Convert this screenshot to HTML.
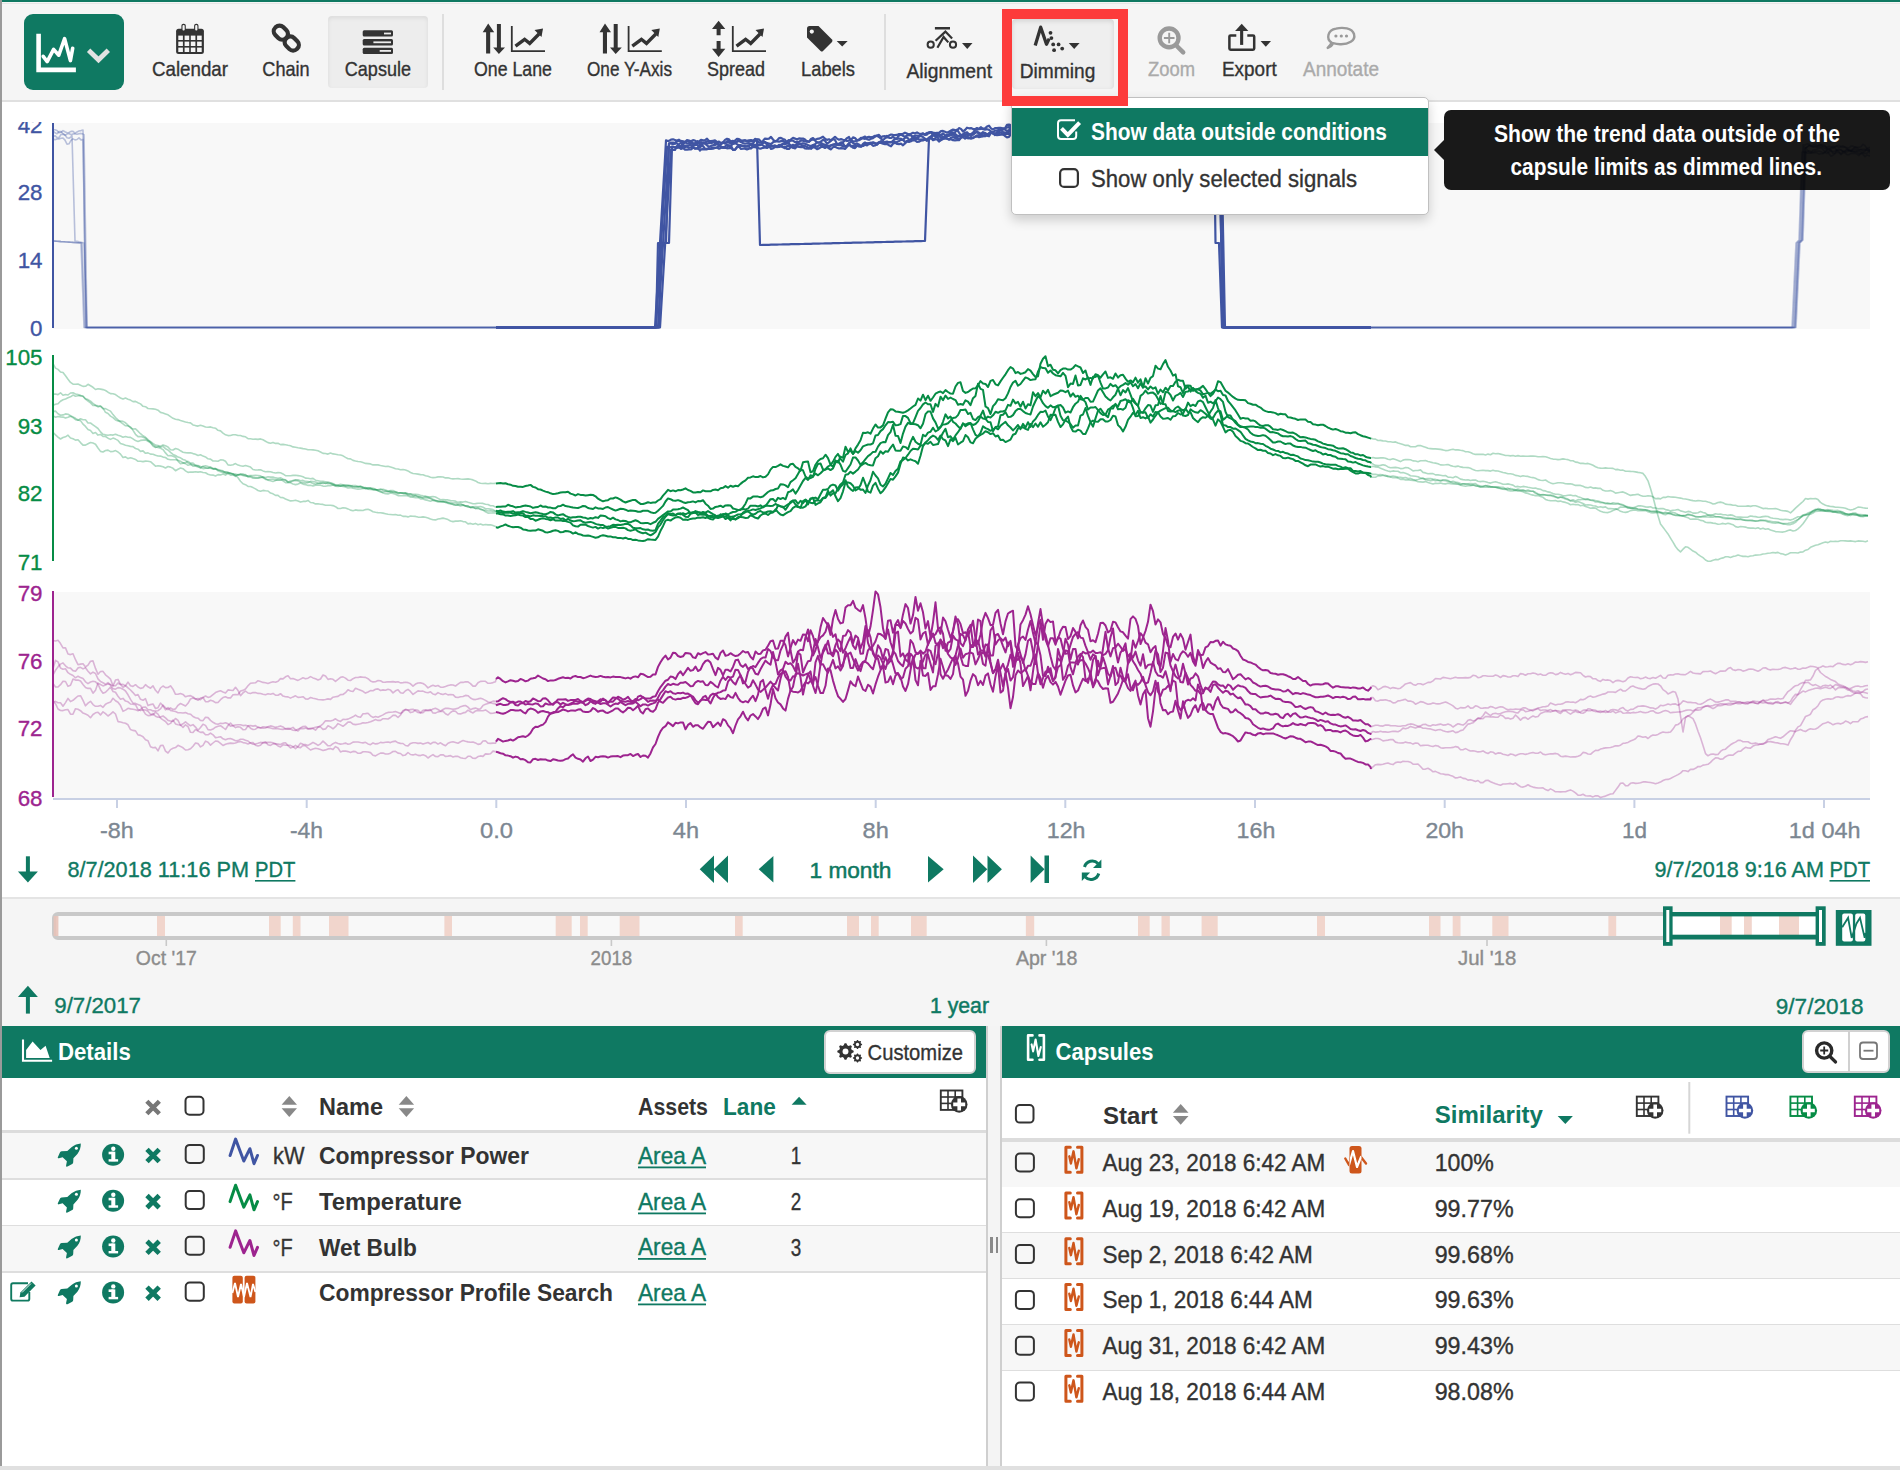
<!DOCTYPE html>
<html><head><meta charset="utf-8"><title>Seeq Trend - Dimming</title>
<style>
html,body{margin:0;padding:0;width:1900px;height:1470px;overflow:hidden;background:#fff}
body{position:relative;font-family:"Liberation Sans",sans-serif}
svg{position:absolute;left:0;top:0;overflow:visible}
svg text{font-family:"Liberation Sans",sans-serif}
</style></head><body>
<div id="bg"><div style="position:absolute;left:0px;top:0px;width:1900px;height:1470px;background:#fff"></div><div style="position:absolute;left:0px;top:0px;width:1900px;height:2px;background:#0f7962"></div><div style="position:absolute;left:0px;top:2px;width:1900px;height:98px;background:#f5f5f5"></div><div style="position:absolute;left:0px;top:3px;width:1900px;height:1px;background:#e6e6e6"></div><div style="position:absolute;left:0px;top:100px;width:1900px;height:2px;background:#e0e0e0"></div><div style="position:absolute;left:24px;top:14px;width:100px;height:76px;background:#0f7962;border-radius:9px"></div><div style="position:absolute;left:328px;top:16px;width:100px;height:72px;background:#ededed;border-radius:4px;box-shadow:inset 0 2px 4px rgba(0,0,0,0.08)"></div><div style="position:absolute;left:1012px;top:19px;width:102px;height:70px;background:#efefef;border-radius:4px;box-shadow:inset 0 2px 5px rgba(0,0,0,0.12)"></div><div style="position:absolute;left:442px;top:14px;width:2px;height:76px;background:#dedede"></div><div style="position:absolute;left:884px;top:14px;width:2px;height:76px;background:#dedede"></div><div style="position:absolute;left:53px;top:123px;width:1817px;height:206px;background:#f8f8f8"></div><div style="position:absolute;left:53px;top:592px;width:1817px;height:206px;background:#f8f8f8"></div><div style="position:absolute;left:0px;top:897px;width:1900px;height:2px;background:#e4e4e4"></div><div style="position:absolute;left:0px;top:899px;width:1900px;height:127px;background:#f5f5f5"></div><div style="position:absolute;left:0px;top:0px;width:2px;height:1466px;background:#9a9a9a"></div><div style="position:absolute;left:2px;top:1026px;width:984px;height:52px;background:#0f7962"></div><div style="position:absolute;left:986px;top:1026px;width:2px;height:440px;background:#cfcfcf"></div><div style="position:absolute;left:988px;top:1026px;width:12px;height:440px;background:#f4f4f4"></div><div style="position:absolute;left:1000px;top:1026px;width:2px;height:440px;background:#cfcfcf"></div><div style="position:absolute;left:990px;top:1237px;width:2.5px;height:16px;background:#8a8a8a"></div><div style="position:absolute;left:995.5px;top:1237px;width:2.5px;height:16px;background:#8a8a8a"></div><div style="position:absolute;left:1002px;top:1026px;width:898px;height:52px;background:#0f7962"></div><div style="position:absolute;left:0px;top:1466px;width:1900px;height:4px;background:#e0e0e0"></div><div style="position:absolute;left:2px;top:1130px;width:984px;height:3px;background:#dcdcdc"></div><div style="position:absolute;left:2px;top:1133px;width:984px;height:45px;background:#f7f7f7"></div><div style="position:absolute;left:2px;top:1178px;width:984px;height:2px;background:#dedede"></div><div style="position:absolute;left:2px;top:1180px;width:984px;height:45px;background:#fff"></div><div style="position:absolute;left:2px;top:1225px;width:984px;height:2px;background:#dedede"></div><div style="position:absolute;left:2px;top:1226px;width:984px;height:45px;background:#f7f7f7"></div><div style="position:absolute;left:2px;top:1271px;width:984px;height:2px;background:#dedede"></div><div style="position:absolute;left:1002px;top:1138px;width:898px;height:4px;background:#dcdcdc"></div><div style="position:absolute;left:1002px;top:1142px;width:898px;height:45px;background:#f7f7f7"></div><div style="position:absolute;left:1002px;top:1187px;width:898px;height:2px;background:#dedede"></div><div style="position:absolute;left:1002px;top:1187px;width:898px;height:45px;background:#fff"></div><div style="position:absolute;left:1002px;top:1232px;width:898px;height:2px;background:#dedede"></div><div style="position:absolute;left:1002px;top:1233px;width:898px;height:45px;background:#f7f7f7"></div><div style="position:absolute;left:1002px;top:1278px;width:898px;height:2px;background:#dedede"></div><div style="position:absolute;left:1002px;top:1279px;width:898px;height:45px;background:#fff"></div><div style="position:absolute;left:1002px;top:1324px;width:898px;height:2px;background:#dedede"></div><div style="position:absolute;left:1002px;top:1325px;width:898px;height:45px;background:#f7f7f7"></div><div style="position:absolute;left:1002px;top:1370px;width:898px;height:2px;background:#dedede"></div><div style="position:absolute;left:1002px;top:1371px;width:898px;height:45px;background:#fff"></div><div style="position:absolute;left:824px;top:1030px;width:152px;height:44px;background:#fff;border:2px solid #d2d2d2;border-radius:6px;box-sizing:border-box"></div><div style="position:absolute;left:1802px;top:1030px;width:88px;height:43px;background:#fff;border:2px solid #d2d2d2;border-radius:6px;box-sizing:border-box"></div><div style="position:absolute;left:1848px;top:1031px;width:2px;height:41px;background:#d0d0d0"></div></div>
<svg width="1900" height="1470" viewBox="0 0 1900 1470"><rect x="52" y="123" width="2" height="205" fill="#4055A3"/><rect x="52" y="355" width="2" height="206" fill="#068C45"/><rect x="52" y="591" width="2" height="206" fill="#9D248F"/><rect x="53" y="798" width="1817" height="2" fill="#c8d0e4"/><rect x="116.0" y="799" width="2" height="9" fill="#c8d0e4"/><rect x="305.7" y="799" width="2" height="9" fill="#c8d0e4"/><rect x="495.3" y="799" width="2" height="9" fill="#c8d0e4"/><rect x="685.0" y="799" width="2" height="9" fill="#c8d0e4"/><rect x="874.7" y="799" width="2" height="9" fill="#c8d0e4"/><rect x="1064.3" y="799" width="2" height="9" fill="#c8d0e4"/><rect x="1254.0" y="799" width="2" height="9" fill="#c8d0e4"/><rect x="1443.7" y="799" width="2" height="9" fill="#c8d0e4"/><rect x="1633.4" y="799" width="2" height="9" fill="#c8d0e4"/><rect x="1823.0" y="799" width="2" height="9" fill="#c8d0e4"/><clipPath id="plot"><rect x="54" y="100" width="1816" height="700"/></clipPath><g clip-path="url(#plot)"><path d="M53.0,129.7 L55.0,129.8 L57.0,130.4 L59.0,132.7 L61.0,132.3 L63.0,130.6 L65.0,131.7 L67.0,132.7 L69.0,132.5 L71.0,131.4 L73.0,131.4 L75.0,133.1 L77.0,132.0 L79.0,131.0 L81.0,130.6 L83.0,130.0 L85.0,262.7 L86.0,327.5 L87.0,327.5 L89.0,327.5 L91.0,327.5 L93.0,327.5 L95.0,327.5 L97.0,327.5 L99.0,327.5 L101.0,327.5 L103.0,327.5 L105.0,327.5 L107.0,327.5 L109.0,327.5 L111.0,327.5 L113.0,327.5 L115.0,327.5 L117.0,327.5 L119.0,327.5 L121.0,327.5 L123.0,327.5 L125.0,327.5 L127.0,327.5 L129.0,327.5 L131.0,327.5 L133.0,327.5 L135.0,327.5 L137.0,327.5 L139.0,327.5 L141.0,327.5 L143.0,327.5 L145.0,327.5 L147.0,327.5 L149.0,327.5 L151.0,327.5 L153.0,327.5 L155.0,327.5 L157.0,327.5 L159.0,327.5 L161.0,327.5 L163.0,327.5 L165.0,327.5 L167.0,327.5 L169.0,327.5 L171.0,327.5 L173.0,327.5 L175.0,327.5 L177.0,327.5 L179.0,327.5 L181.0,327.5 L183.0,327.5 L185.0,327.5 L187.0,327.5 L189.0,327.5 L191.0,327.5 L193.0,327.5 L195.0,327.5 L197.0,327.5 L199.0,327.5 L201.0,327.5 L203.0,327.5 L205.0,327.5 L207.0,327.5 L209.0,327.5 L211.0,327.5 L213.0,327.5 L215.0,327.5 L217.0,327.5 L219.0,327.5 L221.0,327.5 L223.0,327.5 L225.0,327.5 L227.0,327.5 L229.0,327.5 L231.0,327.5 L233.0,327.5 L235.0,327.5 L237.0,327.5 L239.0,327.5 L241.0,327.5 L243.0,327.5 L245.0,327.5 L247.0,327.5 L249.0,327.5 L251.0,327.5 L253.0,327.5 L255.0,327.5 L257.0,327.5 L259.0,327.5 L261.0,327.5 L263.0,327.5 L265.0,327.5 L267.0,327.5 L269.0,327.5 L271.0,327.5 L273.0,327.5 L275.0,327.5 L277.0,327.5 L279.0,327.5 L281.0,327.5 L283.0,327.5 L285.0,327.5 L287.0,327.5 L289.0,327.5 L291.0,327.5 L293.0,327.5 L295.0,327.5 L297.0,327.5 L299.0,327.5 L301.0,327.5 L303.0,327.5 L305.0,327.5 L307.0,327.5 L309.0,327.5 L311.0,327.5 L313.0,327.5 L315.0,327.5 L317.0,327.5 L319.0,327.5 L321.0,327.5 L323.0,327.5 L325.0,327.5 L327.0,327.5 L329.0,327.5 L331.0,327.5 L333.0,327.5 L335.0,327.5 L337.0,327.5 L339.0,327.5 L341.0,327.5 L343.0,327.5 L345.0,327.5 L347.0,327.5 L349.0,327.5 L351.0,327.5 L353.0,327.5 L355.0,327.5 L357.0,327.5 L359.0,327.5 L361.0,327.5 L363.0,327.5 L365.0,327.5 L367.0,327.5 L369.0,327.5 L371.0,327.5 L373.0,327.5 L375.0,327.5 L377.0,327.5 L379.0,327.5 L381.0,327.5 L383.0,327.5 L385.0,327.5 L387.0,327.5 L389.0,327.5 L391.0,327.5 L393.0,327.5 L395.0,327.5 L397.0,327.5 L399.0,327.5 L401.0,327.5 L403.0,327.5 L405.0,327.5 L407.0,327.5 L409.0,327.5 L411.0,327.5 L413.0,327.5 L415.0,327.5 L417.0,327.5 L419.0,327.5 L421.0,327.5 L423.0,327.5 L425.0,327.5 L427.0,327.5 L429.0,327.5 L431.0,327.5 L433.0,327.5 L435.0,327.5 L437.0,327.5 L439.0,327.5 L441.0,327.5 L443.0,327.5 L445.0,327.5 L447.0,327.5 L449.0,327.5 L451.0,327.5 L453.0,327.5 L455.0,327.5 L457.0,327.5 L459.0,327.5 L461.0,327.5 L463.0,327.5 L465.0,327.5 L467.0,327.5 L469.0,327.5 L471.0,327.5 L473.0,327.5 L475.0,327.5 L477.0,327.5 L479.0,327.5 L481.0,327.5 L483.0,327.5 L485.0,327.5 L487.0,327.5 L489.0,327.5 L491.0,327.5 L493.0,327.5 L495.0,327.5 L496.0,327.5" fill="none" stroke="#4055A3" stroke-opacity="0.35" stroke-width="1.6" stroke-linejoin="round"/><path d="M1371.0,327.5 L1373.0,327.5 L1375.0,327.5 L1377.0,327.5 L1379.0,327.5 L1381.0,327.5 L1383.0,327.5 L1385.0,327.5 L1387.0,327.5 L1389.0,327.5 L1391.0,327.5 L1393.0,327.5 L1395.0,327.5 L1397.0,327.5 L1399.0,327.5 L1401.0,327.5 L1403.0,327.5 L1405.0,327.5 L1407.0,327.5 L1409.0,327.5 L1411.0,327.5 L1413.0,327.5 L1415.0,327.5 L1417.0,327.5 L1419.0,327.5 L1421.0,327.5 L1423.0,327.5 L1425.0,327.5 L1427.0,327.5 L1429.0,327.5 L1431.0,327.5 L1433.0,327.5 L1435.0,327.5 L1437.0,327.5 L1439.0,327.5 L1441.0,327.5 L1443.0,327.5 L1445.0,327.5 L1447.0,327.5 L1449.0,327.5 L1451.0,327.5 L1453.0,327.5 L1455.0,327.5 L1457.0,327.5 L1459.0,327.5 L1461.0,327.5 L1463.0,327.5 L1465.0,327.5 L1467.0,327.5 L1469.0,327.5 L1471.0,327.5 L1473.0,327.5 L1475.0,327.5 L1477.0,327.5 L1479.0,327.5 L1481.0,327.5 L1483.0,327.5 L1485.0,327.5 L1487.0,327.5 L1489.0,327.5 L1491.0,327.5 L1493.0,327.5 L1495.0,327.5 L1497.0,327.5 L1499.0,327.5 L1501.0,327.5 L1503.0,327.5 L1505.0,327.5 L1507.0,327.5 L1509.0,327.5 L1511.0,327.5 L1513.0,327.5 L1515.0,327.5 L1517.0,327.5 L1519.0,327.5 L1521.0,327.5 L1523.0,327.5 L1525.0,327.5 L1527.0,327.5 L1529.0,327.5 L1531.0,327.5 L1533.0,327.5 L1535.0,327.5 L1537.0,327.5 L1539.0,327.5 L1541.0,327.5 L1543.0,327.5 L1545.0,327.5 L1547.0,327.5 L1549.0,327.5 L1551.0,327.5 L1553.0,327.5 L1555.0,327.5 L1557.0,327.5 L1559.0,327.5 L1561.0,327.5 L1563.0,327.5 L1565.0,327.5 L1567.0,327.5 L1569.0,327.5 L1571.0,327.5 L1573.0,327.5 L1575.0,327.5 L1577.0,327.5 L1579.0,327.5 L1581.0,327.5 L1583.0,327.5 L1585.0,327.5 L1587.0,327.5 L1589.0,327.5 L1591.0,327.5 L1593.0,327.5 L1595.0,327.5 L1597.0,327.5 L1599.0,327.5 L1601.0,327.5 L1603.0,327.5 L1605.0,327.5 L1607.0,327.5 L1609.0,327.5 L1611.0,327.5 L1613.0,327.5 L1615.0,327.5 L1617.0,327.5 L1619.0,327.5 L1621.0,327.5 L1623.0,327.5 L1625.0,327.5 L1627.0,327.5 L1629.0,327.5 L1631.0,327.5 L1633.0,327.5 L1635.0,327.5 L1637.0,327.5 L1639.0,327.5 L1641.0,327.5 L1643.0,327.5 L1645.0,327.5 L1647.0,327.5 L1649.0,327.5 L1651.0,327.5 L1653.0,327.5 L1655.0,327.5 L1657.0,327.5 L1659.0,327.5 L1661.0,327.5 L1663.0,327.5 L1665.0,327.5 L1667.0,327.5 L1669.0,327.5 L1671.0,327.5 L1673.0,327.5 L1675.0,327.5 L1677.0,327.5 L1679.0,327.5 L1681.0,327.5 L1683.0,327.5 L1685.0,327.5 L1687.0,327.5 L1689.0,327.5 L1691.0,327.5 L1693.0,327.5 L1695.0,327.5 L1697.0,327.5 L1699.0,327.5 L1701.0,327.5 L1703.0,327.5 L1705.0,327.5 L1707.0,327.5 L1709.0,327.5 L1711.0,327.5 L1713.0,327.5 L1715.0,327.5 L1717.0,327.5 L1719.0,327.5 L1721.0,327.5 L1723.0,327.5 L1725.0,327.5 L1727.0,327.5 L1729.0,327.5 L1731.0,327.5 L1733.0,327.5 L1735.0,327.5 L1737.0,327.5 L1739.0,327.5 L1741.0,327.5 L1743.0,327.5 L1745.0,327.5 L1747.0,327.5 L1749.0,327.5 L1751.0,327.5 L1753.0,327.5 L1755.0,327.5 L1757.0,327.5 L1759.0,327.5 L1761.0,327.5 L1763.0,327.5 L1765.0,327.5 L1767.0,327.5 L1769.0,327.5 L1771.0,327.5 L1773.0,327.5 L1775.0,327.5 L1777.0,327.5 L1779.0,327.5 L1781.0,327.5 L1783.0,327.5 L1785.0,327.5 L1787.0,327.5 L1789.0,327.5 L1791.0,327.5 L1793.0,327.5 L1795.0,285.2 L1797.0,243.0 L1799.0,241.0 L1800.0,240.0 L1801.0,208.3 L1803.0,144.9 L1805.0,145.0 L1807.0,143.9 L1809.0,144.1 L1811.0,146.1 L1813.0,145.2 L1815.0,144.2 L1817.0,145.8 L1819.0,145.1 L1821.0,144.7 L1823.0,144.8 L1825.0,145.7 L1827.0,149.0 L1829.0,149.9 L1831.0,147.6 L1833.0,146.4 L1835.0,146.8 L1837.0,146.2 L1839.0,147.6 L1841.0,146.4 L1843.0,145.9 L1845.0,147.2 L1847.0,147.6 L1849.0,147.9 L1851.0,146.0 L1853.0,146.1 L1855.0,147.5 L1857.0,147.3 L1859.0,147.2 L1861.0,146.7 L1863.0,144.3 L1865.0,145.7 L1867.0,148.4 L1869.0,147.8 L1870.0,147.2" fill="none" stroke="#4055A3" stroke-opacity="0.35" stroke-width="1.6" stroke-linejoin="round"/><path d="M496.0,327.5 L497.0,327.5 L499.0,327.5 L501.0,327.5 L503.0,327.5 L505.0,327.5 L507.0,327.5 L509.0,327.5 L511.0,327.5 L513.0,327.5 L515.0,327.5 L517.0,327.5 L519.0,327.5 L521.0,327.5 L523.0,327.5 L525.0,327.5 L527.0,327.5 L529.0,327.5 L531.0,327.5 L533.0,327.5 L535.0,327.5 L537.0,327.5 L539.0,327.5 L541.0,327.5 L543.0,327.5 L545.0,327.5 L547.0,327.5 L549.0,327.5 L551.0,327.5 L553.0,327.5 L555.0,327.5 L557.0,327.5 L559.0,327.5 L561.0,327.5 L563.0,327.5 L565.0,327.5 L567.0,327.5 L569.0,327.5 L571.0,327.5 L573.0,327.5 L575.0,327.5 L577.0,327.5 L579.0,327.5 L581.0,327.5 L583.0,327.5 L585.0,327.5 L587.0,327.5 L589.0,327.5 L591.0,327.5 L593.0,327.5 L595.0,327.5 L597.0,327.5 L599.0,327.5 L601.0,327.5 L603.0,327.5 L605.0,327.5 L607.0,327.5 L609.0,327.5 L611.0,327.5 L613.0,327.5 L615.0,327.5 L617.0,327.5 L619.0,327.5 L621.0,327.5 L623.0,327.5 L625.0,327.5 L627.0,327.5 L629.0,327.5 L631.0,327.5 L633.0,327.5 L635.0,327.5 L637.0,327.5 L639.0,327.5 L641.0,327.5 L643.0,327.5 L645.0,327.5 L647.0,327.5 L649.0,327.5 L651.0,327.5 L653.0,327.5 L655.0,327.5 L657.0,293.6 L659.0,259.7 L661.0,225.8 L663.0,191.9 L665.0,158.4 L666.0,140.4 L667.0,140.6 L669.0,140.9 L671.0,139.6 L673.0,139.3 L675.0,140.0 L677.0,141.0 L679.0,141.1 L681.0,140.8 L683.0,143.0 L685.0,142.2 L687.0,140.1 L689.0,140.6 L691.0,141.2 L693.0,140.1 L695.0,140.5 L697.0,143.4 L699.0,142.7 L700.0,140.6 L701.0,139.8 L703.0,140.3 L705.0,140.1 L707.0,138.7 L709.0,141.0 L711.0,141.2 L713.0,141.0 L715.0,143.3 L717.0,142.5 L719.0,141.5 L721.0,143.1 L723.0,142.4 L725.0,139.9 L727.0,138.8 L729.0,139.4 L731.0,142.0 L733.0,142.9 L735.0,140.5 L737.0,138.8 L739.0,139.2 L741.0,140.3 L743.0,140.5 L745.0,140.4 L747.0,140.9 L749.0,140.3 L751.0,140.0 L753.0,140.5 L755.0,140.4 L757.0,140.6 L759.0,142.5 L761.0,142.5 L763.0,140.8 L765.0,138.6 L767.0,138.9 L769.0,138.6 L771.0,136.9 L773.0,139.5 L775.0,141.5 L777.0,140.5 L779.0,138.2 L781.0,137.9 L783.0,138.9 L785.0,139.8 L787.0,142.6 L789.0,142.2 L791.0,139.3 L793.0,137.9 L795.0,138.6 L797.0,139.5 L799.0,138.4 L801.0,138.7 L803.0,138.6 L805.0,139.6 L807.0,141.6 L809.0,141.6 L811.0,140.1 L813.0,139.5 L815.0,139.8 L817.0,138.9 L819.0,138.7 L821.0,137.8 L823.0,136.7 L825.0,138.7 L827.0,139.9 L829.0,139.3 L831.0,140.4 L833.0,138.5 L835.0,136.8 L837.0,138.6 L839.0,139.7 L841.0,139.1 L843.0,139.7 L845.0,140.2 L847.0,138.1 L849.0,137.0 L850.0,138.9 L851.0,140.1 L853.0,137.4 L855.0,138.1 L857.0,140.3 L859.0,140.2 L861.0,139.1 L863.0,137.4 L865.0,136.5 L867.0,139.1 L869.0,139.8 L871.0,138.8 L873.0,138.2 L875.0,136.7 L877.0,135.5 L879.0,134.9 L881.0,137.2 L883.0,136.3 L885.0,136.2 L887.0,137.6 L889.0,135.4 L891.0,134.5 L893.0,134.9 L895.0,135.1 L897.0,134.9 L899.0,134.0 L901.0,134.1 L903.0,133.8 L905.0,132.7 L907.0,133.5 L909.0,135.4 L911.0,133.8 L913.0,132.8 L915.0,133.5 L917.0,132.4 L919.0,133.7 L921.0,134.0 L923.0,134.5 L925.0,134.1 L927.0,132.9 L929.0,133.2 L931.0,132.0 L933.0,132.6 L935.0,133.0 L937.0,132.9 L939.0,132.9 L941.0,131.1 L943.0,130.9 L945.0,131.8 L947.0,132.7 L949.0,131.6 L951.0,130.5 L953.0,129.6 L955.0,130.1 L957.0,130.6 L959.0,128.1 L961.0,128.9 L963.0,131.5 L965.0,130.0 L967.0,127.7 L969.0,128.3 L971.0,128.1 L973.0,129.1 L975.0,129.2 L977.0,128.0 L979.0,129.2 L981.0,129.0 L983.0,128.7 L985.0,128.4 L987.0,126.6 L989.0,125.7 L991.0,128.4 L993.0,129.7 L995.0,128.1 L997.0,128.2 L999.0,127.9 L1001.0,127.9 L1003.0,129.4 L1005.0,128.2 L1007.0,124.8 L1009.0,124.6 L1010.0,124.8 L1011.0,126.4 L1013.0,128.5 L1015.0,126.8 L1017.0,124.7 L1019.0,125.2 L1021.0,127.9 L1023.0,125.5 L1025.0,124.7 L1027.0,126.3 L1029.0,126.8 L1031.0,126.8 L1033.0,125.5 L1035.0,125.0 L1037.0,124.4 L1039.0,127.1 L1041.0,128.8 L1043.0,127.1 L1045.0,125.4 L1047.0,124.0 L1049.0,124.4 L1051.0,126.2 L1053.0,126.5 L1055.0,126.4 L1057.0,125.4 L1059.0,125.4 L1061.0,126.4 L1063.0,127.7 L1065.0,129.5 L1067.0,128.1 L1069.0,125.6 L1071.0,125.6 L1073.0,125.7 L1075.0,125.1 L1077.0,125.6 L1079.0,125.3 L1081.0,125.9 L1083.0,126.7 L1085.0,126.4 L1087.0,126.3 L1089.0,125.3 L1091.0,124.6 L1093.0,125.0 L1095.0,125.4 L1097.0,125.8 L1099.0,126.3 L1101.0,124.8 L1103.0,124.8 L1105.0,124.8 L1107.0,124.2 L1109.0,125.1 L1111.0,123.7 L1113.0,124.1 L1115.0,126.2 L1117.0,125.9 L1119.0,125.4 L1121.0,125.1 L1123.0,124.6 L1125.0,124.7 L1127.0,125.0 L1129.0,125.4 L1131.0,124.7 L1133.0,124.8 L1135.0,126.1 L1137.0,125.7 L1139.0,125.2 L1141.0,125.8 L1143.0,124.6 L1145.0,124.5 L1147.0,126.3 L1149.0,126.1 L1151.0,126.2 L1153.0,125.3 L1155.0,124.7 L1157.0,125.9 L1159.0,126.5 L1161.0,126.1 L1163.0,124.2 L1165.0,124.5 L1167.0,127.1 L1169.0,127.5 L1171.0,126.6 L1173.0,124.1 L1175.0,124.8 L1177.0,126.1 L1179.0,122.8 L1181.0,123.2 L1183.0,124.2 L1185.0,122.6 L1187.0,123.4 L1189.0,125.8 L1191.0,126.0 L1193.0,125.1 L1195.0,127.1 L1197.0,128.3 L1199.0,126.5 L1201.0,124.8 L1203.0,123.6 L1205.0,123.2 L1207.0,124.8 L1209.0,125.8 L1210.0,125.5 L1211.0,126.1 L1213.0,125.2 L1215.0,124.2 L1217.0,125.6 L1219.0,126.3 L1220.0,126.6 L1221.0,175.6 L1223.0,276.9 L1224.0,327.5 L1225.0,327.5 L1227.0,327.5 L1229.0,327.5 L1231.0,327.5 L1233.0,327.5 L1235.0,327.5 L1237.0,327.5 L1239.0,327.5 L1241.0,327.5 L1243.0,327.5 L1245.0,327.5 L1247.0,327.5 L1249.0,327.5 L1251.0,327.5 L1253.0,327.5 L1255.0,327.5 L1257.0,327.5 L1259.0,327.5 L1261.0,327.5 L1263.0,327.5 L1265.0,327.5 L1267.0,327.5 L1269.0,327.5 L1271.0,327.5 L1273.0,327.5 L1275.0,327.5 L1277.0,327.5 L1279.0,327.5 L1281.0,327.5 L1283.0,327.5 L1285.0,327.5 L1287.0,327.5 L1289.0,327.5 L1291.0,327.5 L1293.0,327.5 L1295.0,327.5 L1297.0,327.5 L1299.0,327.5 L1301.0,327.5 L1303.0,327.5 L1305.0,327.5 L1307.0,327.5 L1309.0,327.5 L1311.0,327.5 L1313.0,327.5 L1315.0,327.5 L1317.0,327.5 L1319.0,327.5 L1321.0,327.5 L1323.0,327.5 L1325.0,327.5 L1327.0,327.5 L1329.0,327.5 L1331.0,327.5 L1333.0,327.5 L1335.0,327.5 L1337.0,327.5 L1339.0,327.5 L1341.0,327.5 L1343.0,327.5 L1345.0,327.5 L1347.0,327.5 L1349.0,327.5 L1351.0,327.5 L1353.0,327.5 L1355.0,327.5 L1357.0,327.5 L1359.0,327.5 L1361.0,327.5 L1363.0,327.5 L1365.0,327.5 L1367.0,327.5 L1369.0,327.5 L1371.0,327.5" fill="none" stroke="#4055A3" stroke-width="2.2" stroke-linejoin="round"/><path d="M53.0,130.9 L55.0,132.8 L57.0,133.8 L59.0,131.6 L61.0,131.5 L63.0,133.7 L65.0,135.2 L67.0,134.1 L69.0,133.5 L71.0,134.7 L73.0,133.9 L75.0,133.7 L77.0,134.3 L79.0,133.7 L81.0,133.4 L83.0,134.1 L84.0,134.6 L85.0,198.8 L87.0,327.5 L89.0,327.5 L91.0,327.5 L93.0,327.5 L95.0,327.5 L97.0,327.5 L99.0,327.5 L101.0,327.5 L103.0,327.5 L105.0,327.5 L107.0,327.5 L109.0,327.5 L111.0,327.5 L113.0,327.5 L115.0,327.5 L117.0,327.5 L119.0,327.5 L121.0,327.5 L123.0,327.5 L125.0,327.5 L127.0,327.5 L129.0,327.5 L131.0,327.5 L133.0,327.5 L135.0,327.5 L137.0,327.5 L139.0,327.5 L141.0,327.5 L143.0,327.5 L145.0,327.5 L147.0,327.5 L149.0,327.5 L151.0,327.5 L153.0,327.5 L155.0,327.5 L157.0,327.5 L159.0,327.5 L161.0,327.5 L163.0,327.5 L165.0,327.5 L167.0,327.5 L169.0,327.5 L171.0,327.5 L173.0,327.5 L175.0,327.5 L177.0,327.5 L179.0,327.5 L181.0,327.5 L183.0,327.5 L185.0,327.5 L187.0,327.5 L189.0,327.5 L191.0,327.5 L193.0,327.5 L195.0,327.5 L197.0,327.5 L199.0,327.5 L201.0,327.5 L203.0,327.5 L205.0,327.5 L207.0,327.5 L209.0,327.5 L211.0,327.5 L213.0,327.5 L215.0,327.5 L217.0,327.5 L219.0,327.5 L221.0,327.5 L223.0,327.5 L225.0,327.5 L227.0,327.5 L229.0,327.5 L231.0,327.5 L233.0,327.5 L235.0,327.5 L237.0,327.5 L239.0,327.5 L241.0,327.5 L243.0,327.5 L245.0,327.5 L247.0,327.5 L249.0,327.5 L251.0,327.5 L253.0,327.5 L255.0,327.5 L257.0,327.5 L259.0,327.5 L261.0,327.5 L263.0,327.5 L265.0,327.5 L267.0,327.5 L269.0,327.5 L271.0,327.5 L273.0,327.5 L275.0,327.5 L277.0,327.5 L279.0,327.5 L281.0,327.5 L283.0,327.5 L285.0,327.5 L287.0,327.5 L289.0,327.5 L291.0,327.5 L293.0,327.5 L295.0,327.5 L297.0,327.5 L299.0,327.5 L301.0,327.5 L303.0,327.5 L305.0,327.5 L307.0,327.5 L309.0,327.5 L311.0,327.5 L313.0,327.5 L315.0,327.5 L317.0,327.5 L319.0,327.5 L321.0,327.5 L323.0,327.5 L325.0,327.5 L327.0,327.5 L329.0,327.5 L331.0,327.5 L333.0,327.5 L335.0,327.5 L337.0,327.5 L339.0,327.5 L341.0,327.5 L343.0,327.5 L345.0,327.5 L347.0,327.5 L349.0,327.5 L351.0,327.5 L353.0,327.5 L355.0,327.5 L357.0,327.5 L359.0,327.5 L361.0,327.5 L363.0,327.5 L365.0,327.5 L367.0,327.5 L369.0,327.5 L371.0,327.5 L373.0,327.5 L375.0,327.5 L377.0,327.5 L379.0,327.5 L381.0,327.5 L383.0,327.5 L385.0,327.5 L387.0,327.5 L389.0,327.5 L391.0,327.5 L393.0,327.5 L395.0,327.5 L397.0,327.5 L399.0,327.5 L401.0,327.5 L403.0,327.5 L405.0,327.5 L407.0,327.5 L409.0,327.5 L411.0,327.5 L413.0,327.5 L415.0,327.5 L417.0,327.5 L419.0,327.5 L421.0,327.5 L423.0,327.5 L425.0,327.5 L427.0,327.5 L429.0,327.5 L431.0,327.5 L433.0,327.5 L435.0,327.5 L437.0,327.5 L439.0,327.5 L441.0,327.5 L443.0,327.5 L445.0,327.5 L447.0,327.5 L449.0,327.5 L451.0,327.5 L453.0,327.5 L455.0,327.5 L457.0,327.5 L459.0,327.5 L461.0,327.5 L463.0,327.5 L465.0,327.5 L467.0,327.5 L469.0,327.5 L471.0,327.5 L473.0,327.5 L475.0,327.5 L477.0,327.5 L479.0,327.5 L481.0,327.5 L483.0,327.5 L485.0,327.5 L487.0,327.5 L489.0,327.5 L491.0,327.5 L493.0,327.5 L495.0,327.5 L496.0,327.5" fill="none" stroke="#4055A3" stroke-opacity="0.35" stroke-width="1.6" stroke-linejoin="round"/><path d="M1371.0,327.5 L1373.0,327.5 L1375.0,327.5 L1377.0,327.5 L1379.0,327.5 L1381.0,327.5 L1383.0,327.5 L1385.0,327.5 L1387.0,327.5 L1389.0,327.5 L1391.0,327.5 L1393.0,327.5 L1395.0,327.5 L1397.0,327.5 L1399.0,327.5 L1401.0,327.5 L1403.0,327.5 L1405.0,327.5 L1407.0,327.5 L1409.0,327.5 L1411.0,327.5 L1413.0,327.5 L1415.0,327.5 L1417.0,327.5 L1419.0,327.5 L1421.0,327.5 L1423.0,327.5 L1425.0,327.5 L1427.0,327.5 L1429.0,327.5 L1431.0,327.5 L1433.0,327.5 L1435.0,327.5 L1437.0,327.5 L1439.0,327.5 L1441.0,327.5 L1443.0,327.5 L1445.0,327.5 L1447.0,327.5 L1449.0,327.5 L1451.0,327.5 L1453.0,327.5 L1455.0,327.5 L1457.0,327.5 L1459.0,327.5 L1461.0,327.5 L1463.0,327.5 L1465.0,327.5 L1467.0,327.5 L1469.0,327.5 L1471.0,327.5 L1473.0,327.5 L1475.0,327.5 L1477.0,327.5 L1479.0,327.5 L1481.0,327.5 L1483.0,327.5 L1485.0,327.5 L1487.0,327.5 L1489.0,327.5 L1491.0,327.5 L1493.0,327.5 L1495.0,327.5 L1497.0,327.5 L1499.0,327.5 L1501.0,327.5 L1503.0,327.5 L1505.0,327.5 L1507.0,327.5 L1509.0,327.5 L1511.0,327.5 L1513.0,327.5 L1515.0,327.5 L1517.0,327.5 L1519.0,327.5 L1521.0,327.5 L1523.0,327.5 L1525.0,327.5 L1527.0,327.5 L1529.0,327.5 L1531.0,327.5 L1533.0,327.5 L1535.0,327.5 L1537.0,327.5 L1539.0,327.5 L1541.0,327.5 L1543.0,327.5 L1545.0,327.5 L1547.0,327.5 L1549.0,327.5 L1551.0,327.5 L1553.0,327.5 L1555.0,327.5 L1557.0,327.5 L1559.0,327.5 L1561.0,327.5 L1563.0,327.5 L1565.0,327.5 L1567.0,327.5 L1569.0,327.5 L1571.0,327.5 L1573.0,327.5 L1575.0,327.5 L1577.0,327.5 L1579.0,327.5 L1581.0,327.5 L1583.0,327.5 L1585.0,327.5 L1587.0,327.5 L1589.0,327.5 L1591.0,327.5 L1593.0,327.5 L1595.0,327.5 L1597.0,327.5 L1599.0,327.5 L1601.0,327.5 L1603.0,327.5 L1605.0,327.5 L1607.0,327.5 L1609.0,327.5 L1611.0,327.5 L1613.0,327.5 L1615.0,327.5 L1617.0,327.5 L1619.0,327.5 L1621.0,327.5 L1623.0,327.5 L1625.0,327.5 L1627.0,327.5 L1629.0,327.5 L1631.0,327.5 L1633.0,327.5 L1635.0,327.5 L1637.0,327.5 L1639.0,327.5 L1641.0,327.5 L1643.0,327.5 L1645.0,327.5 L1647.0,327.5 L1649.0,327.5 L1651.0,327.5 L1653.0,327.5 L1655.0,327.5 L1657.0,327.5 L1659.0,327.5 L1661.0,327.5 L1663.0,327.5 L1665.0,327.5 L1667.0,327.5 L1669.0,327.5 L1671.0,327.5 L1673.0,327.5 L1675.0,327.5 L1677.0,327.5 L1679.0,327.5 L1681.0,327.5 L1683.0,327.5 L1685.0,327.5 L1687.0,327.5 L1689.0,327.5 L1691.0,327.5 L1693.0,327.5 L1695.0,327.5 L1697.0,327.5 L1699.0,327.5 L1701.0,327.5 L1703.0,327.5 L1705.0,327.5 L1707.0,327.5 L1709.0,327.5 L1711.0,327.5 L1713.0,327.5 L1715.0,327.5 L1717.0,327.5 L1719.0,327.5 L1721.0,327.5 L1723.0,327.5 L1725.0,327.5 L1727.0,327.5 L1729.0,327.5 L1731.0,327.5 L1733.0,327.5 L1735.0,327.5 L1737.0,327.5 L1739.0,327.5 L1741.0,327.5 L1743.0,327.5 L1745.0,327.5 L1747.0,327.5 L1749.0,327.5 L1751.0,327.5 L1753.0,327.5 L1755.0,327.5 L1757.0,327.5 L1759.0,327.5 L1761.0,327.5 L1763.0,327.5 L1765.0,327.5 L1767.0,327.5 L1769.0,327.5 L1771.0,327.5 L1773.0,327.5 L1775.0,327.5 L1777.0,327.5 L1779.0,327.5 L1781.0,327.5 L1783.0,327.5 L1785.0,327.5 L1787.0,327.5 L1789.0,327.5 L1791.0,327.5 L1793.0,327.5 L1794.0,327.5 L1795.0,306.4 L1797.0,264.1 L1798.0,243.0 L1799.0,242.0 L1801.0,240.0 L1803.0,177.7 L1804.0,146.5 L1805.0,148.6 L1807.0,147.2 L1809.0,145.6 L1811.0,146.3 L1813.0,146.9 L1815.0,146.0 L1817.0,146.5 L1819.0,145.6 L1821.0,144.8 L1823.0,146.3 L1825.0,146.5 L1827.0,147.2 L1829.0,146.4 L1831.0,146.7 L1833.0,147.7 L1835.0,146.7 L1837.0,145.7 L1839.0,145.3 L1841.0,146.9 L1843.0,147.1 L1845.0,146.9 L1847.0,148.8 L1849.0,149.7 L1851.0,150.2 L1853.0,149.1 L1855.0,146.8 L1857.0,148.0 L1859.0,149.4 L1861.0,149.5 L1863.0,149.3 L1865.0,149.4 L1867.0,150.2 L1869.0,149.9 L1870.0,149.6" fill="none" stroke="#4055A3" stroke-opacity="0.35" stroke-width="1.6" stroke-linejoin="round"/><path d="M496.0,327.5 L497.0,327.5 L499.0,327.5 L501.0,327.5 L503.0,327.5 L505.0,327.5 L507.0,327.5 L509.0,327.5 L511.0,327.5 L513.0,327.5 L515.0,327.5 L517.0,327.5 L519.0,327.5 L521.0,327.5 L523.0,327.5 L525.0,327.5 L527.0,327.5 L529.0,327.5 L531.0,327.5 L533.0,327.5 L535.0,327.5 L537.0,327.5 L539.0,327.5 L541.0,327.5 L543.0,327.5 L545.0,327.5 L547.0,327.5 L549.0,327.5 L551.0,327.5 L553.0,327.5 L555.0,327.5 L557.0,327.5 L559.0,327.5 L561.0,327.5 L563.0,327.5 L565.0,327.5 L567.0,327.5 L569.0,327.5 L571.0,327.5 L573.0,327.5 L575.0,327.5 L577.0,327.5 L579.0,327.5 L581.0,327.5 L583.0,327.5 L585.0,327.5 L587.0,327.5 L589.0,327.5 L591.0,327.5 L593.0,327.5 L595.0,327.5 L597.0,327.5 L599.0,327.5 L601.0,327.5 L603.0,327.5 L605.0,327.5 L607.0,327.5 L609.0,327.5 L611.0,327.5 L613.0,327.5 L615.0,327.5 L617.0,327.5 L619.0,327.5 L621.0,327.5 L623.0,327.5 L625.0,327.5 L627.0,327.5 L629.0,327.5 L631.0,327.5 L633.0,327.5 L635.0,327.5 L637.0,327.5 L639.0,327.5 L641.0,327.5 L643.0,327.5 L645.0,327.5 L647.0,327.5 L649.0,327.5 L651.0,327.5 L653.0,327.5 L655.0,327.5 L656.0,327.5 L657.0,285.2 L658.0,243.0 L659.0,243.0 L661.0,243.0 L663.0,243.0 L665.0,243.0 L666.0,243.0 L667.0,209.5 L669.0,143.3 L671.0,143.5 L673.0,144.3 L675.0,143.8 L677.0,140.6 L679.0,139.7 L681.0,141.5 L683.0,141.2 L685.0,141.8 L687.0,143.7 L689.0,143.1 L691.0,141.1 L693.0,143.3 L695.0,143.9 L697.0,141.0 L699.0,141.6 L700.0,143.1 L701.0,142.2 L703.0,142.5 L705.0,142.7 L707.0,141.2 L709.0,141.7 L711.0,143.2 L713.0,142.4 L715.0,142.0 L717.0,142.5 L719.0,144.7 L721.0,144.1 L723.0,142.8 L725.0,143.4 L727.0,142.0 L729.0,142.6 L731.0,143.5 L733.0,144.0 L735.0,143.5 L737.0,141.8 L739.0,141.0 L741.0,141.9 L743.0,142.9 L745.0,143.7 L747.0,143.5 L749.0,143.2 L751.0,144.1 L753.0,143.3 L755.0,140.6 L757.0,139.4 L759.0,139.4 L761.0,141.8 L763.0,142.3 L765.0,142.0 L767.0,143.2 L769.0,143.6 L771.0,144.0 L773.0,142.3 L775.0,141.2 L777.0,141.4 L779.0,141.7 L781.0,141.1 L783.0,140.9 L785.0,142.8 L787.0,141.3 L789.0,140.0 L791.0,140.7 L793.0,140.6 L795.0,142.1 L797.0,141.9 L799.0,141.8 L801.0,140.4 L803.0,140.7 L805.0,141.5 L807.0,141.1 L809.0,141.8 L811.0,138.9 L813.0,138.0 L815.0,140.5 L817.0,142.5 L819.0,142.6 L821.0,141.4 L823.0,139.8 L825.0,140.8 L827.0,143.7 L829.0,142.4 L831.0,140.6 L833.0,139.1 L835.0,140.0 L837.0,143.9 L839.0,143.7 L841.0,142.4 L843.0,142.2 L845.0,140.2 L847.0,140.9 L849.0,140.6 L850.0,139.2 L851.0,140.5 L853.0,141.3 L855.0,141.3 L857.0,140.7 L859.0,139.5 L861.0,137.8 L863.0,138.4 L865.0,138.8 L867.0,137.4 L869.0,136.8 L871.0,137.4 L873.0,136.7 L875.0,135.8 L877.0,135.8 L879.0,137.0 L881.0,138.7 L883.0,140.2 L885.0,138.3 L887.0,135.8 L889.0,137.8 L891.0,138.0 L893.0,136.8 L895.0,138.4 L897.0,138.2 L899.0,135.5 L901.0,134.5 L903.0,135.7 L905.0,136.9 L907.0,135.3 L909.0,134.0 L911.0,135.5 L913.0,136.8 L915.0,135.6 L917.0,135.5 L919.0,136.4 L921.0,134.1 L923.0,133.2 L925.0,135.0 L927.0,134.6 L929.0,132.2 L931.0,132.3 L933.0,134.7 L935.0,136.2 L937.0,133.4 L939.0,134.2 L941.0,135.0 L943.0,133.4 L945.0,135.3 L947.0,135.2 L949.0,134.1 L951.0,132.0 L953.0,132.3 L955.0,132.5 L957.0,129.6 L959.0,132.6 L961.0,135.3 L963.0,134.3 L965.0,132.7 L967.0,132.2 L969.0,134.3 L971.0,134.2 L973.0,132.6 L975.0,130.0 L977.0,129.7 L979.0,128.7 L981.0,127.2 L983.0,129.1 L985.0,129.6 L987.0,129.2 L989.0,129.8 L991.0,131.5 L993.0,132.7 L995.0,130.7 L997.0,130.5 L999.0,129.7 L1001.0,128.2 L1003.0,129.5 L1005.0,128.6 L1007.0,127.4 L1009.0,127.1 L1010.0,127.4 L1011.0,130.0 L1013.0,129.3 L1015.0,128.0 L1017.0,127.8 L1019.0,126.6 L1021.0,126.3 L1023.0,128.6 L1025.0,131.8 L1027.0,130.9 L1029.0,128.1 L1031.0,128.3 L1033.0,128.6 L1035.0,128.7 L1037.0,129.2 L1039.0,128.7 L1041.0,129.0 L1043.0,128.2 L1045.0,127.3 L1047.0,126.2 L1049.0,126.2 L1051.0,126.4 L1053.0,126.7 L1055.0,127.1 L1057.0,127.3 L1059.0,128.5 L1061.0,127.1 L1063.0,126.0 L1065.0,126.4 L1067.0,127.8 L1069.0,130.1 L1071.0,130.2 L1073.0,128.3 L1075.0,128.8 L1077.0,127.8 L1079.0,127.8 L1081.0,128.5 L1083.0,124.7 L1085.0,127.6 L1087.0,131.5 L1089.0,128.2 L1091.0,126.9 L1093.0,127.6 L1095.0,127.5 L1097.0,126.4 L1099.0,125.7 L1101.0,127.4 L1103.0,128.2 L1105.0,128.8 L1107.0,128.7 L1109.0,129.7 L1111.0,128.9 L1113.0,127.1 L1115.0,126.0 L1117.0,124.6 L1119.0,127.5 L1121.0,127.7 L1123.0,127.0 L1125.0,127.8 L1127.0,126.3 L1129.0,126.1 L1131.0,126.5 L1133.0,126.4 L1135.0,127.5 L1137.0,128.5 L1139.0,127.3 L1141.0,125.9 L1143.0,126.6 L1145.0,127.3 L1147.0,128.0 L1149.0,130.4 L1151.0,130.2 L1153.0,127.8 L1155.0,126.9 L1157.0,126.1 L1159.0,125.4 L1161.0,125.3 L1163.0,125.7 L1165.0,126.2 L1167.0,127.2 L1169.0,127.2 L1171.0,126.4 L1173.0,125.6 L1175.0,127.2 L1177.0,128.7 L1179.0,128.9 L1181.0,129.1 L1183.0,128.8 L1185.0,127.9 L1187.0,127.1 L1189.0,129.8 L1191.0,128.0 L1193.0,126.6 L1195.0,129.2 L1197.0,128.5 L1199.0,127.7 L1201.0,128.4 L1203.0,127.1 L1205.0,126.3 L1207.0,126.1 L1209.0,125.1 L1210.0,125.3 L1211.0,125.8 L1213.0,126.5 L1214.0,127.0 L1215.0,204.2 L1215.5,243.0 L1217.0,243.0 L1219.0,243.0 L1221.0,299.3 L1222.0,327.5 L1223.0,327.5 L1225.0,327.5 L1227.0,327.5 L1229.0,327.5 L1231.0,327.5 L1233.0,327.5 L1235.0,327.5 L1237.0,327.5 L1239.0,327.5 L1241.0,327.5 L1243.0,327.5 L1245.0,327.5 L1247.0,327.5 L1249.0,327.5 L1251.0,327.5 L1253.0,327.5 L1255.0,327.5 L1257.0,327.5 L1259.0,327.5 L1261.0,327.5 L1263.0,327.5 L1265.0,327.5 L1267.0,327.5 L1269.0,327.5 L1271.0,327.5 L1273.0,327.5 L1275.0,327.5 L1277.0,327.5 L1279.0,327.5 L1281.0,327.5 L1283.0,327.5 L1285.0,327.5 L1287.0,327.5 L1289.0,327.5 L1291.0,327.5 L1293.0,327.5 L1295.0,327.5 L1297.0,327.5 L1299.0,327.5 L1301.0,327.5 L1303.0,327.5 L1305.0,327.5 L1307.0,327.5 L1309.0,327.5 L1311.0,327.5 L1313.0,327.5 L1315.0,327.5 L1317.0,327.5 L1319.0,327.5 L1321.0,327.5 L1323.0,327.5 L1325.0,327.5 L1327.0,327.5 L1329.0,327.5 L1331.0,327.5 L1333.0,327.5 L1335.0,327.5 L1337.0,327.5 L1339.0,327.5 L1341.0,327.5 L1343.0,327.5 L1345.0,327.5 L1347.0,327.5 L1349.0,327.5 L1351.0,327.5 L1353.0,327.5 L1355.0,327.5 L1357.0,327.5 L1359.0,327.5 L1361.0,327.5 L1363.0,327.5 L1365.0,327.5 L1367.0,327.5 L1369.0,327.5 L1371.0,327.5" fill="none" stroke="#4055A3" stroke-width="2.2" stroke-linejoin="round"/><path d="M53.0,136.8 L55.0,135.7 L57.0,137.6 L59.0,137.6 L61.0,134.5 L63.0,134.2 L65.0,135.1 L67.0,137.7 L69.0,138.2 L71.0,137.0 L72.0,135.9 L73.0,171.0 L75.0,241.0 L77.0,241.4 L79.0,241.9 L81.0,242.3 L83.0,242.8 L84.0,243.0 L85.0,271.2 L87.0,327.5 L89.0,327.5 L91.0,327.5 L93.0,327.5 L95.0,327.5 L97.0,327.5 L99.0,327.5 L101.0,327.5 L103.0,327.5 L105.0,327.5 L107.0,327.5 L109.0,327.5 L111.0,327.5 L113.0,327.5 L115.0,327.5 L117.0,327.5 L119.0,327.5 L121.0,327.5 L123.0,327.5 L125.0,327.5 L127.0,327.5 L129.0,327.5 L131.0,327.5 L133.0,327.5 L135.0,327.5 L137.0,327.5 L139.0,327.5 L141.0,327.5 L143.0,327.5 L145.0,327.5 L147.0,327.5 L149.0,327.5 L151.0,327.5 L153.0,327.5 L155.0,327.5 L157.0,327.5 L159.0,327.5 L161.0,327.5 L163.0,327.5 L165.0,327.5 L167.0,327.5 L169.0,327.5 L171.0,327.5 L173.0,327.5 L175.0,327.5 L177.0,327.5 L179.0,327.5 L181.0,327.5 L183.0,327.5 L185.0,327.5 L187.0,327.5 L189.0,327.5 L191.0,327.5 L193.0,327.5 L195.0,327.5 L197.0,327.5 L199.0,327.5 L201.0,327.5 L203.0,327.5 L205.0,327.5 L207.0,327.5 L209.0,327.5 L211.0,327.5 L213.0,327.5 L215.0,327.5 L217.0,327.5 L219.0,327.5 L221.0,327.5 L223.0,327.5 L225.0,327.5 L227.0,327.5 L229.0,327.5 L231.0,327.5 L233.0,327.5 L235.0,327.5 L237.0,327.5 L239.0,327.5 L241.0,327.5 L243.0,327.5 L245.0,327.5 L247.0,327.5 L249.0,327.5 L251.0,327.5 L253.0,327.5 L255.0,327.5 L257.0,327.5 L259.0,327.5 L261.0,327.5 L263.0,327.5 L265.0,327.5 L267.0,327.5 L269.0,327.5 L271.0,327.5 L273.0,327.5 L275.0,327.5 L277.0,327.5 L279.0,327.5 L281.0,327.5 L283.0,327.5 L285.0,327.5 L287.0,327.5 L289.0,327.5 L291.0,327.5 L293.0,327.5 L295.0,327.5 L297.0,327.5 L299.0,327.5 L301.0,327.5 L303.0,327.5 L305.0,327.5 L307.0,327.5 L309.0,327.5 L311.0,327.5 L313.0,327.5 L315.0,327.5 L317.0,327.5 L319.0,327.5 L321.0,327.5 L323.0,327.5 L325.0,327.5 L327.0,327.5 L329.0,327.5 L331.0,327.5 L333.0,327.5 L335.0,327.5 L337.0,327.5 L339.0,327.5 L341.0,327.5 L343.0,327.5 L345.0,327.5 L347.0,327.5 L349.0,327.5 L351.0,327.5 L353.0,327.5 L355.0,327.5 L357.0,327.5 L359.0,327.5 L361.0,327.5 L363.0,327.5 L365.0,327.5 L367.0,327.5 L369.0,327.5 L371.0,327.5 L373.0,327.5 L375.0,327.5 L377.0,327.5 L379.0,327.5 L381.0,327.5 L383.0,327.5 L385.0,327.5 L387.0,327.5 L389.0,327.5 L391.0,327.5 L393.0,327.5 L395.0,327.5 L397.0,327.5 L399.0,327.5 L401.0,327.5 L403.0,327.5 L405.0,327.5 L407.0,327.5 L409.0,327.5 L411.0,327.5 L413.0,327.5 L415.0,327.5 L417.0,327.5 L419.0,327.5 L421.0,327.5 L423.0,327.5 L425.0,327.5 L427.0,327.5 L429.0,327.5 L431.0,327.5 L433.0,327.5 L435.0,327.5 L437.0,327.5 L439.0,327.5 L441.0,327.5 L443.0,327.5 L445.0,327.5 L447.0,327.5 L449.0,327.5 L451.0,327.5 L453.0,327.5 L455.0,327.5 L457.0,327.5 L459.0,327.5 L461.0,327.5 L463.0,327.5 L465.0,327.5 L467.0,327.5 L469.0,327.5 L471.0,327.5 L473.0,327.5 L475.0,327.5 L477.0,327.5 L479.0,327.5 L481.0,327.5 L483.0,327.5 L485.0,327.5 L487.0,327.5 L489.0,327.5 L491.0,327.5 L493.0,327.5 L495.0,327.5 L496.0,327.5" fill="none" stroke="#4055A3" stroke-opacity="0.35" stroke-width="1.6" stroke-linejoin="round"/><path d="M1371.0,327.5 L1373.0,327.5 L1375.0,327.5 L1377.0,327.5 L1379.0,327.5 L1381.0,327.5 L1383.0,327.5 L1385.0,327.5 L1387.0,327.5 L1389.0,327.5 L1391.0,327.5 L1393.0,327.5 L1395.0,327.5 L1397.0,327.5 L1399.0,327.5 L1401.0,327.5 L1403.0,327.5 L1405.0,327.5 L1407.0,327.5 L1409.0,327.5 L1411.0,327.5 L1413.0,327.5 L1415.0,327.5 L1417.0,327.5 L1419.0,327.5 L1421.0,327.5 L1423.0,327.5 L1425.0,327.5 L1427.0,327.5 L1429.0,327.5 L1431.0,327.5 L1433.0,327.5 L1435.0,327.5 L1437.0,327.5 L1439.0,327.5 L1441.0,327.5 L1443.0,327.5 L1445.0,327.5 L1447.0,327.5 L1449.0,327.5 L1451.0,327.5 L1453.0,327.5 L1455.0,327.5 L1457.0,327.5 L1459.0,327.5 L1461.0,327.5 L1463.0,327.5 L1465.0,327.5 L1467.0,327.5 L1469.0,327.5 L1471.0,327.5 L1473.0,327.5 L1475.0,327.5 L1477.0,327.5 L1479.0,327.5 L1481.0,327.5 L1483.0,327.5 L1485.0,327.5 L1487.0,327.5 L1489.0,327.5 L1491.0,327.5 L1493.0,327.5 L1495.0,327.5 L1497.0,327.5 L1499.0,327.5 L1501.0,327.5 L1503.0,327.5 L1505.0,327.5 L1507.0,327.5 L1509.0,327.5 L1511.0,327.5 L1513.0,327.5 L1515.0,327.5 L1517.0,327.5 L1519.0,327.5 L1521.0,327.5 L1523.0,327.5 L1525.0,327.5 L1527.0,327.5 L1529.0,327.5 L1531.0,327.5 L1533.0,327.5 L1535.0,327.5 L1537.0,327.5 L1539.0,327.5 L1541.0,327.5 L1543.0,327.5 L1545.0,327.5 L1547.0,327.5 L1549.0,327.5 L1551.0,327.5 L1553.0,327.5 L1555.0,327.5 L1557.0,327.5 L1559.0,327.5 L1561.0,327.5 L1563.0,327.5 L1565.0,327.5 L1567.0,327.5 L1569.0,327.5 L1571.0,327.5 L1573.0,327.5 L1575.0,327.5 L1577.0,327.5 L1579.0,327.5 L1581.0,327.5 L1583.0,327.5 L1585.0,327.5 L1587.0,327.5 L1589.0,327.5 L1591.0,327.5 L1593.0,327.5 L1595.0,327.5 L1597.0,327.5 L1599.0,327.5 L1601.0,327.5 L1603.0,327.5 L1605.0,327.5 L1607.0,327.5 L1609.0,327.5 L1611.0,327.5 L1613.0,327.5 L1615.0,327.5 L1617.0,327.5 L1619.0,327.5 L1621.0,327.5 L1623.0,327.5 L1625.0,327.5 L1627.0,327.5 L1629.0,327.5 L1631.0,327.5 L1633.0,327.5 L1635.0,327.5 L1637.0,327.5 L1639.0,327.5 L1641.0,327.5 L1643.0,327.5 L1645.0,327.5 L1647.0,327.5 L1649.0,327.5 L1651.0,327.5 L1653.0,327.5 L1655.0,327.5 L1657.0,327.5 L1659.0,327.5 L1661.0,327.5 L1663.0,327.5 L1665.0,327.5 L1667.0,327.5 L1669.0,327.5 L1671.0,327.5 L1673.0,327.5 L1675.0,327.5 L1677.0,327.5 L1679.0,327.5 L1681.0,327.5 L1683.0,327.5 L1685.0,327.5 L1687.0,327.5 L1689.0,327.5 L1691.0,327.5 L1693.0,327.5 L1695.0,327.5 L1697.0,327.5 L1699.0,327.5 L1701.0,327.5 L1703.0,327.5 L1705.0,327.5 L1707.0,327.5 L1709.0,327.5 L1711.0,327.5 L1713.0,327.5 L1715.0,327.5 L1717.0,327.5 L1719.0,327.5 L1721.0,327.5 L1723.0,327.5 L1725.0,327.5 L1727.0,327.5 L1729.0,327.5 L1731.0,327.5 L1733.0,327.5 L1735.0,327.5 L1737.0,327.5 L1739.0,327.5 L1741.0,327.5 L1743.0,327.5 L1745.0,327.5 L1747.0,327.5 L1749.0,327.5 L1751.0,327.5 L1753.0,327.5 L1755.0,327.5 L1757.0,327.5 L1759.0,327.5 L1761.0,327.5 L1763.0,327.5 L1765.0,327.5 L1767.0,327.5 L1769.0,327.5 L1771.0,327.5 L1773.0,327.5 L1775.0,327.5 L1777.0,327.5 L1779.0,327.5 L1781.0,327.5 L1783.0,327.5 L1785.0,327.5 L1787.0,327.5 L1789.0,327.5 L1791.0,327.5 L1793.0,327.5 L1795.0,327.5 L1797.0,285.2 L1799.0,243.0 L1801.0,241.0 L1802.0,240.0 L1803.0,209.3 L1805.0,148.4 L1807.0,147.3 L1809.0,145.2 L1811.0,145.7 L1813.0,146.9 L1815.0,146.8 L1817.0,147.5 L1819.0,147.0 L1821.0,146.3 L1823.0,147.4 L1825.0,148.6 L1827.0,148.2 L1829.0,148.6 L1831.0,149.1 L1833.0,147.7 L1835.0,148.0 L1837.0,150.8 L1839.0,150.2 L1841.0,149.6 L1843.0,151.5 L1845.0,151.9 L1847.0,149.9 L1849.0,150.4 L1851.0,151.4 L1853.0,149.4 L1855.0,149.1 L1857.0,149.9 L1859.0,150.3 L1861.0,149.6 L1863.0,150.8 L1865.0,150.4 L1867.0,148.3 L1869.0,149.7 L1870.0,151.4" fill="none" stroke="#4055A3" stroke-opacity="0.35" stroke-width="1.6" stroke-linejoin="round"/><path d="M496.0,327.5 L497.0,327.5 L499.0,327.5 L501.0,327.5 L503.0,327.5 L505.0,327.5 L507.0,327.5 L509.0,327.5 L511.0,327.5 L513.0,327.5 L515.0,327.5 L517.0,327.5 L519.0,327.5 L521.0,327.5 L523.0,327.5 L525.0,327.5 L527.0,327.5 L529.0,327.5 L531.0,327.5 L533.0,327.5 L535.0,327.5 L537.0,327.5 L539.0,327.5 L541.0,327.5 L543.0,327.5 L545.0,327.5 L547.0,327.5 L549.0,327.5 L551.0,327.5 L553.0,327.5 L555.0,327.5 L557.0,327.5 L559.0,327.5 L561.0,327.5 L563.0,327.5 L565.0,327.5 L567.0,327.5 L569.0,327.5 L571.0,327.5 L573.0,327.5 L575.0,327.5 L577.0,327.5 L579.0,327.5 L581.0,327.5 L583.0,327.5 L585.0,327.5 L587.0,327.5 L589.0,327.5 L591.0,327.5 L593.0,327.5 L595.0,327.5 L597.0,327.5 L599.0,327.5 L601.0,327.5 L603.0,327.5 L605.0,327.5 L607.0,327.5 L609.0,327.5 L611.0,327.5 L613.0,327.5 L615.0,327.5 L617.0,327.5 L619.0,327.5 L621.0,327.5 L623.0,327.5 L625.0,327.5 L627.0,327.5 L629.0,327.5 L631.0,327.5 L633.0,327.5 L635.0,327.5 L637.0,327.5 L639.0,327.5 L641.0,327.5 L643.0,327.5 L645.0,327.5 L647.0,327.5 L649.0,327.5 L651.0,327.5 L653.0,327.5 L655.0,327.5 L657.0,327.5 L658.0,327.5 L659.0,310.8 L661.0,277.5 L663.0,244.1 L665.0,210.7 L667.0,177.4 L669.0,143.8 L671.0,142.5 L673.0,142.5 L675.0,142.9 L677.0,143.3 L679.0,145.9 L681.0,146.3 L683.0,144.3 L685.0,142.2 L687.0,141.2 L689.0,141.2 L691.0,143.1 L693.0,144.0 L695.0,143.4 L697.0,143.5 L699.0,143.5 L700.0,145.4 L701.0,144.6 L703.0,142.8 L705.0,142.6 L707.0,143.6 L709.0,143.2 L711.0,141.2 L713.0,140.8 L715.0,140.4 L717.0,141.9 L719.0,145.5 L721.0,144.0 L723.0,142.3 L725.0,143.3 L727.0,141.3 L729.0,140.7 L731.0,141.4 L733.0,140.8 L735.0,142.7 L737.0,141.4 L739.0,139.9 L741.0,141.8 L743.0,140.8 L745.0,140.4 L747.0,141.6 L749.0,141.5 L751.0,140.9 L753.0,141.3 L755.0,138.9 L757.0,139.5 L759.0,210.0 L760.0,245.0 L761.0,245.0 L763.0,244.9 L765.0,244.9 L767.0,244.8 L769.0,244.8 L771.0,244.7 L773.0,244.7 L775.0,244.6 L777.0,244.6 L779.0,244.5 L781.0,244.5 L783.0,244.4 L785.0,244.4 L787.0,244.3 L789.0,244.3 L791.0,244.2 L793.0,244.2 L795.0,244.2 L797.0,244.1 L799.0,244.1 L801.0,244.0 L803.0,244.0 L805.0,243.9 L807.0,243.9 L809.0,243.8 L811.0,243.8 L813.0,243.7 L815.0,243.7 L817.0,243.6 L819.0,243.6 L821.0,243.5 L823.0,243.5 L825.0,243.4 L827.0,243.4 L829.0,243.3 L831.0,243.3 L833.0,243.2 L835.0,243.2 L837.0,243.1 L839.0,243.1 L841.0,243.0 L843.0,243.0 L845.0,242.9 L847.0,242.9 L849.0,242.8 L851.0,242.8 L853.0,242.7 L855.0,242.7 L857.0,242.6 L859.0,242.6 L861.0,242.6 L863.0,242.5 L865.0,242.5 L867.0,242.4 L869.0,242.4 L871.0,242.3 L873.0,242.3 L875.0,242.2 L877.0,242.2 L879.0,242.1 L881.0,242.1 L883.0,242.0 L885.0,242.0 L887.0,241.9 L889.0,241.9 L891.0,241.8 L893.0,241.8 L895.0,241.7 L897.0,241.7 L899.0,241.6 L901.0,241.6 L903.0,241.5 L905.0,241.5 L907.0,241.4 L909.0,241.4 L911.0,241.3 L913.0,241.3 L915.0,241.2 L917.0,241.2 L919.0,241.1 L921.0,241.1 L923.0,241.0 L925.0,241.0 L927.0,189.5 L929.0,138.2 L931.0,137.3 L933.0,133.7 L935.0,134.1 L937.0,135.6 L939.0,135.5 L941.0,138.1 L943.0,137.9 L945.0,136.3 L947.0,135.7 L949.0,135.7 L951.0,135.2 L953.0,134.6 L955.0,134.0 L957.0,135.5 L959.0,136.1 L961.0,135.7 L963.0,135.3 L965.0,134.3 L967.0,134.2 L969.0,134.3 L971.0,135.0 L973.0,134.6 L975.0,133.1 L977.0,131.9 L979.0,133.9 L981.0,134.1 L983.0,132.1 L985.0,133.5 L987.0,134.6 L989.0,133.6 L991.0,132.0 L993.0,133.5 L995.0,134.0 L997.0,132.1 L999.0,131.4 L1001.0,129.4 L1003.0,128.2 L1005.0,129.6 L1007.0,131.0 L1009.0,130.2 L1010.0,128.7 L1011.0,127.6 L1013.0,128.3 L1015.0,128.3 L1017.0,129.4 L1019.0,131.8 L1021.0,133.5 L1023.0,133.3 L1025.0,130.1 L1027.0,128.5 L1029.0,125.8 L1031.0,126.1 L1033.0,129.1 L1035.0,130.5 L1037.0,131.2 L1039.0,130.8 L1041.0,130.4 L1043.0,130.5 L1045.0,131.6 L1047.0,130.0 L1049.0,128.2 L1051.0,127.9 L1053.0,129.8 L1055.0,132.2 L1057.0,131.4 L1059.0,129.1 L1061.0,128.5 L1063.0,129.4 L1065.0,129.3 L1067.0,129.3 L1069.0,129.7 L1071.0,129.5 L1073.0,129.8 L1075.0,130.4 L1077.0,129.3 L1079.0,128.9 L1081.0,128.8 L1083.0,129.6 L1085.0,129.7 L1087.0,129.3 L1089.0,129.1 L1091.0,127.5 L1093.0,128.6 L1095.0,129.0 L1097.0,128.8 L1099.0,130.1 L1101.0,128.0 L1103.0,126.7 L1105.0,127.7 L1107.0,127.8 L1109.0,127.2 L1111.0,128.6 L1113.0,129.4 L1115.0,129.1 L1117.0,128.9 L1119.0,128.8 L1121.0,128.5 L1123.0,128.2 L1125.0,129.4 L1127.0,129.4 L1129.0,128.4 L1131.0,127.4 L1133.0,127.9 L1135.0,129.2 L1137.0,128.8 L1139.0,127.8 L1141.0,128.5 L1143.0,131.4 L1145.0,130.7 L1147.0,128.7 L1149.0,129.3 L1151.0,126.6 L1153.0,126.3 L1155.0,128.0 L1157.0,129.2 L1159.0,129.5 L1161.0,127.5 L1163.0,127.6 L1165.0,128.4 L1167.0,128.1 L1169.0,127.8 L1171.0,127.1 L1173.0,126.9 L1175.0,128.9 L1177.0,130.9 L1179.0,130.8 L1181.0,129.2 L1183.0,129.6 L1185.0,130.3 L1187.0,130.7 L1189.0,130.7 L1191.0,129.1 L1193.0,128.3 L1195.0,128.6 L1197.0,128.6 L1199.0,128.6 L1201.0,127.6 L1203.0,125.4 L1205.0,125.5 L1207.0,125.6 L1209.0,126.2 L1210.0,128.1 L1211.0,126.5 L1213.0,127.1 L1215.0,129.4 L1217.0,128.9 L1219.0,129.6 L1220.0,131.2 L1221.0,177.9 L1223.0,277.6 L1224.0,327.5 L1225.0,327.5 L1227.0,327.5 L1229.0,327.5 L1231.0,327.5 L1233.0,327.5 L1235.0,327.5 L1237.0,327.5 L1239.0,327.5 L1241.0,327.5 L1243.0,327.5 L1245.0,327.5 L1247.0,327.5 L1249.0,327.5 L1251.0,327.5 L1253.0,327.5 L1255.0,327.5 L1257.0,327.5 L1259.0,327.5 L1261.0,327.5 L1263.0,327.5 L1265.0,327.5 L1267.0,327.5 L1269.0,327.5 L1271.0,327.5 L1273.0,327.5 L1275.0,327.5 L1277.0,327.5 L1279.0,327.5 L1281.0,327.5 L1283.0,327.5 L1285.0,327.5 L1287.0,327.5 L1289.0,327.5 L1291.0,327.5 L1293.0,327.5 L1295.0,327.5 L1297.0,327.5 L1299.0,327.5 L1301.0,327.5 L1303.0,327.5 L1305.0,327.5 L1307.0,327.5 L1309.0,327.5 L1311.0,327.5 L1313.0,327.5 L1315.0,327.5 L1317.0,327.5 L1319.0,327.5 L1321.0,327.5 L1323.0,327.5 L1325.0,327.5 L1327.0,327.5 L1329.0,327.5 L1331.0,327.5 L1333.0,327.5 L1335.0,327.5 L1337.0,327.5 L1339.0,327.5 L1341.0,327.5 L1343.0,327.5 L1345.0,327.5 L1347.0,327.5 L1349.0,327.5 L1351.0,327.5 L1353.0,327.5 L1355.0,327.5 L1357.0,327.5 L1359.0,327.5 L1361.0,327.5 L1363.0,327.5 L1365.0,327.5 L1367.0,327.5 L1369.0,327.5 L1371.0,327.5" fill="none" stroke="#4055A3" stroke-width="2.2" stroke-linejoin="round"/><path d="M53.0,241.0 L55.0,241.1 L57.0,241.3 L59.0,241.4 L61.0,241.6 L63.0,241.7 L65.0,241.9 L67.0,242.0 L69.0,242.1 L71.0,242.3 L73.0,242.4 L75.0,242.6 L77.0,242.7 L79.0,242.9 L81.0,243.0 L83.0,299.3 L84.0,327.5 L85.0,327.5 L87.0,327.5 L89.0,327.5 L91.0,327.5 L93.0,327.5 L95.0,327.5 L97.0,327.5 L99.0,327.5 L101.0,327.5 L103.0,327.5 L105.0,327.5 L107.0,327.5 L109.0,327.5 L111.0,327.5 L113.0,327.5 L115.0,327.5 L117.0,327.5 L119.0,327.5 L121.0,327.5 L123.0,327.5 L125.0,327.5 L127.0,327.5 L129.0,327.5 L131.0,327.5 L133.0,327.5 L135.0,327.5 L137.0,327.5 L139.0,327.5 L141.0,327.5 L143.0,327.5 L145.0,327.5 L147.0,327.5 L149.0,327.5 L151.0,327.5 L153.0,327.5 L155.0,327.5 L157.0,327.5 L159.0,327.5 L161.0,327.5 L163.0,327.5 L165.0,327.5 L167.0,327.5 L169.0,327.5 L171.0,327.5 L173.0,327.5 L175.0,327.5 L177.0,327.5 L179.0,327.5 L181.0,327.5 L183.0,327.5 L185.0,327.5 L187.0,327.5 L189.0,327.5 L191.0,327.5 L193.0,327.5 L195.0,327.5 L197.0,327.5 L199.0,327.5 L201.0,327.5 L203.0,327.5 L205.0,327.5 L207.0,327.5 L209.0,327.5 L211.0,327.5 L213.0,327.5 L215.0,327.5 L217.0,327.5 L219.0,327.5 L221.0,327.5 L223.0,327.5 L225.0,327.5 L227.0,327.5 L229.0,327.5 L231.0,327.5 L233.0,327.5 L235.0,327.5 L237.0,327.5 L239.0,327.5 L241.0,327.5 L243.0,327.5 L245.0,327.5 L247.0,327.5 L249.0,327.5 L251.0,327.5 L253.0,327.5 L255.0,327.5 L257.0,327.5 L259.0,327.5 L261.0,327.5 L263.0,327.5 L265.0,327.5 L267.0,327.5 L269.0,327.5 L271.0,327.5 L273.0,327.5 L275.0,327.5 L277.0,327.5 L279.0,327.5 L281.0,327.5 L283.0,327.5 L285.0,327.5 L287.0,327.5 L289.0,327.5 L291.0,327.5 L293.0,327.5 L295.0,327.5 L297.0,327.5 L299.0,327.5 L301.0,327.5 L303.0,327.5 L305.0,327.5 L307.0,327.5 L309.0,327.5 L311.0,327.5 L313.0,327.5 L315.0,327.5 L317.0,327.5 L319.0,327.5 L321.0,327.5 L323.0,327.5 L325.0,327.5 L327.0,327.5 L329.0,327.5 L331.0,327.5 L333.0,327.5 L335.0,327.5 L337.0,327.5 L339.0,327.5 L341.0,327.5 L343.0,327.5 L345.0,327.5 L347.0,327.5 L349.0,327.5 L351.0,327.5 L353.0,327.5 L355.0,327.5 L357.0,327.5 L359.0,327.5 L361.0,327.5 L363.0,327.5 L365.0,327.5 L367.0,327.5 L369.0,327.5 L371.0,327.5 L373.0,327.5 L375.0,327.5 L377.0,327.5 L379.0,327.5 L381.0,327.5 L383.0,327.5 L385.0,327.5 L387.0,327.5 L389.0,327.5 L391.0,327.5 L393.0,327.5 L395.0,327.5 L397.0,327.5 L399.0,327.5 L401.0,327.5 L403.0,327.5 L405.0,327.5 L407.0,327.5 L409.0,327.5 L411.0,327.5 L413.0,327.5 L415.0,327.5 L417.0,327.5 L419.0,327.5 L421.0,327.5 L423.0,327.5 L425.0,327.5 L427.0,327.5 L429.0,327.5 L431.0,327.5 L433.0,327.5 L435.0,327.5 L437.0,327.5 L439.0,327.5 L441.0,327.5 L443.0,327.5 L445.0,327.5 L447.0,327.5 L449.0,327.5 L451.0,327.5 L453.0,327.5 L455.0,327.5 L457.0,327.5 L459.0,327.5 L461.0,327.5 L463.0,327.5 L465.0,327.5 L467.0,327.5 L469.0,327.5 L471.0,327.5 L473.0,327.5 L475.0,327.5 L477.0,327.5 L479.0,327.5 L481.0,327.5 L483.0,327.5 L485.0,327.5 L487.0,327.5 L489.0,327.5 L491.0,327.5 L493.0,327.5 L495.0,327.5 L496.0,327.5" fill="none" stroke="#4055A3" stroke-opacity="0.35" stroke-width="1.6" stroke-linejoin="round"/><path d="M1371.0,327.5 L1373.0,327.5 L1375.0,327.5 L1377.0,327.5 L1379.0,327.5 L1381.0,327.5 L1383.0,327.5 L1385.0,327.5 L1387.0,327.5 L1389.0,327.5 L1391.0,327.5 L1393.0,327.5 L1395.0,327.5 L1397.0,327.5 L1399.0,327.5 L1401.0,327.5 L1403.0,327.5 L1405.0,327.5 L1407.0,327.5 L1409.0,327.5 L1411.0,327.5 L1413.0,327.5 L1415.0,327.5 L1417.0,327.5 L1419.0,327.5 L1421.0,327.5 L1423.0,327.5 L1425.0,327.5 L1427.0,327.5 L1429.0,327.5 L1431.0,327.5 L1433.0,327.5 L1435.0,327.5 L1437.0,327.5 L1439.0,327.5 L1441.0,327.5 L1443.0,327.5 L1445.0,327.5 L1447.0,327.5 L1449.0,327.5 L1451.0,327.5 L1453.0,327.5 L1455.0,327.5 L1457.0,327.5 L1459.0,327.5 L1461.0,327.5 L1463.0,327.5 L1465.0,327.5 L1467.0,327.5 L1469.0,327.5 L1471.0,327.5 L1473.0,327.5 L1475.0,327.5 L1477.0,327.5 L1479.0,327.5 L1481.0,327.5 L1483.0,327.5 L1485.0,327.5 L1487.0,327.5 L1489.0,327.5 L1491.0,327.5 L1493.0,327.5 L1495.0,327.5 L1497.0,327.5 L1499.0,327.5 L1501.0,327.5 L1503.0,327.5 L1505.0,327.5 L1507.0,327.5 L1509.0,327.5 L1511.0,327.5 L1513.0,327.5 L1515.0,327.5 L1517.0,327.5 L1519.0,327.5 L1521.0,327.5 L1523.0,327.5 L1525.0,327.5 L1527.0,327.5 L1529.0,327.5 L1531.0,327.5 L1533.0,327.5 L1535.0,327.5 L1537.0,327.5 L1539.0,327.5 L1541.0,327.5 L1543.0,327.5 L1545.0,327.5 L1547.0,327.5 L1549.0,327.5 L1551.0,327.5 L1553.0,327.5 L1555.0,327.5 L1557.0,327.5 L1559.0,327.5 L1561.0,327.5 L1563.0,327.5 L1565.0,327.5 L1567.0,327.5 L1569.0,327.5 L1571.0,327.5 L1573.0,327.5 L1575.0,327.5 L1577.0,327.5 L1579.0,327.5 L1581.0,327.5 L1583.0,327.5 L1585.0,327.5 L1587.0,327.5 L1589.0,327.5 L1591.0,327.5 L1593.0,327.5 L1595.0,327.5 L1597.0,327.5 L1599.0,327.5 L1601.0,327.5 L1603.0,327.5 L1605.0,327.5 L1607.0,327.5 L1609.0,327.5 L1611.0,327.5 L1613.0,327.5 L1615.0,327.5 L1617.0,327.5 L1619.0,327.5 L1621.0,327.5 L1623.0,327.5 L1625.0,327.5 L1627.0,327.5 L1629.0,327.5 L1631.0,327.5 L1633.0,327.5 L1635.0,327.5 L1637.0,327.5 L1639.0,327.5 L1641.0,327.5 L1643.0,327.5 L1645.0,327.5 L1647.0,327.5 L1649.0,327.5 L1651.0,327.5 L1653.0,327.5 L1655.0,327.5 L1657.0,327.5 L1659.0,327.5 L1661.0,327.5 L1663.0,327.5 L1665.0,327.5 L1667.0,327.5 L1669.0,327.5 L1671.0,327.5 L1673.0,327.5 L1675.0,327.5 L1677.0,327.5 L1679.0,327.5 L1681.0,327.5 L1683.0,327.5 L1685.0,327.5 L1687.0,327.5 L1689.0,327.5 L1691.0,327.5 L1693.0,327.5 L1695.0,327.5 L1697.0,327.5 L1699.0,327.5 L1701.0,327.5 L1703.0,327.5 L1705.0,327.5 L1707.0,327.5 L1709.0,327.5 L1711.0,327.5 L1713.0,327.5 L1715.0,327.5 L1717.0,327.5 L1719.0,327.5 L1721.0,327.5 L1723.0,327.5 L1725.0,327.5 L1727.0,327.5 L1729.0,327.5 L1731.0,327.5 L1733.0,327.5 L1735.0,327.5 L1737.0,327.5 L1739.0,327.5 L1741.0,327.5 L1743.0,327.5 L1745.0,327.5 L1747.0,327.5 L1749.0,327.5 L1751.0,327.5 L1753.0,327.5 L1755.0,327.5 L1757.0,327.5 L1759.0,327.5 L1761.0,327.5 L1763.0,327.5 L1765.0,327.5 L1767.0,327.5 L1769.0,327.5 L1771.0,327.5 L1773.0,327.5 L1775.0,327.5 L1777.0,327.5 L1779.0,327.5 L1781.0,327.5 L1783.0,327.5 L1785.0,327.5 L1787.0,327.5 L1789.0,327.5 L1791.0,327.5 L1793.0,327.5 L1795.0,327.5 L1796.0,327.5 L1797.0,306.4 L1799.0,264.1 L1800.0,243.0 L1801.0,242.0 L1803.0,240.0 L1805.0,179.7 L1806.0,147.3 L1807.0,149.7 L1809.0,152.0 L1811.0,152.8 L1813.0,150.0 L1815.0,149.9 L1817.0,149.2 L1819.0,148.2 L1821.0,147.7 L1823.0,149.6 L1825.0,152.0 L1827.0,149.6 L1829.0,149.1 L1831.0,151.1 L1833.0,151.7 L1835.0,151.2 L1837.0,150.0 L1839.0,149.1 L1841.0,150.1 L1843.0,151.6 L1845.0,150.8 L1847.0,149.0 L1849.0,150.9 L1851.0,151.1 L1853.0,151.1 L1855.0,152.3 L1857.0,152.1 L1859.0,153.6 L1861.0,153.5 L1863.0,152.7 L1865.0,151.2 L1867.0,149.9 L1869.0,151.4 L1870.0,153.5" fill="none" stroke="#4055A3" stroke-opacity="0.35" stroke-width="1.6" stroke-linejoin="round"/><path d="M496.0,327.5 L497.0,327.5 L499.0,327.5 L501.0,327.5 L503.0,327.5 L505.0,327.5 L507.0,327.5 L509.0,327.5 L511.0,327.5 L513.0,327.5 L515.0,327.5 L517.0,327.5 L519.0,327.5 L521.0,327.5 L523.0,327.5 L525.0,327.5 L527.0,327.5 L529.0,327.5 L531.0,327.5 L533.0,327.5 L535.0,327.5 L537.0,327.5 L539.0,327.5 L541.0,327.5 L543.0,327.5 L545.0,327.5 L547.0,327.5 L549.0,327.5 L551.0,327.5 L553.0,327.5 L555.0,327.5 L557.0,327.5 L559.0,327.5 L561.0,327.5 L563.0,327.5 L565.0,327.5 L567.0,327.5 L569.0,327.5 L571.0,327.5 L573.0,327.5 L575.0,327.5 L577.0,327.5 L579.0,327.5 L581.0,327.5 L583.0,327.5 L585.0,327.5 L587.0,327.5 L589.0,327.5 L591.0,327.5 L593.0,327.5 L595.0,327.5 L597.0,327.5 L599.0,327.5 L601.0,327.5 L603.0,327.5 L605.0,327.5 L607.0,327.5 L609.0,327.5 L611.0,327.5 L613.0,327.5 L615.0,327.5 L617.0,327.5 L619.0,327.5 L621.0,327.5 L623.0,327.5 L625.0,327.5 L627.0,327.5 L629.0,327.5 L631.0,327.5 L633.0,327.5 L635.0,327.5 L637.0,327.5 L639.0,327.5 L641.0,327.5 L643.0,327.5 L645.0,327.5 L647.0,327.5 L649.0,327.5 L651.0,327.5 L653.0,327.5 L655.0,327.5 L657.0,327.5 L659.0,327.5 L661.0,243.0 L663.0,243.0 L665.0,243.0 L667.0,243.0 L669.0,243.0 L671.0,178.0 L672.0,146.7 L673.0,147.0 L675.0,147.5 L677.0,146.5 L679.0,144.2 L681.0,142.9 L683.0,145.5 L685.0,147.4 L687.0,146.3 L689.0,145.2 L691.0,145.1 L693.0,145.6 L695.0,145.2 L697.0,144.5 L699.0,146.9 L700.0,147.7 L701.0,145.1 L703.0,143.7 L705.0,143.5 L707.0,145.4 L709.0,146.8 L711.0,145.9 L713.0,145.2 L715.0,145.1 L717.0,144.0 L719.0,145.4 L721.0,146.8 L723.0,147.9 L725.0,146.8 L727.0,144.3 L729.0,145.8 L731.0,145.7 L733.0,143.5 L735.0,142.8 L737.0,144.2 L739.0,145.4 L741.0,145.2 L743.0,145.8 L745.0,146.8 L747.0,146.1 L749.0,145.2 L751.0,144.6 L753.0,145.1 L755.0,146.1 L757.0,145.7 L759.0,145.2 L761.0,144.8 L763.0,143.0 L765.0,142.4 L767.0,144.4 L769.0,145.7 L771.0,146.5 L773.0,146.1 L775.0,145.4 L777.0,146.5 L779.0,146.6 L781.0,144.8 L783.0,143.7 L785.0,144.3 L787.0,143.5 L789.0,143.8 L791.0,145.7 L793.0,144.8 L795.0,145.6 L797.0,145.8 L799.0,143.7 L801.0,143.7 L803.0,143.2 L805.0,143.8 L807.0,144.5 L809.0,145.6 L811.0,146.1 L813.0,145.1 L815.0,144.3 L817.0,142.4 L819.0,142.5 L821.0,143.0 L823.0,144.0 L825.0,144.7 L827.0,145.3 L829.0,146.0 L831.0,145.2 L833.0,144.7 L835.0,144.1 L837.0,144.5 L839.0,145.1 L841.0,143.8 L843.0,143.4 L845.0,146.5 L847.0,145.9 L849.0,143.2 L850.0,142.6 L851.0,141.4 L853.0,143.0 L855.0,144.3 L857.0,143.3 L859.0,144.8 L861.0,146.7 L863.0,144.0 L865.0,142.5 L867.0,143.8 L869.0,143.0 L871.0,142.7 L873.0,142.2 L875.0,143.1 L877.0,143.5 L879.0,142.2 L881.0,142.7 L883.0,143.0 L885.0,142.1 L887.0,141.5 L889.0,142.5 L891.0,142.5 L893.0,140.7 L895.0,139.2 L897.0,138.9 L899.0,138.5 L901.0,138.8 L903.0,139.9 L905.0,137.7 L907.0,137.3 L909.0,139.7 L911.0,139.7 L913.0,138.0 L915.0,138.9 L917.0,139.0 L919.0,136.5 L921.0,136.0 L923.0,137.0 L925.0,138.8 L927.0,139.7 L929.0,138.9 L931.0,136.5 L933.0,135.5 L935.0,135.7 L937.0,136.0 L939.0,135.0 L941.0,135.1 L943.0,137.2 L945.0,136.8 L947.0,136.5 L949.0,135.6 L951.0,133.7 L953.0,133.8 L955.0,136.1 L957.0,137.5 L959.0,135.9 L961.0,135.9 L963.0,135.8 L965.0,136.0 L967.0,136.6 L969.0,134.6 L971.0,134.7 L973.0,134.3 L975.0,132.5 L977.0,131.7 L979.0,132.7 L981.0,133.9 L983.0,133.4 L985.0,132.9 L987.0,134.2 L989.0,134.0 L991.0,131.9 L993.0,133.3 L995.0,135.1 L997.0,134.1 L999.0,131.0 L1001.0,130.0 L1003.0,132.0 L1005.0,132.5 L1007.0,133.2 L1009.0,131.7 L1010.0,130.9 L1011.0,131.5 L1013.0,132.1 L1015.0,132.6 L1017.0,132.3 L1019.0,131.8 L1021.0,129.5 L1023.0,129.0 L1025.0,129.7 L1027.0,129.8 L1029.0,131.5 L1031.0,133.7 L1033.0,132.8 L1035.0,130.5 L1037.0,130.2 L1039.0,130.5 L1041.0,131.9 L1043.0,132.8 L1045.0,131.9 L1047.0,131.2 L1049.0,128.9 L1051.0,128.5 L1053.0,129.3 L1055.0,130.4 L1057.0,131.5 L1059.0,130.4 L1061.0,129.9 L1063.0,132.1 L1065.0,131.5 L1067.0,129.2 L1069.0,129.8 L1071.0,130.0 L1073.0,129.8 L1075.0,130.9 L1077.0,132.9 L1079.0,130.8 L1081.0,129.1 L1083.0,130.8 L1085.0,130.7 L1087.0,130.5 L1089.0,130.2 L1091.0,131.3 L1093.0,131.2 L1095.0,130.1 L1097.0,130.5 L1099.0,130.7 L1101.0,130.5 L1103.0,131.3 L1105.0,131.5 L1107.0,130.7 L1109.0,130.6 L1111.0,129.5 L1113.0,128.8 L1115.0,128.7 L1117.0,129.6 L1119.0,129.9 L1121.0,128.7 L1123.0,129.6 L1125.0,131.1 L1127.0,129.2 L1129.0,130.2 L1131.0,131.9 L1133.0,130.2 L1135.0,131.1 L1137.0,131.3 L1139.0,129.7 L1141.0,131.7 L1143.0,131.2 L1145.0,129.1 L1147.0,130.8 L1149.0,129.9 L1151.0,129.0 L1153.0,130.3 L1155.0,132.7 L1157.0,131.4 L1159.0,129.1 L1161.0,130.6 L1163.0,130.7 L1165.0,128.9 L1167.0,129.2 L1169.0,130.4 L1171.0,130.4 L1173.0,131.3 L1175.0,131.9 L1177.0,131.2 L1179.0,130.5 L1181.0,129.1 L1183.0,128.6 L1185.0,129.8 L1187.0,129.6 L1189.0,129.4 L1191.0,129.0 L1193.0,130.3 L1195.0,133.1 L1197.0,131.3 L1199.0,129.6 L1201.0,129.7 L1203.0,130.5 L1205.0,131.1 L1207.0,130.0 L1209.0,129.4 L1210.0,129.4 L1211.0,128.7 L1213.0,129.2 L1215.0,129.5 L1217.0,129.3 L1219.0,130.1 L1221.0,228.5 L1223.0,327.5 L1225.0,327.5 L1227.0,327.5 L1229.0,327.5 L1231.0,327.5 L1233.0,327.5 L1235.0,327.5 L1237.0,327.5 L1239.0,327.5 L1241.0,327.5 L1243.0,327.5 L1245.0,327.5 L1247.0,327.5 L1249.0,327.5 L1251.0,327.5 L1253.0,327.5 L1255.0,327.5 L1257.0,327.5 L1259.0,327.5 L1261.0,327.5 L1263.0,327.5 L1265.0,327.5 L1267.0,327.5 L1269.0,327.5 L1271.0,327.5 L1273.0,327.5 L1275.0,327.5 L1277.0,327.5 L1279.0,327.5 L1281.0,327.5 L1283.0,327.5 L1285.0,327.5 L1287.0,327.5 L1289.0,327.5 L1291.0,327.5 L1293.0,327.5 L1295.0,327.5 L1297.0,327.5 L1299.0,327.5 L1301.0,327.5 L1303.0,327.5 L1305.0,327.5 L1307.0,327.5 L1309.0,327.5 L1311.0,327.5 L1313.0,327.5 L1315.0,327.5 L1317.0,327.5 L1319.0,327.5 L1321.0,327.5 L1323.0,327.5 L1325.0,327.5 L1327.0,327.5 L1329.0,327.5 L1331.0,327.5 L1333.0,327.5 L1335.0,327.5 L1337.0,327.5 L1339.0,327.5 L1341.0,327.5 L1343.0,327.5 L1345.0,327.5 L1347.0,327.5 L1349.0,327.5 L1351.0,327.5 L1353.0,327.5 L1355.0,327.5 L1357.0,327.5 L1359.0,327.5 L1361.0,327.5 L1363.0,327.5 L1365.0,327.5 L1367.0,327.5 L1369.0,327.5 L1371.0,327.5" fill="none" stroke="#4055A3" stroke-width="2.2" stroke-linejoin="round"/><path d="M53.0,241.0 L55.0,241.1 L57.0,241.3 L59.0,241.4 L61.0,241.6 L63.0,241.7 L65.0,241.8 L67.0,242.0 L69.0,242.1 L71.0,242.2 L73.0,242.4 L75.0,242.5 L77.0,242.7 L79.0,242.8 L81.0,242.9 L82.0,243.0 L83.0,271.2 L85.0,327.5 L87.0,327.5 L89.0,327.5 L91.0,327.5 L93.0,327.5 L95.0,327.5 L97.0,327.5 L99.0,327.5 L101.0,327.5 L103.0,327.5 L105.0,327.5 L107.0,327.5 L109.0,327.5 L111.0,327.5 L113.0,327.5 L115.0,327.5 L117.0,327.5 L119.0,327.5 L121.0,327.5 L123.0,327.5 L125.0,327.5 L127.0,327.5 L129.0,327.5 L131.0,327.5 L133.0,327.5 L135.0,327.5 L137.0,327.5 L139.0,327.5 L141.0,327.5 L143.0,327.5 L145.0,327.5 L147.0,327.5 L149.0,327.5 L151.0,327.5 L153.0,327.5 L155.0,327.5 L157.0,327.5 L159.0,327.5 L161.0,327.5 L163.0,327.5 L165.0,327.5 L167.0,327.5 L169.0,327.5 L171.0,327.5 L173.0,327.5 L175.0,327.5 L177.0,327.5 L179.0,327.5 L181.0,327.5 L183.0,327.5 L185.0,327.5 L187.0,327.5 L189.0,327.5 L191.0,327.5 L193.0,327.5 L195.0,327.5 L197.0,327.5 L199.0,327.5 L201.0,327.5 L203.0,327.5 L205.0,327.5 L207.0,327.5 L209.0,327.5 L211.0,327.5 L213.0,327.5 L215.0,327.5 L217.0,327.5 L219.0,327.5 L221.0,327.5 L223.0,327.5 L225.0,327.5 L227.0,327.5 L229.0,327.5 L231.0,327.5 L233.0,327.5 L235.0,327.5 L237.0,327.5 L239.0,327.5 L241.0,327.5 L243.0,327.5 L245.0,327.5 L247.0,327.5 L249.0,327.5 L251.0,327.5 L253.0,327.5 L255.0,327.5 L257.0,327.5 L259.0,327.5 L261.0,327.5 L263.0,327.5 L265.0,327.5 L267.0,327.5 L269.0,327.5 L271.0,327.5 L273.0,327.5 L275.0,327.5 L277.0,327.5 L279.0,327.5 L281.0,327.5 L283.0,327.5 L285.0,327.5 L287.0,327.5 L289.0,327.5 L291.0,327.5 L293.0,327.5 L295.0,327.5 L297.0,327.5 L299.0,327.5 L301.0,327.5 L303.0,327.5 L305.0,327.5 L307.0,327.5 L309.0,327.5 L311.0,327.5 L313.0,327.5 L315.0,327.5 L317.0,327.5 L319.0,327.5 L321.0,327.5 L323.0,327.5 L325.0,327.5 L327.0,327.5 L329.0,327.5 L331.0,327.5 L333.0,327.5 L335.0,327.5 L337.0,327.5 L339.0,327.5 L341.0,327.5 L343.0,327.5 L345.0,327.5 L347.0,327.5 L349.0,327.5 L351.0,327.5 L353.0,327.5 L355.0,327.5 L357.0,327.5 L359.0,327.5 L361.0,327.5 L363.0,327.5 L365.0,327.5 L367.0,327.5 L369.0,327.5 L371.0,327.5 L373.0,327.5 L375.0,327.5 L377.0,327.5 L379.0,327.5 L381.0,327.5 L383.0,327.5 L385.0,327.5 L387.0,327.5 L389.0,327.5 L391.0,327.5 L393.0,327.5 L395.0,327.5 L397.0,327.5 L399.0,327.5 L401.0,327.5 L403.0,327.5 L405.0,327.5 L407.0,327.5 L409.0,327.5 L411.0,327.5 L413.0,327.5 L415.0,327.5 L417.0,327.5 L419.0,327.5 L421.0,327.5 L423.0,327.5 L425.0,327.5 L427.0,327.5 L429.0,327.5 L431.0,327.5 L433.0,327.5 L435.0,327.5 L437.0,327.5 L439.0,327.5 L441.0,327.5 L443.0,327.5 L445.0,327.5 L447.0,327.5 L449.0,327.5 L451.0,327.5 L453.0,327.5 L455.0,327.5 L457.0,327.5 L459.0,327.5 L461.0,327.5 L463.0,327.5 L465.0,327.5 L467.0,327.5 L469.0,327.5 L471.0,327.5 L473.0,327.5 L475.0,327.5 L477.0,327.5 L479.0,327.5 L481.0,327.5 L483.0,327.5 L485.0,327.5 L487.0,327.5 L489.0,327.5 L491.0,327.5 L493.0,327.5 L495.0,327.5 L496.0,327.5" fill="none" stroke="#4055A3" stroke-opacity="0.35" stroke-width="1.6" stroke-linejoin="round"/><path d="M1371.0,327.5 L1373.0,327.5 L1375.0,327.5 L1377.0,327.5 L1379.0,327.5 L1381.0,327.5 L1383.0,327.5 L1385.0,327.5 L1387.0,327.5 L1389.0,327.5 L1391.0,327.5 L1393.0,327.5 L1395.0,327.5 L1397.0,327.5 L1399.0,327.5 L1401.0,327.5 L1403.0,327.5 L1405.0,327.5 L1407.0,327.5 L1409.0,327.5 L1411.0,327.5 L1413.0,327.5 L1415.0,327.5 L1417.0,327.5 L1419.0,327.5 L1421.0,327.5 L1423.0,327.5 L1425.0,327.5 L1427.0,327.5 L1429.0,327.5 L1431.0,327.5 L1433.0,327.5 L1435.0,327.5 L1437.0,327.5 L1439.0,327.5 L1441.0,327.5 L1443.0,327.5 L1445.0,327.5 L1447.0,327.5 L1449.0,327.5 L1451.0,327.5 L1453.0,327.5 L1455.0,327.5 L1457.0,327.5 L1459.0,327.5 L1461.0,327.5 L1463.0,327.5 L1465.0,327.5 L1467.0,327.5 L1469.0,327.5 L1471.0,327.5 L1473.0,327.5 L1475.0,327.5 L1477.0,327.5 L1479.0,327.5 L1481.0,327.5 L1483.0,327.5 L1485.0,327.5 L1487.0,327.5 L1489.0,327.5 L1491.0,327.5 L1493.0,327.5 L1495.0,327.5 L1497.0,327.5 L1499.0,327.5 L1501.0,327.5 L1503.0,327.5 L1505.0,327.5 L1507.0,327.5 L1509.0,327.5 L1511.0,327.5 L1513.0,327.5 L1515.0,327.5 L1517.0,327.5 L1519.0,327.5 L1521.0,327.5 L1523.0,327.5 L1525.0,327.5 L1527.0,327.5 L1529.0,327.5 L1531.0,327.5 L1533.0,327.5 L1535.0,327.5 L1537.0,327.5 L1539.0,327.5 L1541.0,327.5 L1543.0,327.5 L1545.0,327.5 L1547.0,327.5 L1549.0,327.5 L1551.0,327.5 L1553.0,327.5 L1555.0,327.5 L1557.0,327.5 L1559.0,327.5 L1561.0,327.5 L1563.0,327.5 L1565.0,327.5 L1567.0,327.5 L1569.0,327.5 L1571.0,327.5 L1573.0,327.5 L1575.0,327.5 L1577.0,327.5 L1579.0,327.5 L1581.0,327.5 L1583.0,327.5 L1585.0,327.5 L1587.0,327.5 L1589.0,327.5 L1591.0,327.5 L1593.0,327.5 L1595.0,327.5 L1597.0,327.5 L1599.0,327.5 L1601.0,327.5 L1603.0,327.5 L1605.0,327.5 L1607.0,327.5 L1609.0,327.5 L1611.0,327.5 L1613.0,327.5 L1615.0,327.5 L1617.0,327.5 L1619.0,327.5 L1621.0,327.5 L1623.0,327.5 L1625.0,327.5 L1627.0,327.5 L1629.0,327.5 L1631.0,327.5 L1633.0,327.5 L1635.0,327.5 L1637.0,327.5 L1639.0,327.5 L1641.0,327.5 L1643.0,327.5 L1645.0,327.5 L1647.0,327.5 L1649.0,327.5 L1651.0,327.5 L1653.0,327.5 L1655.0,327.5 L1657.0,327.5 L1659.0,327.5 L1661.0,327.5 L1663.0,327.5 L1665.0,327.5 L1667.0,327.5 L1669.0,327.5 L1671.0,327.5 L1673.0,327.5 L1675.0,327.5 L1677.0,327.5 L1679.0,327.5 L1681.0,327.5 L1683.0,327.5 L1685.0,327.5 L1687.0,327.5 L1689.0,327.5 L1691.0,327.5 L1693.0,327.5 L1695.0,327.5 L1697.0,327.5 L1699.0,327.5 L1701.0,327.5 L1703.0,327.5 L1705.0,327.5 L1707.0,327.5 L1709.0,327.5 L1711.0,327.5 L1713.0,327.5 L1715.0,327.5 L1717.0,327.5 L1719.0,327.5 L1721.0,327.5 L1723.0,327.5 L1725.0,327.5 L1727.0,327.5 L1729.0,327.5 L1731.0,327.5 L1733.0,327.5 L1735.0,327.5 L1737.0,327.5 L1739.0,327.5 L1741.0,327.5 L1743.0,327.5 L1745.0,327.5 L1747.0,327.5 L1749.0,327.5 L1751.0,327.5 L1753.0,327.5 L1755.0,327.5 L1757.0,327.5 L1759.0,327.5 L1761.0,327.5 L1763.0,327.5 L1765.0,327.5 L1767.0,327.5 L1769.0,327.5 L1771.0,327.5 L1773.0,327.5 L1775.0,327.5 L1777.0,327.5 L1779.0,327.5 L1781.0,327.5 L1783.0,327.5 L1785.0,327.5 L1787.0,327.5 L1789.0,327.5 L1791.0,327.5 L1792.0,327.5 L1793.0,306.4 L1795.0,264.1 L1796.0,243.0 L1797.0,242.0 L1799.0,240.0 L1801.0,180.7 L1802.0,152.4 L1803.0,151.8 L1805.0,152.6 L1807.0,152.0 L1809.0,150.8 L1811.0,151.7 L1813.0,152.3 L1815.0,151.5 L1817.0,151.2 L1819.0,151.0 L1821.0,151.7 L1823.0,153.0 L1825.0,152.5 L1827.0,153.4 L1829.0,152.0 L1831.0,150.1 L1833.0,153.2 L1835.0,153.1 L1837.0,150.1 L1839.0,151.8 L1841.0,153.9 L1843.0,151.5 L1845.0,151.8 L1847.0,152.0 L1849.0,150.1 L1851.0,151.0 L1853.0,151.8 L1855.0,151.0 L1857.0,151.2 L1859.0,151.3 L1861.0,151.8 L1863.0,152.7 L1865.0,153.4 L1867.0,153.1 L1869.0,151.2 L1870.0,150.5" fill="none" stroke="#4055A3" stroke-opacity="0.35" stroke-width="1.6" stroke-linejoin="round"/><path d="M496.0,327.5 L497.0,327.5 L499.0,327.5 L501.0,327.5 L503.0,327.5 L505.0,327.5 L507.0,327.5 L509.0,327.5 L511.0,327.5 L513.0,327.5 L515.0,327.5 L517.0,327.5 L519.0,327.5 L521.0,327.5 L523.0,327.5 L525.0,327.5 L527.0,327.5 L529.0,327.5 L531.0,327.5 L533.0,327.5 L535.0,327.5 L537.0,327.5 L539.0,327.5 L541.0,327.5 L543.0,327.5 L545.0,327.5 L547.0,327.5 L549.0,327.5 L551.0,327.5 L553.0,327.5 L555.0,327.5 L557.0,327.5 L559.0,327.5 L561.0,327.5 L563.0,327.5 L565.0,327.5 L567.0,327.5 L569.0,327.5 L571.0,327.5 L573.0,327.5 L575.0,327.5 L577.0,327.5 L579.0,327.5 L581.0,327.5 L583.0,327.5 L585.0,327.5 L587.0,327.5 L589.0,327.5 L591.0,327.5 L593.0,327.5 L595.0,327.5 L597.0,327.5 L599.0,327.5 L601.0,327.5 L603.0,327.5 L605.0,327.5 L607.0,327.5 L609.0,327.5 L611.0,327.5 L613.0,327.5 L615.0,327.5 L617.0,327.5 L619.0,327.5 L621.0,327.5 L623.0,327.5 L625.0,327.5 L627.0,327.5 L629.0,327.5 L631.0,327.5 L633.0,327.5 L635.0,327.5 L637.0,327.5 L639.0,327.5 L641.0,327.5 L643.0,327.5 L645.0,327.5 L647.0,327.5 L649.0,327.5 L651.0,327.5 L653.0,327.5 L655.0,327.5 L656.0,327.5 L657.0,311.1 L659.0,278.3 L661.0,245.5 L663.0,212.6 L665.0,179.8 L667.0,146.8 L669.0,147.5 L671.0,147.2 L673.0,146.9 L675.0,147.4 L677.0,147.8 L679.0,147.5 L681.0,147.6 L683.0,146.8 L685.0,145.5 L687.0,146.5 L689.0,147.8 L691.0,147.2 L693.0,146.4 L695.0,148.7 L697.0,148.4 L699.0,146.1 L700.0,147.0 L701.0,146.2 L703.0,146.0 L705.0,148.7 L707.0,149.4 L709.0,148.3 L711.0,148.0 L713.0,147.5 L715.0,147.8 L717.0,147.5 L719.0,146.2 L721.0,146.4 L723.0,147.6 L725.0,147.8 L727.0,147.6 L729.0,145.4 L731.0,145.8 L733.0,149.8 L735.0,149.9 L737.0,147.4 L739.0,145.4 L741.0,145.9 L743.0,145.8 L745.0,146.2 L747.0,146.6 L749.0,146.7 L751.0,148.5 L753.0,145.7 L755.0,144.7 L757.0,145.9 L759.0,144.3 L761.0,144.3 L763.0,145.4 L765.0,146.9 L767.0,145.7 L769.0,145.6 L771.0,148.9 L773.0,148.4 L775.0,147.1 L777.0,146.5 L779.0,144.9 L781.0,145.3 L783.0,146.7 L785.0,146.9 L787.0,148.9 L789.0,148.9 L791.0,146.8 L793.0,147.6 L795.0,145.9 L797.0,143.4 L799.0,144.3 L801.0,144.7 L803.0,145.7 L805.0,145.9 L807.0,146.9 L809.0,148.6 L811.0,147.6 L813.0,145.8 L815.0,145.7 L817.0,146.8 L819.0,145.2 L821.0,144.7 L823.0,146.3 L825.0,146.2 L827.0,147.0 L829.0,147.8 L831.0,145.6 L833.0,144.6 L835.0,144.5 L837.0,144.9 L839.0,144.9 L841.0,145.2 L843.0,146.3 L845.0,146.3 L847.0,145.8 L849.0,143.5 L850.0,145.3 L851.0,146.4 L853.0,145.9 L855.0,146.3 L857.0,145.5 L859.0,146.6 L861.0,146.2 L863.0,145.6 L865.0,143.8 L867.0,143.2 L869.0,144.2 L871.0,143.1 L873.0,143.2 L875.0,143.5 L877.0,144.8 L879.0,142.6 L881.0,141.0 L883.0,141.9 L885.0,142.8 L887.0,142.9 L889.0,142.1 L891.0,142.0 L893.0,142.0 L895.0,143.2 L897.0,142.0 L899.0,141.0 L901.0,139.9 L903.0,140.0 L905.0,141.9 L907.0,141.0 L909.0,141.1 L911.0,139.5 L913.0,136.7 L915.0,137.1 L917.0,138.2 L919.0,139.4 L921.0,139.6 L923.0,139.4 L925.0,140.0 L927.0,139.5 L929.0,137.5 L931.0,136.6 L933.0,139.6 L935.0,138.4 L937.0,136.1 L939.0,139.5 L941.0,140.0 L943.0,137.7 L945.0,137.1 L947.0,138.5 L949.0,139.5 L951.0,137.7 L953.0,137.1 L955.0,138.1 L957.0,138.2 L959.0,139.1 L961.0,137.6 L963.0,134.9 L965.0,135.4 L967.0,138.2 L969.0,138.3 L971.0,136.8 L973.0,138.2 L975.0,136.9 L977.0,135.3 L979.0,135.6 L981.0,134.7 L983.0,135.2 L985.0,136.4 L987.0,135.3 L989.0,133.2 L991.0,132.5 L993.0,133.3 L995.0,134.2 L997.0,133.9 L999.0,133.2 L1001.0,132.4 L1003.0,134.2 L1005.0,134.2 L1007.0,133.6 L1009.0,134.1 L1010.0,133.2 L1011.0,131.2 L1013.0,132.4 L1015.0,134.0 L1017.0,134.0 L1019.0,132.0 L1021.0,129.5 L1023.0,129.4 L1025.0,130.1 L1027.0,133.0 L1029.0,134.3 L1031.0,133.3 L1033.0,132.9 L1035.0,133.6 L1037.0,133.2 L1039.0,132.8 L1041.0,133.2 L1043.0,130.8 L1045.0,130.3 L1047.0,133.5 L1049.0,133.5 L1051.0,132.1 L1053.0,131.9 L1055.0,131.5 L1057.0,133.1 L1059.0,133.3 L1061.0,131.3 L1063.0,128.7 L1065.0,129.1 L1067.0,130.1 L1069.0,128.9 L1071.0,131.4 L1073.0,133.8 L1075.0,131.2 L1077.0,131.3 L1079.0,133.5 L1081.0,132.0 L1083.0,132.2 L1085.0,131.4 L1087.0,129.6 L1089.0,129.8 L1091.0,129.8 L1093.0,132.0 L1095.0,131.7 L1097.0,129.8 L1099.0,130.2 L1101.0,131.4 L1103.0,131.9 L1105.0,132.5 L1107.0,132.2 L1109.0,130.2 L1111.0,130.3 L1113.0,131.5 L1115.0,131.1 L1117.0,131.3 L1119.0,133.8 L1121.0,133.0 L1123.0,131.4 L1125.0,133.1 L1127.0,132.5 L1129.0,130.4 L1131.0,130.0 L1133.0,131.1 L1135.0,132.6 L1137.0,132.0 L1139.0,131.6 L1141.0,132.9 L1143.0,133.6 L1145.0,131.1 L1147.0,130.3 L1149.0,131.7 L1151.0,132.3 L1153.0,132.0 L1155.0,130.7 L1157.0,130.5 L1159.0,129.4 L1161.0,129.8 L1163.0,130.8 L1165.0,131.3 L1167.0,130.9 L1169.0,130.0 L1171.0,130.0 L1173.0,129.4 L1175.0,131.0 L1177.0,131.5 L1179.0,131.2 L1181.0,130.6 L1183.0,130.3 L1185.0,129.7 L1187.0,129.2 L1189.0,130.2 L1191.0,131.2 L1193.0,131.8 L1195.0,131.1 L1197.0,131.7 L1199.0,132.0 L1201.0,131.7 L1203.0,132.2 L1205.0,131.6 L1207.0,130.6 L1209.0,131.0 L1210.0,130.8 L1211.0,130.9 L1213.0,132.3 L1215.0,132.7 L1217.0,131.4 L1219.0,129.4 L1221.0,129.7 L1223.0,229.2 L1225.0,327.5 L1227.0,327.5 L1229.0,327.5 L1231.0,327.5 L1233.0,327.5 L1235.0,327.5 L1237.0,327.5 L1239.0,327.5 L1241.0,327.5 L1243.0,327.5 L1245.0,327.5 L1247.0,327.5 L1249.0,327.5 L1251.0,327.5 L1253.0,327.5 L1255.0,327.5 L1257.0,327.5 L1259.0,327.5 L1261.0,327.5 L1263.0,327.5 L1265.0,327.5 L1267.0,327.5 L1269.0,327.5 L1271.0,327.5 L1273.0,327.5 L1275.0,327.5 L1277.0,327.5 L1279.0,327.5 L1281.0,327.5 L1283.0,327.5 L1285.0,327.5 L1287.0,327.5 L1289.0,327.5 L1291.0,327.5 L1293.0,327.5 L1295.0,327.5 L1297.0,327.5 L1299.0,327.5 L1301.0,327.5 L1303.0,327.5 L1305.0,327.5 L1307.0,327.5 L1309.0,327.5 L1311.0,327.5 L1313.0,327.5 L1315.0,327.5 L1317.0,327.5 L1319.0,327.5 L1321.0,327.5 L1323.0,327.5 L1325.0,327.5 L1327.0,327.5 L1329.0,327.5 L1331.0,327.5 L1333.0,327.5 L1335.0,327.5 L1337.0,327.5 L1339.0,327.5 L1341.0,327.5 L1343.0,327.5 L1345.0,327.5 L1347.0,327.5 L1349.0,327.5 L1351.0,327.5 L1353.0,327.5 L1355.0,327.5 L1357.0,327.5 L1359.0,327.5 L1361.0,327.5 L1363.0,327.5 L1365.0,327.5 L1367.0,327.5 L1369.0,327.5 L1371.0,327.5" fill="none" stroke="#4055A3" stroke-width="2.2" stroke-linejoin="round"/><path d="M53.0,138.8 L55.0,139.8 L57.0,139.0 L59.0,138.9 L61.0,138.3 L63.0,138.0 L65.0,140.1 L67.0,144.1 L69.0,143.8 L71.0,140.3 L73.0,138.9 L75.0,139.9 L77.0,139.5 L79.0,137.9 L81.0,139.9 L83.0,139.6 L85.0,265.2 L86.0,327.5 L87.0,327.5 L89.0,327.5 L91.0,327.5 L93.0,327.5 L95.0,327.5 L97.0,327.5 L99.0,327.5 L101.0,327.5 L103.0,327.5 L105.0,327.5 L107.0,327.5 L109.0,327.5 L111.0,327.5 L113.0,327.5 L115.0,327.5 L117.0,327.5 L119.0,327.5 L121.0,327.5 L123.0,327.5 L125.0,327.5 L127.0,327.5 L129.0,327.5 L131.0,327.5 L133.0,327.5 L135.0,327.5 L137.0,327.5 L139.0,327.5 L141.0,327.5 L143.0,327.5 L145.0,327.5 L147.0,327.5 L149.0,327.5 L151.0,327.5 L153.0,327.5 L155.0,327.5 L157.0,327.5 L159.0,327.5 L161.0,327.5 L163.0,327.5 L165.0,327.5 L167.0,327.5 L169.0,327.5 L171.0,327.5 L173.0,327.5 L175.0,327.5 L177.0,327.5 L179.0,327.5 L181.0,327.5 L183.0,327.5 L185.0,327.5 L187.0,327.5 L189.0,327.5 L191.0,327.5 L193.0,327.5 L195.0,327.5 L197.0,327.5 L199.0,327.5 L201.0,327.5 L203.0,327.5 L205.0,327.5 L207.0,327.5 L209.0,327.5 L211.0,327.5 L213.0,327.5 L215.0,327.5 L217.0,327.5 L219.0,327.5 L221.0,327.5 L223.0,327.5 L225.0,327.5 L227.0,327.5 L229.0,327.5 L231.0,327.5 L233.0,327.5 L235.0,327.5 L237.0,327.5 L239.0,327.5 L241.0,327.5 L243.0,327.5 L245.0,327.5 L247.0,327.5 L249.0,327.5 L251.0,327.5 L253.0,327.5 L255.0,327.5 L257.0,327.5 L259.0,327.5 L261.0,327.5 L263.0,327.5 L265.0,327.5 L267.0,327.5 L269.0,327.5 L271.0,327.5 L273.0,327.5 L275.0,327.5 L277.0,327.5 L279.0,327.5 L281.0,327.5 L283.0,327.5 L285.0,327.5 L287.0,327.5 L289.0,327.5 L291.0,327.5 L293.0,327.5 L295.0,327.5 L297.0,327.5 L299.0,327.5 L301.0,327.5 L303.0,327.5 L305.0,327.5 L307.0,327.5 L309.0,327.5 L311.0,327.5 L313.0,327.5 L315.0,327.5 L317.0,327.5 L319.0,327.5 L321.0,327.5 L323.0,327.5 L325.0,327.5 L327.0,327.5 L329.0,327.5 L331.0,327.5 L333.0,327.5 L335.0,327.5 L337.0,327.5 L339.0,327.5 L341.0,327.5 L343.0,327.5 L345.0,327.5 L347.0,327.5 L349.0,327.5 L351.0,327.5 L353.0,327.5 L355.0,327.5 L357.0,327.5 L359.0,327.5 L361.0,327.5 L363.0,327.5 L365.0,327.5 L367.0,327.5 L369.0,327.5 L371.0,327.5 L373.0,327.5 L375.0,327.5 L377.0,327.5 L379.0,327.5 L381.0,327.5 L383.0,327.5 L385.0,327.5 L387.0,327.5 L389.0,327.5 L391.0,327.5 L393.0,327.5 L395.0,327.5 L397.0,327.5 L399.0,327.5 L401.0,327.5 L403.0,327.5 L405.0,327.5 L407.0,327.5 L409.0,327.5 L411.0,327.5 L413.0,327.5 L415.0,327.5 L417.0,327.5 L419.0,327.5 L421.0,327.5 L423.0,327.5 L425.0,327.5 L427.0,327.5 L429.0,327.5 L431.0,327.5 L433.0,327.5 L435.0,327.5 L437.0,327.5 L439.0,327.5 L441.0,327.5 L443.0,327.5 L445.0,327.5 L447.0,327.5 L449.0,327.5 L451.0,327.5 L453.0,327.5 L455.0,327.5 L457.0,327.5 L459.0,327.5 L461.0,327.5 L463.0,327.5 L465.0,327.5 L467.0,327.5 L469.0,327.5 L471.0,327.5 L473.0,327.5 L475.0,327.5 L477.0,327.5 L479.0,327.5 L481.0,327.5 L483.0,327.5 L485.0,327.5 L487.0,327.5 L489.0,327.5 L491.0,327.5 L493.0,327.5 L495.0,327.5 L496.0,327.5" fill="none" stroke="#4055A3" stroke-opacity="0.35" stroke-width="1.6" stroke-linejoin="round"/><path d="M1371.0,327.5 L1373.0,327.5 L1375.0,327.5 L1377.0,327.5 L1379.0,327.5 L1381.0,327.5 L1383.0,327.5 L1385.0,327.5 L1387.0,327.5 L1389.0,327.5 L1391.0,327.5 L1393.0,327.5 L1395.0,327.5 L1397.0,327.5 L1399.0,327.5 L1401.0,327.5 L1403.0,327.5 L1405.0,327.5 L1407.0,327.5 L1409.0,327.5 L1411.0,327.5 L1413.0,327.5 L1415.0,327.5 L1417.0,327.5 L1419.0,327.5 L1421.0,327.5 L1423.0,327.5 L1425.0,327.5 L1427.0,327.5 L1429.0,327.5 L1431.0,327.5 L1433.0,327.5 L1435.0,327.5 L1437.0,327.5 L1439.0,327.5 L1441.0,327.5 L1443.0,327.5 L1445.0,327.5 L1447.0,327.5 L1449.0,327.5 L1451.0,327.5 L1453.0,327.5 L1455.0,327.5 L1457.0,327.5 L1459.0,327.5 L1461.0,327.5 L1463.0,327.5 L1465.0,327.5 L1467.0,327.5 L1469.0,327.5 L1471.0,327.5 L1473.0,327.5 L1475.0,327.5 L1477.0,327.5 L1479.0,327.5 L1481.0,327.5 L1483.0,327.5 L1485.0,327.5 L1487.0,327.5 L1489.0,327.5 L1491.0,327.5 L1493.0,327.5 L1495.0,327.5 L1497.0,327.5 L1499.0,327.5 L1501.0,327.5 L1503.0,327.5 L1505.0,327.5 L1507.0,327.5 L1509.0,327.5 L1511.0,327.5 L1513.0,327.5 L1515.0,327.5 L1517.0,327.5 L1519.0,327.5 L1521.0,327.5 L1523.0,327.5 L1525.0,327.5 L1527.0,327.5 L1529.0,327.5 L1531.0,327.5 L1533.0,327.5 L1535.0,327.5 L1537.0,327.5 L1539.0,327.5 L1541.0,327.5 L1543.0,327.5 L1545.0,327.5 L1547.0,327.5 L1549.0,327.5 L1551.0,327.5 L1553.0,327.5 L1555.0,327.5 L1557.0,327.5 L1559.0,327.5 L1561.0,327.5 L1563.0,327.5 L1565.0,327.5 L1567.0,327.5 L1569.0,327.5 L1571.0,327.5 L1573.0,327.5 L1575.0,327.5 L1577.0,327.5 L1579.0,327.5 L1581.0,327.5 L1583.0,327.5 L1585.0,327.5 L1587.0,327.5 L1589.0,327.5 L1591.0,327.5 L1593.0,327.5 L1595.0,327.5 L1597.0,327.5 L1599.0,327.5 L1601.0,327.5 L1603.0,327.5 L1605.0,327.5 L1607.0,327.5 L1609.0,327.5 L1611.0,327.5 L1613.0,327.5 L1615.0,327.5 L1617.0,327.5 L1619.0,327.5 L1621.0,327.5 L1623.0,327.5 L1625.0,327.5 L1627.0,327.5 L1629.0,327.5 L1631.0,327.5 L1633.0,327.5 L1635.0,327.5 L1637.0,327.5 L1639.0,327.5 L1641.0,327.5 L1643.0,327.5 L1645.0,327.5 L1647.0,327.5 L1649.0,327.5 L1651.0,327.5 L1653.0,327.5 L1655.0,327.5 L1657.0,327.5 L1659.0,327.5 L1661.0,327.5 L1663.0,327.5 L1665.0,327.5 L1667.0,327.5 L1669.0,327.5 L1671.0,327.5 L1673.0,327.5 L1675.0,327.5 L1677.0,327.5 L1679.0,327.5 L1681.0,327.5 L1683.0,327.5 L1685.0,327.5 L1687.0,327.5 L1689.0,327.5 L1691.0,327.5 L1693.0,327.5 L1695.0,327.5 L1697.0,327.5 L1699.0,327.5 L1701.0,327.5 L1703.0,327.5 L1705.0,327.5 L1707.0,327.5 L1709.0,327.5 L1711.0,327.5 L1713.0,327.5 L1715.0,327.5 L1717.0,327.5 L1719.0,327.5 L1721.0,327.5 L1723.0,327.5 L1725.0,327.5 L1727.0,327.5 L1729.0,327.5 L1731.0,327.5 L1733.0,327.5 L1735.0,327.5 L1737.0,327.5 L1739.0,327.5 L1741.0,327.5 L1743.0,327.5 L1745.0,327.5 L1747.0,327.5 L1749.0,327.5 L1751.0,327.5 L1753.0,327.5 L1755.0,327.5 L1757.0,327.5 L1759.0,327.5 L1761.0,327.5 L1763.0,327.5 L1765.0,327.5 L1767.0,327.5 L1769.0,327.5 L1771.0,327.5 L1773.0,327.5 L1775.0,327.5 L1777.0,327.5 L1779.0,327.5 L1781.0,327.5 L1783.0,327.5 L1785.0,327.5 L1787.0,327.5 L1789.0,327.5 L1791.0,327.5 L1793.0,327.5 L1795.0,327.5 L1797.0,285.2 L1799.0,243.0 L1801.0,241.0 L1802.0,240.0 L1803.0,210.8 L1805.0,151.7 L1807.0,153.3 L1809.0,153.3 L1811.0,153.1 L1813.0,153.0 L1815.0,152.6 L1817.0,152.8 L1819.0,154.1 L1821.0,153.7 L1823.0,153.7 L1825.0,152.2 L1827.0,150.9 L1829.0,153.8 L1831.0,156.2 L1833.0,155.2 L1835.0,153.6 L1837.0,152.2 L1839.0,152.7 L1841.0,154.6 L1843.0,153.0 L1845.0,152.9 L1847.0,154.7 L1849.0,154.7 L1851.0,153.3 L1853.0,153.4 L1855.0,153.2 L1857.0,154.1 L1859.0,155.6 L1861.0,153.3 L1863.0,154.4 L1865.0,156.6 L1867.0,154.9 L1869.0,155.9 L1870.0,155.6" fill="none" stroke="#4055A3" stroke-opacity="0.35" stroke-width="1.6" stroke-linejoin="round"/><path d="M496.0,327.5 L497.0,327.5 L499.0,327.5 L501.0,327.5 L503.0,327.5 L505.0,327.5 L507.0,327.5 L509.0,327.5 L511.0,327.5 L513.0,327.5 L515.0,327.5 L517.0,327.5 L519.0,327.5 L521.0,327.5 L523.0,327.5 L525.0,327.5 L527.0,327.5 L529.0,327.5 L531.0,327.5 L533.0,327.5 L535.0,327.5 L537.0,327.5 L539.0,327.5 L541.0,327.5 L543.0,327.5 L545.0,327.5 L547.0,327.5 L549.0,327.5 L551.0,327.5 L553.0,327.5 L555.0,327.5 L557.0,327.5 L559.0,327.5 L561.0,327.5 L563.0,327.5 L565.0,327.5 L567.0,327.5 L569.0,327.5 L571.0,327.5 L573.0,327.5 L575.0,327.5 L577.0,327.5 L579.0,327.5 L581.0,327.5 L583.0,327.5 L585.0,327.5 L587.0,327.5 L589.0,327.5 L591.0,327.5 L593.0,327.5 L595.0,327.5 L597.0,327.5 L599.0,327.5 L601.0,327.5 L603.0,327.5 L605.0,327.5 L607.0,327.5 L609.0,327.5 L611.0,327.5 L613.0,327.5 L615.0,327.5 L617.0,327.5 L619.0,327.5 L621.0,327.5 L623.0,327.5 L625.0,327.5 L627.0,327.5 L629.0,327.5 L631.0,327.5 L633.0,327.5 L635.0,327.5 L637.0,327.5 L639.0,327.5 L641.0,327.5 L643.0,327.5 L645.0,327.5 L647.0,327.5 L649.0,327.5 L651.0,327.5 L653.0,327.5 L655.0,327.5 L657.0,327.5 L659.0,327.5 L660.0,327.5 L661.0,311.2 L663.0,278.7 L665.0,246.1 L667.0,213.6 L669.0,181.0 L671.0,149.6 L673.0,150.0 L675.0,149.9 L677.0,146.2 L679.0,147.1 L681.0,148.9 L683.0,148.0 L685.0,149.7 L687.0,149.7 L689.0,149.3 L691.0,149.5 L693.0,147.8 L695.0,148.3 L697.0,148.4 L699.0,149.1 L700.0,150.5 L701.0,149.4 L703.0,149.1 L705.0,149.5 L707.0,148.7 L709.0,148.9 L711.0,149.0 L713.0,148.7 L715.0,148.0 L717.0,147.5 L719.0,148.7 L721.0,147.9 L723.0,147.1 L725.0,147.3 L727.0,148.3 L729.0,148.1 L731.0,147.8 L733.0,149.8 L735.0,149.7 L737.0,146.9 L739.0,146.6 L741.0,149.0 L743.0,148.6 L745.0,148.7 L747.0,149.4 L749.0,148.8 L751.0,148.0 L753.0,147.1 L755.0,147.1 L757.0,147.6 L759.0,148.3 L761.0,148.6 L763.0,147.8 L765.0,147.4 L767.0,148.0 L769.0,146.5 L771.0,145.4 L773.0,146.1 L775.0,146.6 L777.0,147.1 L779.0,147.0 L781.0,146.4 L783.0,147.2 L785.0,148.3 L787.0,146.1 L789.0,145.9 L791.0,146.3 L793.0,147.8 L795.0,148.4 L797.0,146.5 L799.0,146.9 L801.0,147.1 L803.0,146.9 L805.0,148.5 L807.0,148.7 L809.0,148.0 L811.0,148.8 L813.0,147.2 L815.0,147.6 L817.0,149.1 L819.0,148.4 L821.0,147.0 L823.0,146.8 L825.0,148.0 L827.0,146.7 L829.0,148.4 L831.0,149.4 L833.0,147.1 L835.0,146.7 L837.0,147.7 L839.0,148.5 L841.0,148.2 L843.0,148.3 L845.0,149.0 L847.0,146.8 L849.0,145.0 L850.0,145.2 L851.0,145.7 L853.0,147.7 L855.0,148.1 L857.0,145.7 L859.0,144.6 L861.0,146.4 L863.0,146.0 L865.0,144.8 L867.0,145.4 L869.0,143.7 L871.0,144.0 L873.0,145.8 L875.0,145.5 L877.0,144.1 L879.0,142.8 L881.0,143.0 L883.0,143.7 L885.0,144.2 L887.0,143.9 L889.0,145.3 L891.0,146.3 L893.0,143.8 L895.0,141.9 L897.0,144.0 L899.0,144.1 L901.0,143.7 L903.0,145.3 L905.0,143.4 L907.0,141.5 L909.0,141.9 L911.0,141.3 L913.0,140.1 L915.0,140.4 L917.0,141.9 L919.0,141.7 L921.0,140.6 L923.0,140.5 L925.0,139.3 L927.0,140.9 L929.0,139.8 L931.0,137.7 L933.0,140.2 L935.0,139.4 L937.0,139.3 L939.0,141.5 L941.0,140.1 L943.0,139.0 L945.0,138.6 L947.0,138.7 L949.0,139.6 L951.0,139.2 L953.0,140.2 L955.0,140.3 L957.0,140.2 L959.0,140.2 L961.0,137.7 L963.0,137.2 L965.0,138.6 L967.0,136.9 L969.0,137.5 L971.0,138.7 L973.0,137.7 L975.0,136.7 L977.0,136.3 L979.0,137.2 L981.0,136.7 L983.0,136.3 L985.0,134.6 L987.0,135.6 L989.0,136.3 L991.0,133.0 L993.0,133.0 L995.0,134.0 L997.0,135.2 L999.0,135.0 L1001.0,134.6 L1003.0,134.4 L1005.0,136.0 L1007.0,137.3 L1009.0,136.9 L1010.0,135.4 L1011.0,134.2 L1013.0,134.2 L1015.0,134.1 L1017.0,135.6 L1019.0,133.6 L1021.0,131.9 L1023.0,132.3 L1025.0,132.0 L1027.0,132.3 L1029.0,132.8 L1031.0,132.1 L1033.0,133.1 L1035.0,134.9 L1037.0,133.6 L1039.0,132.5 L1041.0,133.7 L1043.0,134.0 L1045.0,133.3 L1047.0,134.3 L1049.0,135.6 L1051.0,135.5 L1053.0,134.5 L1055.0,135.7 L1057.0,137.4 L1059.0,135.2 L1061.0,133.5 L1063.0,135.0 L1065.0,134.3 L1067.0,133.6 L1069.0,134.3 L1071.0,133.3 L1073.0,133.0 L1075.0,132.2 L1077.0,131.9 L1079.0,131.5 L1081.0,134.1 L1083.0,137.2 L1085.0,136.2 L1087.0,135.1 L1089.0,134.9 L1091.0,135.8 L1093.0,135.8 L1095.0,135.4 L1097.0,133.6 L1099.0,133.2 L1101.0,133.5 L1103.0,132.0 L1105.0,131.5 L1107.0,132.9 L1109.0,134.9 L1111.0,133.2 L1113.0,133.8 L1115.0,136.4 L1117.0,134.4 L1119.0,132.7 L1121.0,132.9 L1123.0,134.2 L1125.0,133.9 L1127.0,132.0 L1129.0,132.6 L1131.0,131.7 L1133.0,131.5 L1135.0,134.4 L1137.0,134.6 L1139.0,134.2 L1141.0,134.3 L1143.0,134.3 L1145.0,133.9 L1147.0,132.5 L1149.0,132.2 L1151.0,132.8 L1153.0,134.1 L1155.0,135.7 L1157.0,134.9 L1159.0,132.7 L1161.0,131.6 L1163.0,132.1 L1165.0,134.0 L1167.0,134.5 L1169.0,133.2 L1171.0,132.1 L1173.0,133.0 L1175.0,133.9 L1177.0,133.0 L1179.0,132.9 L1181.0,134.4 L1183.0,134.2 L1185.0,134.1 L1187.0,135.4 L1189.0,133.9 L1191.0,133.5 L1193.0,133.4 L1195.0,131.8 L1197.0,131.6 L1199.0,131.5 L1201.0,132.2 L1203.0,133.0 L1205.0,133.1 L1207.0,133.8 L1209.0,130.4 L1210.0,130.0 L1211.0,131.2 L1213.0,131.0 L1215.0,131.9 L1217.0,131.8 L1219.0,133.8 L1221.0,230.0 L1223.0,327.5 L1225.0,327.5 L1227.0,327.5 L1229.0,327.5 L1231.0,327.5 L1233.0,327.5 L1235.0,327.5 L1237.0,327.5 L1239.0,327.5 L1241.0,327.5 L1243.0,327.5 L1245.0,327.5 L1247.0,327.5 L1249.0,327.5 L1251.0,327.5 L1253.0,327.5 L1255.0,327.5 L1257.0,327.5 L1259.0,327.5 L1261.0,327.5 L1263.0,327.5 L1265.0,327.5 L1267.0,327.5 L1269.0,327.5 L1271.0,327.5 L1273.0,327.5 L1275.0,327.5 L1277.0,327.5 L1279.0,327.5 L1281.0,327.5 L1283.0,327.5 L1285.0,327.5 L1287.0,327.5 L1289.0,327.5 L1291.0,327.5 L1293.0,327.5 L1295.0,327.5 L1297.0,327.5 L1299.0,327.5 L1301.0,327.5 L1303.0,327.5 L1305.0,327.5 L1307.0,327.5 L1309.0,327.5 L1311.0,327.5 L1313.0,327.5 L1315.0,327.5 L1317.0,327.5 L1319.0,327.5 L1321.0,327.5 L1323.0,327.5 L1325.0,327.5 L1327.0,327.5 L1329.0,327.5 L1331.0,327.5 L1333.0,327.5 L1335.0,327.5 L1337.0,327.5 L1339.0,327.5 L1341.0,327.5 L1343.0,327.5 L1345.0,327.5 L1347.0,327.5 L1349.0,327.5 L1351.0,327.5 L1353.0,327.5 L1355.0,327.5 L1357.0,327.5 L1359.0,327.5 L1361.0,327.5 L1363.0,327.5 L1365.0,327.5 L1367.0,327.5 L1369.0,327.5 L1371.0,327.5" fill="none" stroke="#4055A3" stroke-width="2.2" stroke-linejoin="round"/><path d="M53.0,363.7 L55.5,368.1 L58.0,369.4 L60.5,372.0 L63.0,372.5 L65.5,375.8 L68.0,379.3 L70.5,382.4 L73.0,384.2 L75.5,384.3 L78.0,384.0 L80.5,385.2 L83.0,386.4 L85.5,386.3 L88.0,384.3 L90.5,385.8 L93.0,387.3 L95.5,389.5 L98.0,388.8 L100.5,389.1 L103.0,389.6 L105.5,390.5 L108.0,392.2 L110.5,393.6 L113.0,393.7 L115.5,394.6 L118.0,396.4 L120.5,398.0 L123.0,399.1 L125.5,398.1 L128.0,399.2 L130.5,400.1 L133.0,401.6 L135.5,401.4 L138.0,402.7 L140.5,403.9 L143.0,406.3 L145.5,406.7 L148.0,408.5 L150.5,408.8 L153.0,408.9 L155.5,409.3 L158.0,410.2 L160.5,412.4 L163.0,413.0 L165.5,413.9 L168.0,414.8 L170.5,416.7 L173.0,418.3 L175.5,419.2 L178.0,419.6 L180.5,420.5 L183.0,421.2 L185.5,422.0 L188.0,422.5 L190.5,422.9 L193.0,424.9 L195.5,425.6 L198.0,426.1 L200.5,425.2 L203.0,426.0 L205.5,427.0 L208.0,427.3 L210.5,426.9 L213.0,427.7 L215.5,428.2 L218.0,430.3 L220.5,430.9 L223.0,433.2 L225.5,434.8 L228.0,435.6 L230.5,435.5 L233.0,434.7 L235.5,434.7 L238.0,435.5 L240.5,435.5 L243.0,436.4 L245.5,436.8 L248.0,438.6 L250.5,438.8 L253.0,439.3 L255.5,439.1 L258.0,439.4 L260.5,438.9 L263.0,439.8 L265.5,441.2 L268.0,442.6 L270.5,443.2 L273.0,442.4 L275.5,443.4 L278.0,443.3 L280.5,444.6 L283.0,444.4 L285.5,444.7 L288.0,445.3 L290.5,445.8 L293.0,446.9 L295.5,447.2 L298.0,447.8 L300.5,448.1 L303.0,448.6 L305.5,449.0 L308.0,449.8 L310.5,449.8 L313.0,449.9 L315.5,450.2 L318.0,450.8 L320.5,452.0 L323.0,453.4 L325.5,453.5 L328.0,454.1 L330.5,453.1 L333.0,453.9 L335.5,454.2 L338.0,454.8 L340.5,455.0 L343.0,455.8 L345.5,457.4 L348.0,458.8 L350.5,458.9 L353.0,460.4 L355.5,461.0 L358.0,461.5 L360.5,461.8 L363.0,462.6 L365.5,463.4 L368.0,463.6 L370.5,463.9 L373.0,464.9 L375.5,464.9 L378.0,464.9 L380.5,465.5 L383.0,466.0 L385.5,466.5 L388.0,466.2 L390.5,467.0 L393.0,467.8 L395.5,468.7 L398.0,469.0 L400.5,469.8 L403.0,469.5 L405.5,470.0 L408.0,470.9 L410.5,472.5 L413.0,473.5 L415.5,473.7 L418.0,474.1 L420.5,474.6 L423.0,474.8 L425.5,475.8 L428.0,476.3 L430.5,477.2 L433.0,477.6 L435.5,477.5 L438.0,476.9 L440.5,476.9 L443.0,477.0 L445.5,477.9 L448.0,477.7 L450.5,478.5 L453.0,478.9 L455.5,478.8 L458.0,478.6 L460.5,479.0 L463.0,479.3 L465.5,479.1 L468.0,478.9 L470.5,479.3 L473.0,479.9 L475.5,480.9 L478.0,482.5 L480.5,483.2 L483.0,483.5 L485.5,483.4 L488.0,483.8 L490.5,483.4 L493.0,483.5 L495.5,483.3 L496.0,483.4" fill="none" stroke="#068C45" stroke-opacity="0.32" stroke-width="1.6" stroke-linejoin="round"/><path d="M1371.0,438.1 L1373.0,439.0 L1375.5,439.1 L1378.0,440.5 L1380.5,440.4 L1383.0,440.9 L1385.5,441.0 L1388.0,441.8 L1390.5,441.8 L1393.0,442.2 L1395.5,441.9 L1398.0,443.0 L1400.5,443.7 L1403.0,444.5 L1405.5,445.4 L1408.0,445.2 L1410.5,446.7 L1413.0,446.8 L1415.5,446.7 L1418.0,445.6 L1420.5,445.6 L1423.0,446.4 L1425.5,447.2 L1428.0,448.3 L1430.5,448.6 L1433.0,448.9 L1435.5,448.9 L1438.0,449.1 L1440.5,449.4 L1443.0,449.9 L1445.5,450.6 L1448.0,450.5 L1450.5,449.7 L1453.0,449.2 L1455.5,449.9 L1458.0,449.9 L1460.5,450.3 L1463.0,450.6 L1465.5,451.8 L1468.0,451.8 L1470.5,452.6 L1473.0,453.7 L1475.5,454.4 L1478.0,454.3 L1480.5,454.4 L1483.0,454.2 L1485.5,454.9 L1488.0,454.1 L1490.5,454.7 L1493.0,453.2 L1495.5,453.8 L1498.0,453.5 L1500.5,454.1 L1503.0,454.7 L1505.5,455.5 L1508.0,455.5 L1510.5,455.9 L1513.0,455.5 L1515.5,456.2 L1518.0,455.6 L1520.5,456.2 L1523.0,456.0 L1525.5,456.3 L1528.0,456.3 L1530.5,456.1 L1533.0,456.0 L1535.5,456.3 L1538.0,456.8 L1540.5,456.7 L1543.0,456.6 L1545.5,456.7 L1548.0,457.6 L1550.5,458.4 L1553.0,459.1 L1555.5,459.3 L1558.0,459.6 L1560.5,459.4 L1563.0,458.9 L1565.5,459.3 L1568.0,459.6 L1570.5,460.8 L1573.0,460.7 L1575.5,462.1 L1578.0,462.4 L1580.5,463.4 L1583.0,463.4 L1585.5,463.8 L1588.0,463.4 L1590.5,464.2 L1593.0,465.3 L1595.5,466.7 L1598.0,467.7 L1600.5,468.1 L1603.0,468.3 L1605.5,467.9 L1608.0,468.2 L1610.5,468.3 L1613.0,468.4 L1615.5,469.6 L1618.0,469.4 L1620.5,470.3 L1623.0,470.1 L1625.5,471.3 L1628.0,471.2 L1630.5,471.4 L1633.0,471.5 L1635.5,471.9 L1638.0,472.4 L1640.5,472.8 L1643.0,473.4 L1645.5,476.6 L1648.0,480.8 L1650.5,488.5 L1653.0,497.0 L1655.5,506.7 L1658.0,515.7 L1660.5,524.1 L1663.0,527.2 L1665.5,530.6 L1668.0,533.9 L1670.5,538.1 L1673.0,542.2 L1675.5,546.5 L1678.0,549.7 L1680.5,551.9 L1683.0,549.2 L1685.5,546.8 L1688.0,547.3 L1690.5,549.2 L1693.0,551.1 L1695.5,552.2 L1698.0,554.3 L1700.5,556.1 L1703.0,557.7 L1705.5,560.0 L1708.0,561.2 L1710.5,561.3 L1713.0,560.2 L1715.5,559.4 L1718.0,559.8 L1720.5,558.5 L1723.0,557.9 L1725.5,556.8 L1728.0,556.7 L1730.5,557.4 L1733.0,556.4 L1735.5,556.0 L1738.0,555.1 L1740.5,555.8 L1743.0,556.4 L1745.5,556.3 L1748.0,556.8 L1750.5,556.0 L1753.0,555.8 L1755.5,555.1 L1758.0,555.0 L1760.5,554.7 L1763.0,554.0 L1765.5,553.7 L1768.0,553.2 L1770.5,553.0 L1773.0,552.5 L1775.5,552.9 L1778.0,552.4 L1780.5,553.6 L1783.0,554.0 L1785.5,554.9 L1788.0,553.9 L1790.5,552.8 L1793.0,552.7 L1795.5,552.7 L1798.0,553.0 L1800.5,552.1 L1803.0,551.9 L1805.5,550.2 L1808.0,549.5 L1810.5,547.3 L1813.0,546.3 L1815.5,545.3 L1818.0,544.8 L1820.5,543.7 L1823.0,542.8 L1825.5,542.0 L1828.0,542.6 L1830.5,541.3 L1833.0,541.5 L1835.5,541.2 L1838.0,541.5 L1840.5,540.7 L1843.0,540.8 L1845.5,540.9 L1848.0,541.1 L1850.5,540.9 L1853.0,541.2 L1855.5,541.6 L1858.0,540.9 L1860.5,541.1 L1863.0,541.3 L1865.5,541.7 L1868.0,540.7" fill="none" stroke="#068C45" stroke-opacity="0.32" stroke-width="1.6" stroke-linejoin="round"/><path d="M496.0,483.4 L498.0,483.2 L500.5,483.1 L503.0,483.4 L505.5,483.3 L508.0,484.2 L510.5,484.7 L513.0,485.8 L515.5,486.0 L518.0,486.8 L520.5,486.8 L523.0,486.9 L525.5,486.0 L528.0,485.5 L530.5,484.9 L533.0,486.9 L535.5,487.5 L538.0,489.2 L540.5,489.5 L543.0,490.6 L545.5,491.6 L548.0,492.2 L550.5,493.3 L553.0,494.1 L555.5,493.8 L558.0,493.2 L560.5,492.5 L563.0,492.3 L565.5,492.3 L568.0,491.7 L570.5,493.6 L573.0,494.4 L575.5,495.5 L578.0,494.1 L580.5,494.9 L583.0,495.1 L585.5,495.6 L588.0,495.2 L590.5,494.8 L593.0,495.0 L595.5,496.3 L598.0,498.7 L600.5,500.1 L603.0,501.3 L605.5,500.6 L608.0,500.2 L610.5,498.5 L613.0,498.5 L615.5,497.4 L618.0,498.3 L620.5,499.6 L623.0,501.4 L625.5,502.5 L628.0,501.5 L630.5,500.7 L633.0,499.9 L635.5,500.1 L638.0,502.1 L640.5,503.9 L643.0,504.0 L645.5,503.3 L648.0,502.3 L650.5,502.9 L653.0,502.6 L655.5,502.6 L658.0,500.5 L660.5,499.1 L663.0,495.7 L665.5,492.9 L668.0,489.8 L670.5,491.2 L673.0,490.4 L675.5,491.3 L678.0,490.1 L680.5,490.3 L683.0,489.5 L685.5,488.3 L688.0,490.0 L690.5,490.9 L693.0,492.4 L695.5,492.6 L698.0,492.1 L700.5,492.3 L703.0,490.4 L705.5,491.3 L708.0,491.2 L710.5,491.3 L713.0,489.9 L715.5,489.5 L718.0,490.2 L720.5,488.3 L723.0,487.8 L725.5,486.1 L728.0,487.7 L730.5,485.7 L733.0,486.7 L735.5,485.8 L738.0,486.3 L740.5,483.9 L743.0,481.9 L745.5,480.4 L748.0,477.8 L750.5,477.4 L753.0,476.3 L755.5,477.1 L758.0,477.0 L760.5,476.0 L763.0,477.4 L765.5,476.8 L768.0,474.4 L770.5,469.6 L773.0,466.9 L775.5,467.1 L778.0,465.9 L780.5,464.3 L783.0,465.9 L785.5,466.5 L788.0,467.4 L790.5,464.2 L793.0,463.8 L795.5,466.9 L798.0,468.3 L800.5,470.9 L803.0,462.2 L805.5,461.8 L808.0,461.6 L810.5,472.2 L813.0,471.2 L815.5,464.7 L818.0,461.1 L820.5,459.0 L823.0,458.3 L825.5,454.7 L828.0,458.1 L830.5,464.7 L833.0,466.8 L835.5,460.4 L838.0,462.5 L840.5,456.6 L843.0,457.8 L845.5,446.7 L848.0,451.8 L850.5,450.6 L853.0,454.0 L855.5,448.4 L858.0,444.6 L860.5,440.3 L863.0,432.7 L865.5,433.0 L868.0,432.3 L870.5,433.7 L873.0,428.6 L875.5,424.5 L878.0,427.6 L880.5,427.4 L883.0,425.4 L885.5,418.7 L888.0,412.3 L890.5,409.3 L893.0,409.5 L895.5,411.4 L898.0,411.8 L900.5,412.2 L903.0,412.7 L905.5,411.9 L908.0,410.4 L910.5,408.5 L913.0,406.5 L915.5,404.8 L918.0,398.5 L920.5,400.6 L923.0,394.7 L925.5,400.2 L928.0,395.7 L930.5,400.8 L933.0,397.5 L935.5,393.7 L938.0,392.3 L940.5,391.5 L943.0,393.1 L945.5,390.1 L948.0,392.0 L950.5,393.6 L953.0,393.7 L955.5,386.5 L958.0,382.9 L960.5,382.3 L963.0,391.0 L965.5,392.9 L968.0,392.0 L970.5,390.1 L973.0,388.5 L975.5,388.3 L978.0,385.2 L980.5,381.1 L983.0,383.5 L985.5,383.9 L988.0,387.0 L990.5,380.9 L993.0,380.0 L995.5,384.3 L998.0,385.4 L1000.5,381.4 L1003.0,377.8 L1005.5,374.3 L1008.0,370.2 L1010.5,367.0 L1013.0,368.6 L1015.5,373.1 L1018.0,372.0 L1020.5,373.9 L1023.0,373.2 L1025.5,372.2 L1028.0,369.1 L1030.5,370.6 L1033.0,374.1 L1035.5,377.0 L1038.0,376.3 L1040.5,363.8 L1043.0,358.8 L1045.5,356.2 L1048.0,366.2 L1050.5,364.7 L1053.0,369.8 L1055.5,370.3 L1058.0,373.4 L1060.5,370.1 L1063.0,368.6 L1065.5,368.4 L1068.0,369.6 L1070.5,369.6 L1073.0,368.0 L1075.5,365.1 L1078.0,366.3 L1080.5,367.5 L1083.0,373.0 L1085.5,370.5 L1088.0,378.7 L1090.5,377.9 L1093.0,378.6 L1095.5,374.3 L1098.0,375.3 L1100.5,377.7 L1103.0,374.3 L1105.5,371.5 L1108.0,377.9 L1110.5,377.3 L1113.0,378.8 L1115.5,373.5 L1118.0,377.6 L1120.5,375.3 L1123.0,374.8 L1125.5,378.6 L1128.0,381.8 L1130.5,380.4 L1133.0,382.4 L1135.5,377.6 L1138.0,382.7 L1140.5,379.4 L1143.0,386.8 L1145.5,386.5 L1148.0,389.4 L1150.5,386.5 L1153.0,388.7 L1155.5,387.3 L1158.0,393.8 L1160.5,389.6 L1163.0,392.2 L1165.5,387.8 L1168.0,390.5 L1170.5,385.9 L1173.0,386.1 L1175.5,381.7 L1178.0,379.8 L1180.5,380.7 L1183.0,380.8 L1185.5,388.8 L1188.0,386.3 L1190.5,391.6 L1193.0,388.1 L1195.5,390.2 L1198.0,389.0 L1200.5,387.9 L1203.0,385.9 L1205.5,389.1 L1208.0,392.7 L1210.5,396.1 L1213.0,393.7 L1215.5,389.4 L1218.0,381.2 L1220.5,382.1 L1223.0,386.5 L1225.5,390.7 L1228.0,392.6 L1230.5,394.8 L1233.0,396.9 L1235.5,398.6 L1238.0,399.8 L1240.5,400.1 L1243.0,399.9 L1245.5,400.3 L1248.0,403.1 L1250.5,403.8 L1253.0,404.8 L1255.5,404.7 L1258.0,406.3 L1260.5,407.6 L1263.0,409.8 L1265.5,411.1 L1268.0,411.9 L1270.5,412.1 L1273.0,412.4 L1275.5,413.1 L1278.0,414.7 L1280.5,413.8 L1283.0,414.3 L1285.5,414.3 L1288.0,417.3 L1290.5,417.5 L1293.0,418.3 L1295.5,418.8 L1298.0,420.0 L1300.5,419.4 L1303.0,419.4 L1305.5,419.6 L1308.0,421.7 L1310.5,422.0 L1313.0,424.3 L1315.5,424.6 L1318.0,425.3 L1320.5,424.7 L1323.0,424.7 L1325.5,426.0 L1328.0,427.6 L1330.5,428.7 L1333.0,429.6 L1335.5,429.0 L1338.0,429.9 L1340.5,431.2 L1343.0,431.6 L1345.5,432.7 L1348.0,432.8 L1350.5,433.2 L1353.0,432.5 L1355.5,432.2 L1358.0,434.1 L1360.5,435.2 L1363.0,436.2 L1365.5,436.8 L1368.0,437.6 L1370.5,438.4 L1371.0,438.1" fill="none" stroke="#068C45" stroke-width="2.0" stroke-linejoin="round"/><path d="M53.0,415.8 L55.5,417.2 L58.0,416.5 L60.5,416.9 L63.0,417.1 L65.5,418.1 L68.0,417.3 L70.5,416.2 L73.0,417.6 L75.5,419.7 L78.0,420.2 L80.5,418.8 L83.0,419.7 L85.5,419.8 L88.0,423.0 L90.5,423.0 L93.0,424.8 L95.5,426.6 L98.0,428.5 L100.5,431.9 L103.0,434.3 L105.5,434.9 L108.0,435.2 L110.5,434.8 L113.0,435.1 L115.5,434.2 L118.0,435.3 L120.5,436.0 L123.0,437.3 L125.5,436.5 L128.0,437.3 L130.5,437.4 L133.0,438.9 L135.5,440.6 L138.0,441.4 L140.5,440.4 L143.0,440.1 L145.5,439.9 L148.0,441.2 L150.5,442.7 L153.0,446.1 L155.5,447.5 L158.0,446.5 L160.5,446.1 L163.0,444.9 L165.5,445.8 L168.0,447.0 L170.5,449.8 L173.0,450.0 L175.5,448.5 L178.0,449.2 L180.5,450.8 L183.0,452.2 L185.5,452.6 L188.0,452.9 L190.5,452.7 L193.0,453.6 L195.5,454.2 L198.0,455.5 L200.5,454.8 L203.0,456.1 L205.5,456.9 L208.0,458.8 L210.5,459.1 L213.0,461.0 L215.5,461.0 L218.0,461.3 L220.5,459.9 L223.0,460.0 L225.5,461.3 L228.0,464.9 L230.5,465.3 L233.0,464.7 L235.5,463.6 L238.0,465.1 L240.5,465.8 L243.0,466.2 L245.5,465.5 L248.0,466.2 L250.5,467.1 L253.0,469.5 L255.5,470.0 L258.0,469.9 L260.5,469.7 L263.0,470.9 L265.5,471.8 L268.0,471.6 L270.5,471.7 L273.0,472.5 L275.5,473.0 L278.0,472.6 L280.5,472.8 L283.0,473.9 L285.5,475.6 L288.0,475.8 L290.5,475.7 L293.0,475.4 L295.5,475.3 L298.0,475.6 L300.5,476.0 L303.0,476.7 L305.5,478.1 L308.0,478.2 L310.5,478.8 L313.0,478.4 L315.5,480.2 L318.0,480.7 L320.5,481.3 L323.0,481.4 L325.5,481.7 L328.0,482.1 L330.5,482.8 L333.0,483.6 L335.5,485.1 L338.0,485.3 L340.5,485.8 L343.0,485.4 L345.5,484.7 L348.0,485.1 L350.5,485.5 L353.0,486.8 L355.5,486.9 L358.0,486.9 L360.5,486.4 L363.0,487.1 L365.5,488.5 L368.0,489.2 L370.5,489.4 L373.0,489.8 L375.5,489.9 L378.0,489.8 L380.5,488.9 L383.0,490.2 L385.5,490.9 L388.0,491.6 L390.5,490.5 L393.0,490.6 L395.5,491.7 L398.0,492.7 L400.5,492.9 L403.0,493.1 L405.5,492.9 L408.0,493.5 L410.5,493.9 L413.0,494.4 L415.5,494.3 L418.0,494.5 L420.5,495.2 L423.0,495.8 L425.5,496.2 L428.0,496.7 L430.5,496.7 L433.0,496.5 L435.5,497.0 L438.0,498.4 L440.5,499.8 L443.0,499.5 L445.5,499.8 L448.0,499.9 L450.5,500.6 L453.0,500.7 L455.5,501.1 L458.0,502.4 L460.5,501.9 L463.0,502.1 L465.5,501.4 L468.0,502.2 L470.5,502.9 L473.0,503.7 L475.5,503.6 L478.0,503.2 L480.5,503.2 L483.0,503.4 L485.5,504.3 L488.0,504.5 L490.5,505.7 L493.0,505.8 L495.5,507.1 L496.0,507.1" fill="none" stroke="#068C45" stroke-opacity="0.32" stroke-width="1.6" stroke-linejoin="round"/><path d="M1371.0,458.1 L1373.0,457.5 L1375.5,458.1 L1378.0,458.1 L1380.5,457.9 L1383.0,457.7 L1385.5,458.2 L1388.0,459.3 L1390.5,459.6 L1393.0,458.7 L1395.5,459.6 L1398.0,460.5 L1400.5,461.6 L1403.0,460.1 L1405.5,459.5 L1408.0,459.6 L1410.5,459.7 L1413.0,460.9 L1415.5,461.0 L1418.0,461.8 L1420.5,460.8 L1423.0,460.7 L1425.5,460.5 L1428.0,461.4 L1430.5,462.1 L1433.0,462.7 L1435.5,463.1 L1438.0,463.7 L1440.5,464.9 L1443.0,465.0 L1445.5,464.8 L1448.0,464.5 L1450.5,465.6 L1453.0,466.2 L1455.5,466.6 L1458.0,466.1 L1460.5,466.9 L1463.0,467.4 L1465.5,467.5 L1468.0,467.6 L1470.5,468.3 L1473.0,469.6 L1475.5,470.5 L1478.0,470.8 L1480.5,470.5 L1483.0,470.2 L1485.5,470.6 L1488.0,470.6 L1490.5,471.1 L1493.0,470.2 L1495.5,470.9 L1498.0,471.0 L1500.5,471.7 L1503.0,472.5 L1505.5,472.9 L1508.0,473.7 L1510.5,473.8 L1513.0,474.2 L1515.5,475.4 L1518.0,475.8 L1520.5,476.6 L1523.0,475.8 L1525.5,476.2 L1528.0,476.4 L1530.5,477.3 L1533.0,477.6 L1535.5,478.3 L1538.0,479.6 L1540.5,480.2 L1543.0,480.5 L1545.5,480.0 L1548.0,481.7 L1550.5,482.9 L1553.0,483.7 L1555.5,483.3 L1558.0,482.7 L1560.5,482.8 L1563.0,483.0 L1565.5,483.8 L1568.0,483.9 L1570.5,483.8 L1573.0,484.4 L1575.5,485.4 L1578.0,485.2 L1580.5,485.4 L1583.0,486.3 L1585.5,487.4 L1588.0,487.8 L1590.5,487.0 L1593.0,488.1 L1595.5,487.9 L1598.0,488.4 L1600.5,488.3 L1603.0,490.3 L1605.5,491.0 L1608.0,491.0 L1610.5,490.6 L1613.0,491.4 L1615.5,493.1 L1618.0,492.7 L1620.5,492.3 L1623.0,491.9 L1625.5,493.0 L1628.0,494.3 L1630.5,495.4 L1633.0,494.9 L1635.5,494.6 L1638.0,494.2 L1640.5,495.5 L1643.0,496.2 L1645.5,496.3 L1648.0,495.7 L1650.5,496.0 L1653.0,496.8 L1655.5,498.7 L1658.0,498.4 L1660.5,498.9 L1663.0,497.3 L1665.5,497.4 L1668.0,496.5 L1670.5,497.0 L1673.0,497.1 L1675.5,497.3 L1678.0,497.7 L1680.5,498.1 L1683.0,498.8 L1685.5,499.0 L1688.0,499.5 L1690.5,500.1 L1693.0,500.6 L1695.5,501.0 L1698.0,500.6 L1700.5,500.8 L1703.0,501.3 L1705.5,501.3 L1708.0,502.1 L1710.5,502.8 L1713.0,504.0 L1715.5,503.6 L1718.0,502.5 L1720.5,502.1 L1723.0,502.7 L1725.5,504.1 L1728.0,504.5 L1730.5,504.6 L1733.0,505.2 L1735.5,505.3 L1738.0,506.2 L1740.5,506.3 L1743.0,506.3 L1745.5,506.3 L1748.0,505.9 L1750.5,506.4 L1753.0,505.8 L1755.5,505.7 L1758.0,506.6 L1760.5,507.5 L1763.0,508.6 L1765.5,508.3 L1768.0,508.6 L1770.5,508.7 L1773.0,508.8 L1775.5,508.5 L1778.0,509.2 L1780.5,510.2 L1783.0,510.8 L1785.5,510.9 L1788.0,511.4 L1790.5,512.9 L1793.0,510.6 L1795.5,508.1 L1798.0,505.8 L1800.5,503.7 L1803.0,501.5 L1805.5,498.5 L1808.0,499.1 L1810.5,498.5 L1813.0,498.8 L1815.5,498.5 L1818.0,499.6 L1820.5,502.4 L1823.0,504.1 L1825.5,505.2 L1828.0,505.9 L1830.5,506.5 L1833.0,506.6 L1835.5,507.2 L1838.0,507.3 L1840.5,507.5 L1843.0,507.8 L1845.5,508.3 L1848.0,509.3 L1850.5,510.0 L1853.0,509.5 L1855.5,508.4 L1858.0,507.1 L1860.5,507.2 L1863.0,507.8 L1865.5,508.1 L1868.0,508.2" fill="none" stroke="#068C45" stroke-opacity="0.32" stroke-width="1.6" stroke-linejoin="round"/><path d="M496.0,507.1 L498.0,506.8 L500.5,506.8 L503.0,506.6 L505.5,506.5 L508.0,504.8 L510.5,505.8 L513.0,506.3 L515.5,507.4 L518.0,506.9 L520.5,506.7 L523.0,506.0 L525.5,505.5 L528.0,505.9 L530.5,506.5 L533.0,507.9 L535.5,507.3 L538.0,507.0 L540.5,505.5 L543.0,506.8 L545.5,506.4 L548.0,507.5 L550.5,507.6 L553.0,508.3 L555.5,508.3 L558.0,506.2 L560.5,506.1 L563.0,504.7 L565.5,506.1 L568.0,506.4 L570.5,507.0 L573.0,507.5 L575.5,507.8 L578.0,508.0 L580.5,507.1 L583.0,506.0 L585.5,506.3 L588.0,508.0 L590.5,508.6 L593.0,509.0 L595.5,507.3 L598.0,508.4 L600.5,508.5 L603.0,508.9 L605.5,507.5 L608.0,507.1 L610.5,508.3 L613.0,509.5 L615.5,510.6 L618.0,509.7 L620.5,508.8 L623.0,508.9 L625.5,509.7 L628.0,510.9 L630.5,510.6 L633.0,510.8 L635.5,511.0 L638.0,511.8 L640.5,511.7 L643.0,510.8 L645.5,510.8 L648.0,510.8 L650.5,512.2 L653.0,512.9 L655.5,512.7 L658.0,510.8 L660.5,508.4 L663.0,505.9 L665.5,501.5 L668.0,498.4 L670.5,499.2 L673.0,500.5 L675.5,500.7 L678.0,500.1 L680.5,501.0 L683.0,502.2 L685.5,503.0 L688.0,502.2 L690.5,502.0 L693.0,501.4 L695.5,502.4 L698.0,501.0 L700.5,501.2 L703.0,500.2 L705.5,503.7 L708.0,505.7 L710.5,508.9 L713.0,508.6 L715.5,506.9 L718.0,506.5 L720.5,505.7 L723.0,507.1 L725.5,505.4 L728.0,505.3 L730.5,505.4 L733.0,508.5 L735.5,509.1 L738.0,509.9 L740.5,509.9 L743.0,507.4 L745.5,503.7 L748.0,498.2 L750.5,498.4 L753.0,496.6 L755.5,496.4 L758.0,496.6 L760.5,497.2 L763.0,496.5 L765.5,494.2 L768.0,492.0 L770.5,490.6 L773.0,490.3 L775.5,489.0 L778.0,488.5 L780.5,484.2 L783.0,484.4 L785.5,485.4 L788.0,487.2 L790.5,482.1 L793.0,480.3 L795.5,478.3 L798.0,474.0 L800.5,469.6 L803.0,470.3 L805.5,476.5 L808.0,478.8 L810.5,478.0 L813.0,476.9 L815.5,468.8 L818.0,463.9 L820.5,463.4 L823.0,469.5 L825.5,469.2 L828.0,466.5 L830.5,465.1 L833.0,461.6 L835.5,456.9 L838.0,453.9 L840.5,458.8 L843.0,461.7 L845.5,455.0 L848.0,453.3 L850.5,448.4 L853.0,453.9 L855.5,451.0 L858.0,452.8 L860.5,450.2 L863.0,446.4 L865.5,445.4 L868.0,444.5 L870.5,444.5 L873.0,443.3 L875.5,435.5 L878.0,435.0 L880.5,431.1 L883.0,429.1 L885.5,425.3 L888.0,422.1 L890.5,422.3 L893.0,421.8 L895.5,425.3 L898.0,425.0 L900.5,424.1 L903.0,415.9 L905.5,416.1 L908.0,417.9 L910.5,423.2 L913.0,423.1 L915.5,417.1 L918.0,410.8 L920.5,408.0 L923.0,404.4 L925.5,402.5 L928.0,404.3 L930.5,404.3 L933.0,411.9 L935.5,403.9 L938.0,406.6 L940.5,396.7 L943.0,400.2 L945.5,395.6 L948.0,398.9 L950.5,397.6 L953.0,399.0 L955.5,400.1 L958.0,404.7 L960.5,404.0 L963.0,404.8 L965.5,400.3 L968.0,401.6 L970.5,405.2 L973.0,398.2 L975.5,395.9 L978.0,383.7 L980.5,388.9 L983.0,389.9 L985.5,406.5 L988.0,408.2 L990.5,414.0 L993.0,406.1 L995.5,403.5 L998.0,399.2 L1000.5,399.8 L1003.0,400.3 L1005.5,398.2 L1008.0,393.4 L1010.5,387.0 L1013.0,382.6 L1015.5,380.8 L1018.0,385.7 L1020.5,384.0 L1023.0,380.7 L1025.5,377.4 L1028.0,378.4 L1030.5,380.1 L1033.0,379.5 L1035.5,379.2 L1038.0,371.5 L1040.5,367.0 L1043.0,368.1 L1045.5,368.2 L1048.0,372.8 L1050.5,370.5 L1053.0,373.5 L1055.5,375.2 L1058.0,375.8 L1060.5,376.3 L1063.0,372.9 L1065.5,375.8 L1068.0,387.3 L1070.5,383.6 L1073.0,383.9 L1075.5,375.5 L1078.0,385.4 L1080.5,384.9 L1083.0,378.3 L1085.5,379.5 L1088.0,377.4 L1090.5,384.9 L1093.0,376.8 L1095.5,376.9 L1098.0,375.7 L1100.5,382.6 L1103.0,388.6 L1105.5,388.4 L1108.0,387.5 L1110.5,383.9 L1113.0,386.2 L1115.5,385.2 L1118.0,388.4 L1120.5,386.2 L1123.0,384.8 L1125.5,383.1 L1128.0,384.7 L1130.5,382.2 L1133.0,386.2 L1135.5,384.1 L1138.0,388.3 L1140.5,383.2 L1143.0,387.8 L1145.5,378.3 L1148.0,383.5 L1150.5,377.8 L1153.0,376.1 L1155.5,365.7 L1158.0,368.6 L1160.5,369.3 L1163.0,364.1 L1165.5,360.1 L1168.0,366.8 L1170.5,370.5 L1173.0,375.6 L1175.5,374.3 L1178.0,386.3 L1180.5,387.2 L1183.0,393.2 L1185.5,385.8 L1188.0,385.5 L1190.5,385.7 L1193.0,390.9 L1195.5,389.3 L1198.0,389.3 L1200.5,390.5 L1203.0,394.4 L1205.5,393.6 L1208.0,392.9 L1210.5,393.8 L1213.0,391.9 L1215.5,389.6 L1218.0,391.2 L1220.5,390.7 L1223.0,395.1 L1225.5,395.5 L1228.0,401.0 L1230.5,403.8 L1233.0,407.1 L1235.5,410.4 L1238.0,414.6 L1240.5,418.8 L1243.0,417.9 L1245.5,418.5 L1248.0,418.6 L1250.5,420.8 L1253.0,420.4 L1255.5,421.4 L1258.0,423.7 L1260.5,425.6 L1263.0,426.0 L1265.5,425.2 L1268.0,425.2 L1270.5,426.7 L1273.0,429.3 L1275.5,429.6 L1278.0,429.9 L1280.5,429.1 L1283.0,430.0 L1285.5,431.1 L1288.0,432.5 L1290.5,432.8 L1293.0,432.6 L1295.5,433.8 L1298.0,435.6 L1300.5,437.3 L1303.0,437.1 L1305.5,437.4 L1308.0,438.2 L1310.5,438.9 L1313.0,439.3 L1315.5,439.8 L1318.0,441.4 L1320.5,442.2 L1323.0,443.6 L1325.5,444.3 L1328.0,445.1 L1330.5,445.3 L1333.0,445.7 L1335.5,447.3 L1338.0,448.4 L1340.5,448.5 L1343.0,448.2 L1345.5,449.2 L1348.0,450.7 L1350.5,452.4 L1353.0,452.8 L1355.5,454.3 L1358.0,454.3 L1360.5,455.4 L1363.0,455.0 L1365.5,456.7 L1368.0,457.6 L1370.5,458.1 L1371.0,458.1" fill="none" stroke="#068C45" stroke-width="2.0" stroke-linejoin="round"/><path d="M53.0,394.2 L55.5,394.0 L58.0,394.6 L60.5,392.8 L63.0,395.3 L65.5,394.5 L68.0,395.0 L70.5,393.0 L73.0,392.8 L75.5,393.9 L78.0,394.6 L80.5,395.7 L83.0,396.3 L85.5,399.2 L88.0,401.0 L90.5,402.9 L93.0,405.5 L95.5,405.4 L98.0,405.9 L100.5,406.2 L103.0,408.2 L105.5,412.3 L108.0,413.5 L110.5,416.1 L113.0,417.6 L115.5,420.0 L118.0,420.9 L120.5,421.1 L123.0,421.4 L125.5,422.8 L128.0,425.2 L130.5,427.8 L133.0,429.0 L135.5,428.9 L138.0,431.2 L140.5,433.7 L143.0,435.8 L145.5,437.3 L148.0,439.6 L150.5,442.4 L153.0,444.9 L155.5,446.9 L158.0,447.6 L160.5,448.3 L163.0,449.6 L165.5,452.9 L168.0,455.7 L170.5,455.5 L173.0,456.2 L175.5,457.3 L178.0,461.1 L180.5,463.7 L183.0,463.1 L185.5,462.6 L188.0,461.3 L190.5,463.1 L193.0,463.1 L195.5,465.3 L198.0,466.0 L200.5,467.9 L203.0,466.2 L205.5,465.7 L208.0,466.5 L210.5,467.7 L213.0,468.6 L215.5,468.6 L218.0,470.8 L220.5,471.8 L223.0,472.6 L225.5,472.4 L228.0,472.8 L230.5,472.9 L233.0,473.9 L235.5,474.1 L238.0,475.1 L240.5,473.9 L243.0,475.1 L245.5,474.6 L248.0,476.6 L250.5,476.2 L253.0,477.1 L255.5,477.7 L258.0,477.6 L260.5,477.4 L263.0,476.7 L265.5,477.5 L268.0,476.8 L270.5,477.1 L273.0,477.1 L275.5,477.9 L278.0,478.2 L280.5,477.8 L283.0,479.3 L285.5,479.9 L288.0,482.1 L290.5,481.1 L293.0,480.5 L295.5,479.9 L298.0,479.7 L300.5,480.7 L303.0,480.4 L305.5,481.4 L308.0,481.6 L310.5,482.2 L313.0,483.6 L315.5,484.1 L318.0,483.6 L320.5,483.4 L323.0,482.6 L325.5,483.6 L328.0,482.7 L330.5,483.2 L333.0,484.1 L335.5,484.7 L338.0,485.0 L340.5,484.3 L343.0,484.7 L345.5,486.0 L348.0,485.9 L350.5,485.7 L353.0,485.5 L355.5,485.5 L358.0,486.2 L360.5,486.9 L363.0,488.2 L365.5,488.6 L368.0,488.0 L370.5,487.9 L373.0,488.3 L375.5,489.1 L378.0,490.7 L380.5,492.0 L383.0,492.1 L385.5,491.4 L388.0,491.7 L390.5,491.4 L393.0,492.0 L395.5,491.8 L398.0,492.7 L400.5,492.8 L403.0,493.6 L405.5,493.7 L408.0,494.1 L410.5,494.0 L413.0,495.4 L415.5,495.6 L418.0,496.9 L420.5,497.1 L423.0,498.2 L425.5,497.8 L428.0,498.0 L430.5,498.0 L433.0,499.3 L435.5,500.3 L438.0,501.2 L440.5,501.6 L443.0,501.5 L445.5,502.4 L448.0,502.3 L450.5,502.6 L453.0,503.1 L455.5,502.7 L458.0,504.0 L460.5,503.5 L463.0,505.1 L465.5,505.9 L468.0,507.2 L470.5,507.1 L473.0,506.7 L475.5,506.6 L478.0,506.8 L480.5,506.6 L483.0,507.3 L485.5,508.7 L488.0,508.8 L490.5,509.1 L493.0,509.6 L495.5,511.1 L496.0,510.6" fill="none" stroke="#068C45" stroke-opacity="0.32" stroke-width="1.6" stroke-linejoin="round"/><path d="M1371.0,463.2 L1373.0,464.1 L1375.5,465.4 L1378.0,465.6 L1380.5,465.4 L1383.0,464.8 L1385.5,465.4 L1388.0,466.9 L1390.5,467.8 L1393.0,467.6 L1395.5,467.4 L1398.0,467.8 L1400.5,468.6 L1403.0,468.5 L1405.5,467.6 L1408.0,467.8 L1410.5,469.1 L1413.0,470.9 L1415.5,470.5 L1418.0,470.5 L1420.5,469.9 L1423.0,472.4 L1425.5,472.9 L1428.0,473.7 L1430.5,473.6 L1433.0,473.6 L1435.5,474.9 L1438.0,474.9 L1440.5,475.2 L1443.0,475.7 L1445.5,475.5 L1448.0,477.1 L1450.5,477.2 L1453.0,477.7 L1455.5,476.5 L1458.0,477.6 L1460.5,479.1 L1463.0,479.6 L1465.5,480.0 L1468.0,479.7 L1470.5,480.5 L1473.0,480.0 L1475.5,480.1 L1478.0,481.2 L1480.5,481.6 L1483.0,481.2 L1485.5,481.8 L1488.0,482.5 L1490.5,483.1 L1493.0,482.3 L1495.5,481.8 L1498.0,482.6 L1500.5,483.3 L1503.0,484.2 L1505.5,484.2 L1508.0,483.9 L1510.5,484.5 L1513.0,485.1 L1515.5,486.8 L1518.0,486.4 L1520.5,487.1 L1523.0,486.4 L1525.5,486.7 L1528.0,487.3 L1530.5,487.8 L1533.0,488.3 L1535.5,488.0 L1538.0,488.9 L1540.5,489.3 L1543.0,490.6 L1545.5,490.9 L1548.0,491.9 L1550.5,492.4 L1553.0,493.4 L1555.5,494.3 L1558.0,494.2 L1560.5,494.8 L1563.0,495.7 L1565.5,495.7 L1568.0,495.3 L1570.5,495.0 L1573.0,495.7 L1575.5,495.6 L1578.0,496.7 L1580.5,497.4 L1583.0,498.6 L1585.5,499.4 L1588.0,499.6 L1590.5,500.0 L1593.0,500.0 L1595.5,500.6 L1598.0,501.1 L1600.5,501.8 L1603.0,502.5 L1605.5,503.7 L1608.0,503.4 L1610.5,503.8 L1613.0,502.8 L1615.5,503.3 L1618.0,503.2 L1620.5,504.8 L1623.0,505.5 L1625.5,506.3 L1628.0,506.8 L1630.5,507.4 L1633.0,507.8 L1635.5,506.9 L1638.0,505.9 L1640.5,505.8 L1643.0,506.3 L1645.5,506.9 L1648.0,507.1 L1650.5,506.8 L1653.0,508.0 L1655.5,507.9 L1658.0,508.7 L1660.5,508.5 L1663.0,508.6 L1665.5,509.6 L1668.0,510.1 L1670.5,510.9 L1673.0,510.3 L1675.5,510.0 L1678.0,509.5 L1680.5,510.9 L1683.0,511.5 L1685.5,512.3 L1688.0,511.4 L1690.5,511.9 L1693.0,513.1 L1695.5,513.1 L1698.0,512.8 L1700.5,511.5 L1703.0,512.5 L1705.5,513.1 L1708.0,515.1 L1710.5,514.9 L1713.0,514.8 L1715.5,513.7 L1718.0,514.3 L1720.5,514.0 L1723.0,514.8 L1725.5,514.7 L1728.0,515.4 L1730.5,514.9 L1733.0,515.4 L1735.5,516.7 L1738.0,517.1 L1740.5,517.0 L1743.0,517.2 L1745.5,517.3 L1748.0,517.1 L1750.5,516.0 L1753.0,516.4 L1755.5,516.6 L1758.0,517.2 L1760.5,517.1 L1763.0,516.6 L1765.5,516.4 L1768.0,516.5 L1770.5,517.7 L1773.0,518.3 L1775.5,518.5 L1778.0,518.7 L1780.5,519.4 L1783.0,519.6 L1785.5,519.2 L1788.0,519.5 L1790.5,520.1 L1793.0,519.2 L1795.5,518.0 L1798.0,516.8 L1800.5,516.6 L1803.0,515.0 L1805.5,514.4 L1808.0,513.0 L1810.5,511.9 L1813.0,510.9 L1815.5,510.1 L1818.0,509.4 L1820.5,510.2 L1823.0,509.7 L1825.5,510.2 L1828.0,509.6 L1830.5,510.8 L1833.0,511.9 L1835.5,512.3 L1838.0,513.0 L1840.5,513.3 L1843.0,514.3 L1845.5,515.3 L1848.0,515.6 L1850.5,514.2 L1853.0,513.2 L1855.5,513.0 L1858.0,514.6 L1860.5,515.2 L1863.0,515.5 L1865.5,515.3 L1868.0,515.5" fill="none" stroke="#068C45" stroke-opacity="0.32" stroke-width="1.6" stroke-linejoin="round"/><path d="M496.0,510.6 L498.0,511.1 L500.5,510.5 L503.0,511.6 L505.5,512.1 L508.0,511.8 L510.5,511.7 L513.0,511.1 L515.5,512.6 L518.0,512.2 L520.5,512.0 L523.0,511.1 L525.5,511.9 L528.0,512.5 L530.5,513.2 L533.0,512.7 L535.5,512.2 L538.0,512.8 L540.5,513.6 L543.0,514.0 L545.5,514.2 L548.0,513.5 L550.5,511.9 L553.0,512.4 L555.5,514.4 L558.0,515.4 L560.5,514.7 L563.0,514.2 L565.5,515.9 L568.0,516.9 L570.5,517.7 L573.0,517.2 L575.5,517.3 L578.0,516.8 L580.5,516.8 L583.0,517.5 L585.5,517.8 L588.0,518.9 L590.5,518.0 L593.0,518.4 L595.5,517.2 L598.0,517.9 L600.5,515.6 L603.0,515.8 L605.5,516.3 L608.0,518.1 L610.5,519.2 L613.0,517.7 L615.5,519.4 L618.0,520.0 L620.5,521.4 L623.0,520.8 L625.5,520.9 L628.0,522.2 L630.5,522.3 L633.0,521.2 L635.5,520.2 L638.0,521.2 L640.5,523.0 L643.0,523.2 L645.5,523.1 L648.0,523.1 L650.5,524.2 L653.0,522.8 L655.5,521.8 L658.0,518.9 L660.5,517.0 L663.0,515.1 L665.5,513.2 L668.0,511.4 L670.5,511.5 L673.0,509.6 L675.5,509.4 L678.0,509.3 L680.5,508.6 L683.0,507.5 L685.5,508.8 L688.0,510.2 L690.5,513.3 L693.0,512.3 L695.5,512.7 L698.0,512.4 L700.5,513.2 L703.0,512.0 L705.5,512.7 L708.0,511.1 L710.5,512.7 L713.0,514.2 L715.5,515.5 L718.0,517.3 L720.5,514.3 L723.0,515.1 L725.5,513.5 L728.0,514.5 L730.5,513.0 L733.0,512.0 L735.5,511.8 L738.0,510.2 L740.5,509.5 L743.0,509.1 L745.5,509.4 L748.0,508.6 L750.5,505.7 L753.0,505.8 L755.5,505.7 L758.0,506.5 L760.5,505.3 L763.0,507.5 L765.5,506.0 L768.0,502.7 L770.5,499.2 L773.0,499.0 L775.5,501.6 L778.0,497.9 L780.5,499.0 L783.0,497.9 L785.5,499.3 L788.0,492.3 L790.5,491.4 L793.0,489.4 L795.5,493.6 L798.0,490.0 L800.5,485.6 L803.0,481.0 L805.5,477.9 L808.0,479.9 L810.5,475.3 L813.0,476.2 L815.5,473.6 L818.0,475.3 L820.5,473.3 L823.0,470.7 L825.5,469.6 L828.0,468.4 L830.5,470.1 L833.0,468.4 L835.5,462.6 L838.0,460.9 L840.5,464.6 L843.0,470.9 L845.5,471.8 L848.0,468.1 L850.5,464.5 L853.0,457.6 L855.5,457.4 L858.0,460.5 L860.5,464.7 L863.0,462.3 L865.5,459.1 L868.0,456.1 L870.5,454.4 L873.0,451.9 L875.5,451.7 L878.0,446.6 L880.5,443.1 L883.0,442.1 L885.5,442.2 L888.0,435.2 L890.5,432.2 L893.0,424.7 L895.5,435.8 L898.0,435.9 L900.5,443.0 L903.0,433.6 L905.5,426.6 L908.0,422.9 L910.5,424.0 L913.0,424.1 L915.5,424.2 L918.0,425.2 L920.5,428.3 L923.0,423.8 L925.5,414.2 L928.0,411.4 L930.5,411.5 L933.0,418.4 L935.5,422.4 L938.0,428.4 L940.5,426.9 L943.0,424.4 L945.5,424.2 L948.0,423.3 L950.5,420.6 L953.0,418.0 L955.5,417.6 L958.0,415.1 L960.5,410.0 L963.0,409.9 L965.5,409.4 L968.0,414.0 L970.5,412.8 L973.0,419.0 L975.5,420.1 L978.0,417.2 L980.5,415.8 L983.0,410.6 L985.5,418.6 L988.0,416.6 L990.5,417.6 L993.0,415.3 L995.5,411.8 L998.0,412.8 L1000.5,411.5 L1003.0,411.5 L1005.5,410.4 L1008.0,404.9 L1010.5,405.8 L1013.0,399.6 L1015.5,403.4 L1018.0,401.9 L1020.5,406.7 L1023.0,401.7 L1025.5,408.5 L1028.0,404.3 L1030.5,405.3 L1033.0,392.2 L1035.5,396.2 L1038.0,393.0 L1040.5,397.5 L1043.0,390.7 L1045.5,393.6 L1048.0,389.9 L1050.5,396.2 L1053.0,394.8 L1055.5,393.8 L1058.0,392.8 L1060.5,390.5 L1063.0,390.8 L1065.5,392.2 L1068.0,390.6 L1070.5,396.5 L1073.0,393.4 L1075.5,396.8 L1078.0,395.7 L1080.5,399.3 L1083.0,399.8 L1085.5,398.0 L1088.0,398.0 L1090.5,401.7 L1093.0,401.6 L1095.5,396.2 L1098.0,390.5 L1100.5,388.3 L1103.0,392.3 L1105.5,396.5 L1108.0,398.8 L1110.5,400.5 L1113.0,397.3 L1115.5,394.7 L1118.0,388.7 L1120.5,395.2 L1123.0,390.1 L1125.5,392.4 L1128.0,388.0 L1130.5,394.6 L1133.0,401.1 L1135.5,403.5 L1138.0,405.8 L1140.5,395.9 L1143.0,394.0 L1145.5,390.6 L1148.0,393.6 L1150.5,392.8 L1153.0,392.6 L1155.5,394.6 L1158.0,399.1 L1160.5,403.9 L1163.0,402.8 L1165.5,391.9 L1168.0,392.2 L1170.5,395.0 L1173.0,400.5 L1175.5,395.8 L1178.0,394.7 L1180.5,392.9 L1183.0,397.0 L1185.5,391.7 L1188.0,391.5 L1190.5,389.3 L1193.0,388.2 L1195.5,391.2 L1198.0,392.9 L1200.5,393.7 L1203.0,397.8 L1205.5,395.7 L1208.0,402.7 L1210.5,401.7 L1213.0,403.3 L1215.5,401.3 L1218.0,397.5 L1220.5,399.2 L1223.0,401.9 L1225.5,411.8 L1228.0,417.1 L1230.5,418.3 L1233.0,419.5 L1235.5,421.2 L1238.0,424.6 L1240.5,426.3 L1243.0,427.0 L1245.5,427.1 L1248.0,426.7 L1250.5,426.5 L1253.0,426.4 L1255.5,427.0 L1258.0,427.1 L1260.5,427.7 L1263.0,427.6 L1265.5,428.7 L1268.0,430.6 L1270.5,432.3 L1273.0,432.1 L1275.5,432.8 L1278.0,433.4 L1280.5,435.2 L1283.0,436.2 L1285.5,436.2 L1288.0,436.5 L1290.5,436.1 L1293.0,436.9 L1295.5,439.0 L1298.0,440.7 L1300.5,440.9 L1303.0,440.7 L1305.5,440.6 L1308.0,443.2 L1310.5,443.8 L1313.0,444.8 L1315.5,445.0 L1318.0,446.0 L1320.5,447.0 L1323.0,447.6 L1325.5,448.1 L1328.0,449.2 L1330.5,449.5 L1333.0,450.3 L1335.5,450.8 L1338.0,452.0 L1340.5,453.2 L1343.0,453.4 L1345.5,454.2 L1348.0,454.2 L1350.5,456.0 L1353.0,456.8 L1355.5,458.0 L1358.0,458.8 L1360.5,459.0 L1363.0,460.0 L1365.5,460.3 L1368.0,461.8 L1370.5,462.3 L1371.0,463.2" fill="none" stroke="#068C45" stroke-width="2.0" stroke-linejoin="round"/><path d="M53.0,432.4 L55.5,434.8 L58.0,437.1 L60.5,439.0 L63.0,437.5 L65.5,436.8 L68.0,435.2 L70.5,438.0 L73.0,438.7 L75.5,440.1 L78.0,439.7 L80.5,442.6 L83.0,445.1 L85.5,445.1 L88.0,443.7 L90.5,442.5 L93.0,443.0 L95.5,444.2 L98.0,448.0 L100.5,451.4 L103.0,452.0 L105.5,450.5 L108.0,450.1 L110.5,451.6 L113.0,451.5 L115.5,450.6 L118.0,452.0 L120.5,454.1 L123.0,457.5 L125.5,456.9 L128.0,458.6 L130.5,457.7 L133.0,458.6 L135.5,459.4 L138.0,461.3 L140.5,461.3 L143.0,461.6 L145.5,461.1 L148.0,461.2 L150.5,461.7 L153.0,463.9 L155.5,466.2 L158.0,465.7 L160.5,466.1 L163.0,466.7 L165.5,468.0 L168.0,466.5 L170.5,467.1 L173.0,468.3 L175.5,470.7 L178.0,469.2 L180.5,468.0 L183.0,468.7 L185.5,470.8 L188.0,472.4 L190.5,472.0 L193.0,472.1 L195.5,471.8 L198.0,472.1 L200.5,471.7 L203.0,472.5 L205.5,472.8 L208.0,474.3 L210.5,475.0 L213.0,475.1 L215.5,476.0 L218.0,474.6 L220.5,474.9 L223.0,474.1 L225.5,475.1 L228.0,473.1 L230.5,473.5 L233.0,473.9 L235.5,476.4 L238.0,474.9 L240.5,474.3 L243.0,473.9 L245.5,475.3 L248.0,476.8 L250.5,476.9 L253.0,478.3 L255.5,478.3 L258.0,478.3 L260.5,477.5 L263.0,477.4 L265.5,478.6 L268.0,480.1 L270.5,480.7 L273.0,481.5 L275.5,480.6 L278.0,479.6 L280.5,479.4 L283.0,480.9 L285.5,482.6 L288.0,482.6 L290.5,482.7 L293.0,484.0 L295.5,484.6 L298.0,484.1 L300.5,483.0 L303.0,484.1 L305.5,484.6 L308.0,485.4 L310.5,485.2 L313.0,485.9 L315.5,485.3 L318.0,485.3 L320.5,485.3 L323.0,486.1 L325.5,486.3 L328.0,485.8 L330.5,485.6 L333.0,485.0 L335.5,485.8 L338.0,485.7 L340.5,486.3 L343.0,485.5 L345.5,485.9 L348.0,485.7 L350.5,486.3 L353.0,486.6 L355.5,486.8 L358.0,486.9 L360.5,486.2 L363.0,487.3 L365.5,487.5 L368.0,488.9 L370.5,488.3 L373.0,489.6 L375.5,489.7 L378.0,490.8 L380.5,491.3 L383.0,493.0 L385.5,493.8 L388.0,493.9 L390.5,493.0 L393.0,493.4 L395.5,494.2 L398.0,495.6 L400.5,495.8 L403.0,495.7 L405.5,495.4 L408.0,496.0 L410.5,497.1 L413.0,497.2 L415.5,497.6 L418.0,497.5 L420.5,498.9 L423.0,499.0 L425.5,499.9 L428.0,500.4 L430.5,501.2 L433.0,500.3 L435.5,500.7 L438.0,500.7 L440.5,501.2 L443.0,501.6 L445.5,501.3 L448.0,502.8 L450.5,503.7 L453.0,504.6 L455.5,505.1 L458.0,504.9 L460.5,505.9 L463.0,505.2 L465.5,505.7 L468.0,505.8 L470.5,507.4 L473.0,507.5 L475.5,508.4 L478.0,508.6 L480.5,509.4 L483.0,510.0 L485.5,510.4 L488.0,511.0 L490.5,510.8 L493.0,511.4 L495.5,511.1 L496.0,511.4" fill="none" stroke="#068C45" stroke-opacity="0.32" stroke-width="1.6" stroke-linejoin="round"/><path d="M1371.0,466.8 L1373.0,466.3 L1375.5,466.9 L1378.0,467.1 L1380.5,468.2 L1383.0,469.2 L1385.5,470.2 L1388.0,471.0 L1390.5,471.6 L1393.0,470.9 L1395.5,471.3 L1398.0,471.3 L1400.5,472.8 L1403.0,472.5 L1405.5,473.3 L1408.0,474.3 L1410.5,475.8 L1413.0,476.0 L1415.5,476.3 L1418.0,476.7 L1420.5,478.0 L1423.0,478.8 L1425.5,478.9 L1428.0,478.6 L1430.5,478.6 L1433.0,479.1 L1435.5,479.4 L1438.0,480.1 L1440.5,480.2 L1443.0,480.5 L1445.5,480.8 L1448.0,481.4 L1450.5,482.0 L1453.0,481.2 L1455.5,482.1 L1458.0,482.5 L1460.5,483.6 L1463.0,483.7 L1465.5,484.1 L1468.0,484.2 L1470.5,485.1 L1473.0,485.1 L1475.5,486.1 L1478.0,486.3 L1480.5,486.6 L1483.0,486.5 L1485.5,485.6 L1488.0,486.6 L1490.5,486.7 L1493.0,486.8 L1495.5,487.2 L1498.0,488.1 L1500.5,488.5 L1503.0,488.7 L1505.5,488.7 L1508.0,490.5 L1510.5,491.0 L1513.0,491.0 L1515.5,490.0 L1518.0,489.1 L1520.5,489.7 L1523.0,490.1 L1525.5,491.1 L1528.0,491.4 L1530.5,491.3 L1533.0,491.2 L1535.5,492.3 L1538.0,494.0 L1540.5,494.9 L1543.0,494.8 L1545.5,494.8 L1548.0,495.4 L1550.5,495.3 L1553.0,496.4 L1555.5,496.6 L1558.0,498.0 L1560.5,497.1 L1563.0,498.1 L1565.5,499.1 L1568.0,499.8 L1570.5,501.0 L1573.0,501.1 L1575.5,502.4 L1578.0,501.6 L1580.5,502.5 L1583.0,503.5 L1585.5,505.0 L1588.0,504.9 L1590.5,505.0 L1593.0,505.7 L1595.5,506.0 L1598.0,507.3 L1600.5,506.8 L1603.0,507.4 L1605.5,506.9 L1608.0,508.6 L1610.5,508.5 L1613.0,508.8 L1615.5,508.7 L1618.0,509.7 L1620.5,511.3 L1623.0,512.0 L1625.5,512.4 L1628.0,511.9 L1630.5,510.6 L1633.0,510.1 L1635.5,509.9 L1638.0,510.8 L1640.5,510.7 L1643.0,510.7 L1645.5,510.6 L1648.0,511.8 L1650.5,512.6 L1653.0,513.0 L1655.5,512.6 L1658.0,512.7 L1660.5,512.8 L1663.0,513.0 L1665.5,512.3 L1668.0,513.1 L1670.5,513.8 L1673.0,514.8 L1675.5,515.0 L1678.0,514.9 L1680.5,515.8 L1683.0,515.9 L1685.5,515.3 L1688.0,514.2 L1690.5,514.6 L1693.0,515.8 L1695.5,516.8 L1698.0,517.0 L1700.5,516.9 L1703.0,516.1 L1705.5,515.6 L1708.0,515.0 L1710.5,515.7 L1713.0,515.6 L1715.5,516.6 L1718.0,516.8 L1720.5,516.8 L1723.0,517.2 L1725.5,517.8 L1728.0,518.2 L1730.5,518.2 L1733.0,518.4 L1735.5,519.0 L1738.0,519.5 L1740.5,519.5 L1743.0,520.2 L1745.5,520.1 L1748.0,520.2 L1750.5,520.1 L1753.0,520.6 L1755.5,520.9 L1758.0,520.7 L1760.5,520.3 L1763.0,520.2 L1765.5,520.3 L1768.0,520.9 L1770.5,521.3 L1773.0,521.7 L1775.5,521.8 L1778.0,522.0 L1780.5,522.9 L1783.0,523.6 L1785.5,523.5 L1788.0,523.2 L1790.5,522.7 L1793.0,522.1 L1795.5,520.6 L1798.0,519.4 L1800.5,517.7 L1803.0,515.6 L1805.5,514.8 L1808.0,514.7 L1810.5,514.2 L1813.0,513.1 L1815.5,511.4 L1818.0,511.2 L1820.5,510.9 L1823.0,511.2 L1825.5,511.3 L1828.0,510.9 L1830.5,511.3 L1833.0,511.6 L1835.5,511.8 L1838.0,512.2 L1840.5,512.4 L1843.0,513.8 L1845.5,513.9 L1848.0,514.0 L1850.5,513.7 L1853.0,513.6 L1855.5,513.8 L1858.0,515.4 L1860.5,516.5 L1863.0,516.7 L1865.5,515.9 L1868.0,515.6" fill="none" stroke="#068C45" stroke-opacity="0.32" stroke-width="1.6" stroke-linejoin="round"/><path d="M496.0,511.4 L498.0,512.1 L500.5,512.6 L503.0,513.0 L505.5,512.8 L508.0,512.6 L510.5,512.7 L513.0,513.5 L515.5,514.1 L518.0,513.3 L520.5,513.0 L523.0,513.2 L525.5,515.6 L528.0,515.7 L530.5,516.4 L533.0,515.3 L535.5,515.8 L538.0,515.8 L540.5,515.9 L543.0,516.1 L545.5,516.2 L548.0,517.8 L550.5,517.5 L553.0,518.2 L555.5,517.4 L558.0,517.5 L560.5,518.9 L563.0,518.4 L565.5,520.4 L568.0,518.8 L570.5,520.5 L573.0,521.3 L575.5,521.1 L578.0,520.6 L580.5,520.3 L583.0,522.0 L585.5,522.8 L588.0,522.3 L590.5,521.9 L593.0,522.6 L595.5,523.9 L598.0,524.6 L600.5,524.9 L603.0,525.0 L605.5,526.7 L608.0,526.5 L610.5,526.2 L613.0,524.8 L615.5,525.0 L618.0,524.8 L620.5,525.0 L623.0,524.6 L625.5,523.7 L628.0,523.9 L630.5,525.4 L633.0,527.8 L635.5,528.2 L638.0,528.2 L640.5,528.1 L643.0,529.3 L645.5,529.7 L648.0,529.5 L650.5,530.6 L653.0,530.8 L655.5,530.1 L658.0,523.9 L660.5,520.6 L663.0,517.0 L665.5,515.8 L668.0,513.1 L670.5,514.1 L673.0,513.5 L675.5,515.2 L678.0,513.7 L680.5,514.4 L683.0,513.2 L685.5,514.4 L688.0,513.0 L690.5,512.8 L693.0,512.7 L695.5,511.1 L698.0,512.0 L700.5,512.5 L703.0,513.9 L705.5,513.5 L708.0,515.7 L710.5,517.1 L713.0,517.0 L715.5,516.6 L718.0,515.6 L720.5,516.0 L723.0,513.9 L725.5,514.6 L728.0,515.6 L730.5,516.9 L733.0,516.6 L735.5,515.7 L738.0,514.5 L740.5,514.2 L743.0,513.6 L745.5,512.1 L748.0,511.0 L750.5,510.4 L753.0,509.4 L755.5,510.0 L758.0,509.1 L760.5,508.5 L763.0,506.6 L765.5,505.5 L768.0,505.7 L770.5,506.0 L773.0,505.7 L775.5,504.0 L778.0,505.3 L780.5,506.4 L783.0,507.4 L785.5,506.0 L788.0,504.4 L790.5,503.1 L793.0,500.9 L795.5,504.5 L798.0,506.4 L800.5,507.8 L803.0,501.0 L805.5,499.6 L808.0,501.5 L810.5,502.7 L813.0,503.3 L815.5,500.4 L818.0,500.4 L820.5,501.0 L823.0,497.9 L825.5,497.0 L828.0,490.8 L830.5,495.6 L833.0,493.3 L835.5,493.4 L838.0,488.3 L840.5,484.4 L843.0,482.3 L845.5,474.7 L848.0,474.2 L850.5,471.7 L853.0,473.6 L855.5,471.6 L858.0,469.5 L860.5,465.8 L863.0,464.2 L865.5,462.9 L868.0,464.6 L870.5,465.2 L873.0,465.4 L875.5,458.2 L878.0,456.3 L880.5,451.3 L883.0,453.7 L885.5,451.2 L888.0,451.8 L890.5,447.8 L893.0,444.5 L895.5,450.4 L898.0,450.7 L900.5,450.7 L903.0,446.5 L905.5,447.1 L908.0,449.3 L910.5,442.2 L913.0,436.8 L915.5,441.7 L918.0,443.7 L920.5,444.7 L923.0,434.8 L925.5,436.3 L928.0,432.6 L930.5,431.7 L933.0,427.7 L935.5,431.5 L938.0,430.0 L940.5,427.3 L943.0,421.8 L945.5,414.4 L948.0,418.4 L950.5,416.5 L953.0,421.9 L955.5,423.5 L958.0,426.3 L960.5,428.9 L963.0,423.4 L965.5,426.3 L968.0,424.5 L970.5,423.4 L973.0,425.0 L975.5,424.0 L978.0,421.4 L980.5,416.5 L983.0,418.5 L985.5,418.9 L988.0,421.9 L990.5,422.3 L993.0,431.3 L995.5,427.0 L998.0,426.5 L1000.5,415.3 L1003.0,414.8 L1005.5,412.1 L1008.0,416.9 L1010.5,416.8 L1013.0,415.1 L1015.5,411.1 L1018.0,408.9 L1020.5,408.9 L1023.0,411.1 L1025.5,413.0 L1028.0,413.9 L1030.5,414.5 L1033.0,406.5 L1035.5,401.0 L1038.0,396.1 L1040.5,398.5 L1043.0,403.2 L1045.5,406.1 L1048.0,407.8 L1050.5,405.4 L1053.0,407.2 L1055.5,406.7 L1058.0,405.7 L1060.5,405.0 L1063.0,407.5 L1065.5,412.7 L1068.0,411.4 L1070.5,412.5 L1073.0,407.2 L1075.5,403.7 L1078.0,401.8 L1080.5,395.9 L1083.0,399.5 L1085.5,402.1 L1088.0,409.6 L1090.5,407.5 L1093.0,407.6 L1095.5,407.0 L1098.0,410.2 L1100.5,413.1 L1103.0,415.0 L1105.5,414.6 L1108.0,409.6 L1110.5,408.0 L1113.0,405.8 L1115.5,404.4 L1118.0,406.5 L1120.5,401.0 L1123.0,400.3 L1125.5,399.3 L1128.0,401.7 L1130.5,402.5 L1133.0,398.9 L1135.5,402.8 L1138.0,405.8 L1140.5,412.1 L1143.0,412.5 L1145.5,408.3 L1148.0,405.1 L1150.5,405.6 L1153.0,411.9 L1155.5,405.3 L1158.0,405.0 L1160.5,396.0 L1163.0,404.1 L1165.5,404.3 L1168.0,410.9 L1170.5,411.4 L1173.0,411.2 L1175.5,408.0 L1178.0,406.5 L1180.5,408.8 L1183.0,410.3 L1185.5,409.4 L1188.0,402.6 L1190.5,406.2 L1193.0,404.7 L1195.5,406.0 L1198.0,401.4 L1200.5,400.5 L1203.0,402.1 L1205.5,407.2 L1208.0,412.2 L1210.5,417.2 L1213.0,418.0 L1215.5,413.4 L1218.0,410.7 L1220.5,411.2 L1223.0,419.9 L1225.5,417.9 L1228.0,415.3 L1230.5,415.5 L1233.0,419.7 L1235.5,422.8 L1238.0,425.3 L1240.5,427.1 L1243.0,427.1 L1245.5,427.8 L1248.0,429.5 L1250.5,432.8 L1253.0,434.6 L1255.5,435.6 L1258.0,435.9 L1260.5,435.7 L1263.0,435.1 L1265.5,435.7 L1268.0,437.7 L1270.5,440.0 L1273.0,442.5 L1275.5,442.4 L1278.0,441.5 L1280.5,441.5 L1283.0,443.0 L1285.5,444.1 L1288.0,443.4 L1290.5,443.6 L1293.0,445.5 L1295.5,446.5 L1298.0,447.0 L1300.5,446.9 L1303.0,447.6 L1305.5,447.7 L1308.0,448.9 L1310.5,450.0 L1313.0,451.0 L1315.5,450.2 L1318.0,452.0 L1320.5,452.6 L1323.0,454.5 L1325.5,453.7 L1328.0,455.1 L1330.5,455.0 L1333.0,456.3 L1335.5,456.7 L1338.0,458.6 L1340.5,458.7 L1343.0,459.1 L1345.5,459.2 L1348.0,461.5 L1350.5,461.7 L1353.0,462.6 L1355.5,462.0 L1358.0,463.5 L1360.5,464.4 L1363.0,465.4 L1365.5,466.0 L1368.0,466.5 L1370.5,466.9 L1371.0,466.8" fill="none" stroke="#068C45" stroke-width="2.0" stroke-linejoin="round"/><path d="M53.0,405.4 L55.5,404.3 L58.0,403.7 L60.5,401.2 L63.0,399.7 L65.5,399.0 L68.0,397.8 L70.5,396.8 L73.0,395.1 L75.5,396.2 L78.0,395.8 L80.5,395.4 L83.0,396.2 L85.5,398.7 L88.0,399.6 L90.5,401.2 L93.0,403.4 L95.5,405.4 L98.0,406.9 L100.5,406.1 L103.0,408.7 L105.5,408.6 L108.0,409.9 L110.5,411.1 L113.0,414.6 L115.5,417.6 L118.0,419.8 L120.5,422.1 L123.0,423.9 L125.5,425.8 L128.0,425.9 L130.5,427.0 L133.0,430.4 L135.5,434.3 L138.0,436.6 L140.5,436.6 L143.0,437.3 L145.5,438.2 L148.0,440.6 L150.5,441.4 L153.0,443.3 L155.5,445.1 L158.0,445.5 L160.5,447.3 L163.0,446.3 L165.5,448.7 L168.0,450.0 L170.5,452.3 L173.0,454.4 L175.5,455.4 L178.0,457.1 L180.5,457.8 L183.0,459.5 L185.5,460.2 L188.0,462.9 L190.5,463.8 L193.0,466.2 L195.5,466.0 L198.0,467.1 L200.5,467.8 L203.0,468.6 L205.5,468.1 L208.0,468.2 L210.5,466.9 L213.0,468.7 L215.5,468.6 L218.0,470.0 L220.5,470.3 L223.0,470.8 L225.5,473.2 L228.0,473.4 L230.5,475.1 L233.0,475.2 L235.5,475.6 L238.0,474.6 L240.5,475.0 L243.0,475.5 L245.5,476.3 L248.0,475.7 L250.5,475.5 L253.0,475.5 L255.5,475.4 L258.0,475.5 L260.5,475.9 L263.0,477.5 L265.5,479.4 L268.0,479.8 L270.5,479.2 L273.0,479.0 L275.5,479.9 L278.0,480.3 L280.5,480.1 L283.0,479.5 L285.5,480.2 L288.0,481.9 L290.5,482.1 L293.0,480.9 L295.5,480.4 L298.0,480.9 L300.5,482.2 L303.0,482.6 L305.5,483.0 L308.0,482.6 L310.5,481.4 L313.0,481.6 L315.5,482.0 L318.0,483.2 L320.5,482.9 L323.0,483.5 L325.5,483.0 L328.0,483.6 L330.5,483.8 L333.0,485.0 L335.5,486.1 L338.0,486.4 L340.5,486.0 L343.0,486.5 L345.5,487.0 L348.0,488.0 L350.5,487.6 L353.0,488.3 L355.5,488.8 L358.0,489.1 L360.5,489.0 L363.0,488.4 L365.5,488.0 L368.0,487.8 L370.5,488.5 L373.0,489.1 L375.5,489.5 L378.0,489.7 L380.5,489.8 L383.0,489.2 L385.5,490.1 L388.0,491.1 L390.5,491.9 L393.0,492.3 L395.5,492.7 L398.0,493.7 L400.5,493.0 L403.0,492.8 L405.5,492.9 L408.0,495.1 L410.5,495.8 L413.0,496.4 L415.5,495.6 L418.0,496.3 L420.5,497.1 L423.0,497.2 L425.5,496.5 L428.0,497.2 L430.5,498.7 L433.0,500.3 L435.5,501.0 L438.0,501.9 L440.5,501.7 L443.0,501.6 L445.5,502.2 L448.0,503.4 L450.5,503.8 L453.0,504.3 L455.5,505.0 L458.0,505.0 L460.5,504.7 L463.0,504.7 L465.5,506.1 L468.0,506.1 L470.5,507.7 L473.0,507.1 L475.5,508.5 L478.0,507.8 L480.5,509.0 L483.0,510.0 L485.5,511.8 L488.0,513.1 L490.5,513.0 L493.0,513.0 L495.5,513.0 L496.0,513.4" fill="none" stroke="#068C45" stroke-opacity="0.32" stroke-width="1.6" stroke-linejoin="round"/><path d="M1371.0,473.9 L1373.0,474.4 L1375.5,474.2 L1378.0,474.7 L1380.5,474.6 L1383.0,475.0 L1385.5,475.2 L1388.0,476.7 L1390.5,477.1 L1393.0,477.8 L1395.5,477.5 L1398.0,478.1 L1400.5,479.4 L1403.0,479.3 L1405.5,479.9 L1408.0,479.7 L1410.5,480.3 L1413.0,480.4 L1415.5,480.7 L1418.0,481.7 L1420.5,481.9 L1423.0,482.1 L1425.5,481.6 L1428.0,482.5 L1430.5,483.3 L1433.0,484.0 L1435.5,483.3 L1438.0,483.5 L1440.5,483.1 L1443.0,483.8 L1445.5,483.9 L1448.0,483.3 L1450.5,483.7 L1453.0,483.9 L1455.5,484.3 L1458.0,484.3 L1460.5,485.1 L1463.0,485.7 L1465.5,486.2 L1468.0,485.6 L1470.5,485.6 L1473.0,485.1 L1475.5,485.2 L1478.0,486.3 L1480.5,487.2 L1483.0,487.3 L1485.5,487.3 L1488.0,487.1 L1490.5,487.2 L1493.0,487.2 L1495.5,487.0 L1498.0,486.8 L1500.5,487.3 L1503.0,487.3 L1505.5,488.8 L1508.0,488.1 L1510.5,489.5 L1513.0,489.7 L1515.5,490.8 L1518.0,490.4 L1520.5,491.0 L1523.0,491.8 L1525.5,492.9 L1528.0,493.5 L1530.5,494.5 L1533.0,495.1 L1535.5,495.8 L1538.0,495.5 L1540.5,496.5 L1543.0,497.3 L1545.5,499.4 L1548.0,500.2 L1550.5,500.7 L1553.0,500.8 L1555.5,500.5 L1558.0,501.4 L1560.5,501.1 L1563.0,501.9 L1565.5,502.4 L1568.0,503.3 L1570.5,504.7 L1573.0,504.2 L1575.5,504.8 L1578.0,504.6 L1580.5,505.7 L1583.0,505.3 L1585.5,506.5 L1588.0,507.3 L1590.5,508.2 L1593.0,507.9 L1595.5,508.1 L1598.0,509.9 L1600.5,511.2 L1603.0,512.1 L1605.5,512.5 L1608.0,512.6 L1610.5,511.7 L1613.0,510.6 L1615.5,509.6 L1618.0,508.7 L1620.5,507.0 L1623.0,507.2 L1625.5,507.0 L1628.0,507.9 L1630.5,508.2 L1633.0,508.4 L1635.5,508.5 L1638.0,509.2 L1640.5,509.6 L1643.0,509.5 L1645.5,509.7 L1648.0,510.6 L1650.5,511.3 L1653.0,511.5 L1655.5,511.0 L1658.0,511.4 L1660.5,512.1 L1663.0,513.0 L1665.5,513.3 L1668.0,513.0 L1670.5,512.2 L1673.0,512.5 L1675.5,513.1 L1678.0,514.4 L1680.5,515.3 L1683.0,515.5 L1685.5,515.7 L1688.0,514.6 L1690.5,515.2 L1693.0,515.4 L1695.5,516.6 L1698.0,516.7 L1700.5,516.7 L1703.0,517.0 L1705.5,516.7 L1708.0,517.0 L1710.5,517.1 L1713.0,517.2 L1715.5,516.7 L1718.0,516.7 L1720.5,517.3 L1723.0,518.2 L1725.5,518.6 L1728.0,518.4 L1730.5,518.6 L1733.0,519.0 L1735.5,519.4 L1738.0,519.3 L1740.5,518.7 L1743.0,519.4 L1745.5,520.5 L1748.0,520.6 L1750.5,520.8 L1753.0,520.6 L1755.5,521.2 L1758.0,521.0 L1760.5,520.4 L1763.0,520.6 L1765.5,521.0 L1768.0,521.9 L1770.5,522.5 L1773.0,523.0 L1775.5,523.1 L1778.0,522.8 L1780.5,523.2 L1783.0,523.9 L1785.5,524.3 L1788.0,524.6 L1790.5,524.6 L1793.0,523.8 L1795.5,522.4 L1798.0,519.8 L1800.5,517.7 L1803.0,515.8 L1805.5,515.2 L1808.0,514.0 L1810.5,512.9 L1813.0,511.7 L1815.5,510.2 L1818.0,508.6 L1820.5,509.1 L1823.0,510.6 L1825.5,510.4 L1828.0,510.5 L1830.5,510.0 L1833.0,510.4 L1835.5,510.6 L1838.0,510.4 L1840.5,511.2 L1843.0,512.3 L1845.5,513.4 L1848.0,514.3 L1850.5,514.2 L1853.0,514.5 L1855.5,514.9 L1858.0,514.5 L1860.5,514.6 L1863.0,514.9 L1865.5,515.4 L1868.0,515.7" fill="none" stroke="#068C45" stroke-opacity="0.32" stroke-width="1.6" stroke-linejoin="round"/><path d="M496.0,513.4 L498.0,513.5 L500.5,514.2 L503.0,514.4 L505.5,515.6 L508.0,515.6 L510.5,516.1 L513.0,515.5 L515.5,515.3 L518.0,514.6 L520.5,515.2 L523.0,515.6 L525.5,517.1 L528.0,516.9 L530.5,519.1 L533.0,519.0 L535.5,520.7 L538.0,519.8 L540.5,518.8 L543.0,518.3 L545.5,518.9 L548.0,519.3 L550.5,520.2 L553.0,519.2 L555.5,520.6 L558.0,520.6 L560.5,520.4 L563.0,521.1 L565.5,521.0 L568.0,521.9 L570.5,522.6 L573.0,525.4 L575.5,526.3 L578.0,526.6 L580.5,524.8 L583.0,524.5 L585.5,524.7 L588.0,526.0 L590.5,526.9 L593.0,527.6 L595.5,526.9 L598.0,528.6 L600.5,527.4 L603.0,528.1 L605.5,527.2 L608.0,528.6 L610.5,527.8 L613.0,527.0 L615.5,526.9 L618.0,527.9 L620.5,528.1 L623.0,527.8 L625.5,528.4 L628.0,530.1 L630.5,530.7 L633.0,530.1 L635.5,529.2 L638.0,531.4 L640.5,532.5 L643.0,533.2 L645.5,532.6 L648.0,534.2 L650.5,535.3 L653.0,534.0 L655.5,532.0 L658.0,527.4 L660.5,524.6 L663.0,520.2 L665.5,516.7 L668.0,514.0 L670.5,515.1 L673.0,515.5 L675.5,515.3 L678.0,513.7 L680.5,513.3 L683.0,514.9 L685.5,516.7 L688.0,517.1 L690.5,513.9 L693.0,513.1 L695.5,512.5 L698.0,515.0 L700.5,514.4 L703.0,514.7 L705.5,514.4 L708.0,517.9 L710.5,519.0 L713.0,519.5 L715.5,517.0 L718.0,516.3 L720.5,516.7 L723.0,516.4 L725.5,516.5 L728.0,517.4 L730.5,518.7 L733.0,519.0 L735.5,519.3 L738.0,518.2 L740.5,516.4 L743.0,512.6 L745.5,511.1 L748.0,511.5 L750.5,513.3 L753.0,514.7 L755.5,513.7 L758.0,511.8 L760.5,511.0 L763.0,512.5 L765.5,512.5 L768.0,511.5 L770.5,511.3 L773.0,511.9 L775.5,510.9 L778.0,505.3 L780.5,506.3 L783.0,506.8 L785.5,509.8 L788.0,506.0 L790.5,501.8 L793.0,500.5 L795.5,500.3 L798.0,503.8 L800.5,500.8 L803.0,503.1 L805.5,500.1 L808.0,504.4 L810.5,498.5 L813.0,498.3 L815.5,497.6 L818.0,499.3 L820.5,494.2 L823.0,489.7 L825.5,489.8 L828.0,489.0 L830.5,485.7 L833.0,484.6 L835.5,485.5 L838.0,490.7 L840.5,486.8 L843.0,484.2 L845.5,480.2 L848.0,486.8 L850.5,489.1 L853.0,491.0 L855.5,487.6 L858.0,487.2 L860.5,489.8 L863.0,489.5 L865.5,493.0 L868.0,485.5 L870.5,480.3 L873.0,471.8 L875.5,475.5 L878.0,478.3 L880.5,484.7 L883.0,486.5 L885.5,483.7 L888.0,478.5 L890.5,473.0 L893.0,475.1 L895.5,470.9 L898.0,468.7 L900.5,461.3 L903.0,460.0 L905.5,458.0 L908.0,454.7 L910.5,451.0 L913.0,448.8 L915.5,449.1 L918.0,449.5 L920.5,445.6 L923.0,445.2 L925.5,443.1 L928.0,443.8 L930.5,441.8 L933.0,445.0 L935.5,444.6 L938.0,444.1 L940.5,437.7 L943.0,432.8 L945.5,428.9 L948.0,437.2 L950.5,436.3 L953.0,439.5 L955.5,435.4 L958.0,432.2 L960.5,428.4 L963.0,423.6 L965.5,424.6 L968.0,423.3 L970.5,423.0 L973.0,429.3 L975.5,434.9 L978.0,436.4 L980.5,432.9 L983.0,426.3 L985.5,428.1 L988.0,429.2 L990.5,430.8 L993.0,429.5 L995.5,427.7 L998.0,429.3 L1000.5,425.8 L1003.0,423.7 L1005.5,421.9 L1008.0,425.3 L1010.5,427.5 L1013.0,430.4 L1015.5,427.9 L1018.0,425.0 L1020.5,429.2 L1023.0,423.8 L1025.5,427.6 L1028.0,422.2 L1030.5,426.9 L1033.0,421.4 L1035.5,419.1 L1038.0,414.9 L1040.5,411.8 L1043.0,412.0 L1045.5,410.6 L1048.0,416.7 L1050.5,420.1 L1053.0,414.9 L1055.5,408.0 L1058.0,405.5 L1060.5,415.7 L1063.0,420.3 L1065.5,420.6 L1068.0,422.0 L1070.5,424.0 L1073.0,427.7 L1075.5,425.6 L1078.0,425.4 L1080.5,415.6 L1083.0,414.5 L1085.5,408.0 L1088.0,415.9 L1090.5,422.2 L1093.0,426.6 L1095.5,418.4 L1098.0,410.8 L1100.5,408.7 L1103.0,412.4 L1105.5,415.1 L1108.0,417.1 L1110.5,408.4 L1113.0,408.6 L1115.5,403.9 L1118.0,409.2 L1120.5,408.9 L1123.0,409.8 L1125.5,407.7 L1128.0,400.2 L1130.5,401.4 L1133.0,408.1 L1135.5,416.3 L1138.0,415.9 L1140.5,412.3 L1143.0,412.9 L1145.5,412.3 L1148.0,418.0 L1150.5,414.3 L1153.0,416.6 L1155.5,412.0 L1158.0,412.4 L1160.5,410.7 L1163.0,409.4 L1165.5,408.2 L1168.0,407.7 L1170.5,410.4 L1173.0,411.1 L1175.5,412.2 L1178.0,410.7 L1180.5,409.9 L1183.0,415.5 L1185.5,416.0 L1188.0,415.0 L1190.5,409.3 L1193.0,411.2 L1195.5,412.3 L1198.0,412.7 L1200.5,410.2 L1203.0,411.7 L1205.5,413.7 L1208.0,416.2 L1210.5,411.6 L1213.0,408.0 L1215.5,400.1 L1218.0,408.1 L1220.5,414.7 L1223.0,425.1 L1225.5,425.4 L1228.0,427.1 L1230.5,427.0 L1233.0,428.7 L1235.5,428.5 L1238.0,430.1 L1240.5,431.8 L1243.0,435.4 L1245.5,438.8 L1248.0,440.4 L1250.5,441.5 L1253.0,441.9 L1255.5,443.2 L1258.0,443.1 L1260.5,443.7 L1263.0,444.0 L1265.5,445.8 L1268.0,447.0 L1270.5,448.7 L1273.0,449.5 L1275.5,450.7 L1278.0,450.9 L1280.5,452.4 L1283.0,451.8 L1285.5,453.1 L1288.0,453.6 L1290.5,454.9 L1293.0,454.7 L1295.5,455.6 L1298.0,456.4 L1300.5,458.5 L1303.0,459.1 L1305.5,460.1 L1308.0,460.2 L1310.5,460.9 L1313.0,461.6 L1315.5,461.7 L1318.0,461.8 L1320.5,462.5 L1323.0,463.6 L1325.5,464.2 L1328.0,464.4 L1330.5,464.8 L1333.0,464.8 L1335.5,464.7 L1338.0,465.9 L1340.5,466.6 L1343.0,468.0 L1345.5,467.3 L1348.0,468.2 L1350.5,468.3 L1353.0,471.0 L1355.5,471.0 L1358.0,471.5 L1360.5,471.1 L1363.0,472.7 L1365.5,472.7 L1368.0,473.0 L1370.5,473.4 L1371.0,473.9" fill="none" stroke="#068C45" stroke-width="2.0" stroke-linejoin="round"/><path d="M53.0,411.6 L55.5,411.1 L58.0,413.7 L60.5,415.2 L63.0,414.9 L65.5,413.9 L68.0,414.3 L70.5,415.7 L73.0,416.9 L75.5,418.3 L78.0,420.0 L80.5,420.6 L83.0,424.1 L85.5,426.4 L88.0,429.4 L90.5,430.4 L93.0,433.4 L95.5,432.5 L98.0,435.1 L100.5,434.4 L103.0,436.4 L105.5,436.5 L108.0,438.2 L110.5,439.4 L113.0,438.1 L115.5,439.1 L118.0,440.4 L120.5,443.4 L123.0,444.3 L125.5,445.2 L128.0,445.8 L130.5,446.4 L133.0,446.6 L135.5,448.5 L138.0,449.2 L140.5,451.4 L143.0,450.9 L145.5,453.3 L148.0,452.9 L150.5,454.1 L153.0,454.2 L155.5,455.3 L158.0,456.0 L160.5,456.1 L163.0,457.1 L165.5,457.5 L168.0,459.3 L170.5,459.8 L173.0,459.8 L175.5,459.7 L178.0,460.3 L180.5,461.2 L183.0,462.8 L185.5,463.7 L188.0,465.3 L190.5,464.6 L193.0,464.7 L195.5,465.4 L198.0,465.6 L200.5,466.6 L203.0,466.7 L205.5,467.8 L208.0,468.2 L210.5,468.2 L213.0,469.1 L215.5,469.0 L218.0,469.5 L220.5,470.7 L223.0,471.6 L225.5,471.7 L228.0,472.1 L230.5,473.6 L233.0,474.3 L235.5,475.3 L238.0,477.8 L240.5,481.3 L243.0,483.8 L245.5,484.7 L248.0,486.4 L250.5,486.5 L253.0,487.6 L255.5,488.9 L258.0,490.5 L260.5,491.3 L263.0,490.4 L265.5,490.8 L268.0,491.0 L270.5,493.1 L273.0,493.8 L275.5,495.4 L278.0,495.4 L280.5,497.5 L283.0,497.6 L285.5,499.0 L288.0,499.9 L290.5,500.9 L293.0,500.8 L295.5,500.3 L298.0,501.0 L300.5,502.1 L303.0,501.4 L305.5,501.4 L308.0,500.4 L310.5,502.5 L313.0,502.8 L315.5,503.9 L318.0,503.8 L320.5,504.3 L323.0,504.4 L325.5,505.2 L328.0,505.2 L330.5,505.3 L333.0,505.6 L335.5,506.7 L338.0,508.5 L340.5,508.5 L343.0,507.7 L345.5,508.0 L348.0,508.9 L350.5,510.1 L353.0,510.7 L355.5,509.9 L358.0,510.4 L360.5,510.4 L363.0,510.5 L365.5,509.6 L368.0,509.2 L370.5,510.3 L373.0,511.7 L375.5,512.3 L378.0,512.6 L380.5,512.7 L383.0,513.1 L385.5,513.7 L388.0,514.3 L390.5,514.5 L393.0,514.7 L395.5,514.5 L398.0,515.2 L400.5,515.1 L403.0,516.4 L405.5,516.3 L408.0,516.9 L410.5,516.1 L413.0,516.2 L415.5,516.4 L418.0,517.1 L420.5,517.3 L423.0,516.9 L425.5,517.2 L428.0,517.9 L430.5,519.0 L433.0,519.8 L435.5,519.9 L438.0,519.0 L440.5,518.6 L443.0,518.1 L445.5,518.7 L448.0,519.6 L450.5,521.0 L453.0,521.6 L455.5,521.1 L458.0,521.1 L460.5,520.8 L463.0,521.6 L465.5,521.8 L468.0,523.9 L470.5,523.4 L473.0,524.3 L475.5,523.4 L478.0,524.7 L480.5,524.0 L483.0,525.0 L485.5,524.5 L488.0,524.9 L490.5,524.8 L493.0,525.5 L495.5,526.4 L496.0,527.3" fill="none" stroke="#068C45" stroke-opacity="0.32" stroke-width="1.6" stroke-linejoin="round"/><path d="M1371.0,477.3 L1373.0,477.2 L1375.5,477.2 L1378.0,475.9 L1380.5,475.9 L1383.0,475.2 L1385.5,476.2 L1388.0,475.9 L1390.5,476.6 L1393.0,476.0 L1395.5,476.5 L1398.0,477.1 L1400.5,477.4 L1403.0,477.9 L1405.5,477.5 L1408.0,478.6 L1410.5,478.4 L1413.0,479.5 L1415.5,480.1 L1418.0,479.5 L1420.5,478.8 L1423.0,478.0 L1425.5,479.8 L1428.0,480.2 L1430.5,480.7 L1433.0,480.1 L1435.5,480.8 L1438.0,480.3 L1440.5,481.2 L1443.0,479.8 L1445.5,479.7 L1448.0,480.4 L1450.5,482.0 L1453.0,482.7 L1455.5,483.1 L1458.0,483.7 L1460.5,484.8 L1463.0,483.8 L1465.5,483.9 L1468.0,483.8 L1470.5,483.5 L1473.0,483.7 L1475.5,483.6 L1478.0,485.3 L1480.5,486.0 L1483.0,486.2 L1485.5,485.7 L1488.0,485.6 L1490.5,486.6 L1493.0,487.0 L1495.5,487.3 L1498.0,487.6 L1500.5,488.4 L1503.0,489.3 L1505.5,489.5 L1508.0,489.3 L1510.5,488.4 L1513.0,489.1 L1515.5,489.7 L1518.0,490.7 L1520.5,490.6 L1523.0,490.4 L1525.5,490.8 L1528.0,490.1 L1530.5,491.0 L1533.0,491.2 L1535.5,493.5 L1538.0,494.3 L1540.5,494.9 L1543.0,494.6 L1545.5,495.1 L1548.0,495.2 L1550.5,495.4 L1553.0,495.3 L1555.5,497.1 L1558.0,497.6 L1560.5,497.2 L1563.0,496.9 L1565.5,498.3 L1568.0,499.1 L1570.5,500.6 L1573.0,499.8 L1575.5,501.0 L1578.0,499.6 L1580.5,499.8 L1583.0,499.2 L1585.5,499.4 L1588.0,498.9 L1590.5,500.3 L1593.0,500.6 L1595.5,502.0 L1598.0,502.0 L1600.5,502.6 L1603.0,502.8 L1605.5,503.0 L1608.0,503.4 L1610.5,503.7 L1613.0,504.1 L1615.5,504.2 L1618.0,504.0 L1620.5,504.0 L1623.0,504.8 L1625.5,506.3 L1628.0,507.7 L1630.5,508.1 L1633.0,508.2 L1635.5,508.2 L1638.0,509.0 L1640.5,509.2 L1643.0,509.8 L1645.5,509.7 L1648.0,510.2 L1650.5,511.3 L1653.0,511.4 L1655.5,511.9 L1658.0,511.4 L1660.5,512.8 L1663.0,514.1 L1665.5,514.7 L1668.0,513.6 L1670.5,513.6 L1673.0,514.5 L1675.5,515.5 L1678.0,515.6 L1680.5,515.8 L1683.0,516.1 L1685.5,517.0 L1688.0,517.7 L1690.5,519.3 L1693.0,519.1 L1695.5,519.1 L1698.0,519.2 L1700.5,520.4 L1703.0,520.8 L1705.5,522.2 L1708.0,522.6 L1710.5,522.6 L1713.0,523.1 L1715.5,523.4 L1718.0,524.3 L1720.5,524.0 L1723.0,523.4 L1725.5,524.1 L1728.0,523.3 L1730.5,523.9 L1733.0,524.7 L1735.5,526.6 L1738.0,527.2 L1740.5,526.5 L1743.0,526.7 L1745.5,527.1 L1748.0,527.9 L1750.5,528.1 L1753.0,528.0 L1755.5,528.5 L1758.0,527.7 L1760.5,529.0 L1763.0,528.3 L1765.5,529.3 L1768.0,528.7 L1770.5,530.0 L1773.0,530.8 L1775.5,531.6 L1778.0,531.8 L1780.5,532.0 L1783.0,532.1 L1785.5,531.4 L1788.0,530.5 L1790.5,529.9 L1793.0,531.0 L1795.5,530.5 L1798.0,528.9 L1800.5,526.5 L1803.0,523.8 L1805.5,520.3 L1808.0,516.5 L1810.5,512.8 L1813.0,510.6 L1815.5,509.2 L1818.0,509.8 L1820.5,509.5 L1823.0,509.7 L1825.5,511.3 L1828.0,511.5 L1830.5,511.8 L1833.0,512.0 L1835.5,511.9 L1838.0,511.8 L1840.5,511.7 L1843.0,512.5 L1845.5,514.0 L1848.0,514.8 L1850.5,515.5 L1853.0,514.6 L1855.5,515.0 L1858.0,515.5 L1860.5,516.1 L1863.0,515.9 L1865.5,515.4 L1868.0,515.9" fill="none" stroke="#068C45" stroke-opacity="0.32" stroke-width="1.6" stroke-linejoin="round"/><path d="M496.0,527.3 L498.0,527.7 L500.5,526.4 L503.0,525.6 L505.5,524.4 L508.0,525.8 L510.5,526.6 L513.0,527.2 L515.5,527.0 L518.0,527.0 L520.5,527.7 L523.0,529.4 L525.5,529.8 L528.0,530.5 L530.5,530.8 L533.0,530.6 L535.5,530.6 L538.0,529.3 L540.5,530.0 L543.0,530.8 L545.5,532.3 L548.0,532.4 L550.5,531.7 L553.0,530.7 L555.5,530.2 L558.0,530.9 L560.5,532.3 L563.0,532.0 L565.5,531.0 L568.0,531.2 L570.5,531.9 L573.0,533.6 L575.5,532.3 L578.0,533.9 L580.5,534.4 L583.0,535.5 L585.5,535.8 L588.0,535.6 L590.5,536.1 L593.0,536.9 L595.5,537.8 L598.0,537.3 L600.5,535.9 L603.0,535.3 L605.5,535.8 L608.0,536.5 L610.5,536.4 L613.0,537.2 L615.5,537.3 L618.0,538.1 L620.5,537.9 L623.0,538.5 L625.5,537.7 L628.0,538.9 L630.5,538.9 L633.0,540.1 L635.5,539.7 L638.0,540.4 L640.5,540.8 L643.0,540.9 L645.5,540.4 L648.0,539.2 L650.5,539.5 L653.0,539.7 L655.5,539.9 L658.0,536.6 L660.5,530.8 L663.0,526.2 L665.5,520.6 L668.0,519.7 L670.5,520.6 L673.0,518.8 L675.5,517.4 L678.0,517.0 L680.5,517.7 L683.0,519.7 L685.5,519.5 L688.0,519.9 L690.5,518.9 L693.0,518.5 L695.5,518.4 L698.0,517.5 L700.5,517.7 L703.0,517.2 L705.5,518.0 L708.0,516.8 L710.5,515.8 L713.0,516.0 L715.5,517.5 L718.0,518.0 L720.5,517.3 L723.0,516.1 L725.5,519.0 L728.0,517.7 L730.5,520.4 L733.0,517.6 L735.5,519.5 L738.0,517.1 L740.5,517.1 L743.0,517.3 L745.5,518.0 L748.0,517.7 L750.5,515.3 L753.0,516.3 L755.5,517.8 L758.0,518.5 L760.5,515.5 L763.0,513.9 L765.5,513.4 L768.0,515.0 L770.5,513.0 L773.0,512.5 L775.5,509.3 L778.0,512.2 L780.5,514.5 L783.0,515.3 L785.5,513.6 L788.0,512.2 L790.5,511.1 L793.0,507.8 L795.5,506.3 L798.0,507.0 L800.5,507.6 L803.0,507.7 L805.5,506.4 L808.0,502.4 L810.5,499.2 L813.0,497.7 L815.5,504.9 L818.0,503.4 L820.5,502.3 L823.0,498.2 L825.5,498.0 L828.0,494.2 L830.5,492.5 L833.0,490.2 L835.5,496.3 L838.0,501.2 L840.5,498.2 L843.0,491.3 L845.5,482.2 L848.0,482.4 L850.5,483.3 L853.0,485.8 L855.5,490.4 L858.0,489.0 L860.5,485.1 L863.0,477.7 L865.5,484.1 L868.0,491.6 L870.5,492.6 L873.0,485.7 L875.5,482.8 L878.0,488.7 L880.5,493.2 L883.0,490.9 L885.5,487.4 L888.0,483.3 L890.5,478.9 L893.0,479.7 L895.5,476.4 L898.0,472.6 L900.5,463.9 L903.0,457.5 L905.5,458.1 L908.0,460.4 L910.5,459.3 L913.0,460.4 L915.5,461.2 L918.0,463.7 L920.5,455.8 L923.0,446.1 L925.5,442.4 L928.0,440.2 L930.5,437.3 L933.0,435.6 L935.5,436.8 L938.0,439.9 L940.5,435.5 L943.0,439.2 L945.5,440.5 L948.0,446.1 L950.5,439.3 L953.0,441.1 L955.5,437.8 L958.0,444.5 L960.5,442.7 L963.0,441.2 L965.5,435.0 L968.0,437.2 L970.5,442.4 L973.0,443.2 L975.5,438.7 L978.0,436.5 L980.5,434.8 L983.0,433.6 L985.5,431.3 L988.0,432.2 L990.5,434.1 L993.0,433.2 L995.5,436.5 L998.0,435.5 L1000.5,440.1 L1003.0,439.7 L1005.5,442.1 L1008.0,440.9 L1010.5,439.6 L1013.0,434.8 L1015.5,433.8 L1018.0,428.5 L1020.5,427.5 L1023.0,427.2 L1025.5,428.8 L1028.0,429.9 L1030.5,424.0 L1033.0,427.2 L1035.5,423.5 L1038.0,426.8 L1040.5,422.3 L1043.0,426.7 L1045.5,424.8 L1048.0,422.3 L1050.5,414.7 L1053.0,415.1 L1055.5,414.8 L1058.0,421.9 L1060.5,427.0 L1063.0,424.4 L1065.5,419.5 L1068.0,416.6 L1070.5,426.6 L1073.0,431.3 L1075.5,431.6 L1078.0,429.8 L1080.5,430.6 L1083.0,434.0 L1085.5,433.9 L1088.0,428.4 L1090.5,422.1 L1093.0,420.6 L1095.5,421.5 L1098.0,421.7 L1100.5,419.2 L1103.0,419.2 L1105.5,421.5 L1108.0,421.5 L1110.5,420.0 L1113.0,415.7 L1115.5,416.5 L1118.0,425.1 L1120.5,427.5 L1123.0,431.4 L1125.5,426.8 L1128.0,419.9 L1130.5,416.7 L1133.0,412.8 L1135.5,414.9 L1138.0,410.7 L1140.5,418.0 L1143.0,417.2 L1145.5,418.4 L1148.0,416.5 L1150.5,422.6 L1153.0,419.5 L1155.5,415.8 L1158.0,412.3 L1160.5,416.4 L1163.0,418.7 L1165.5,418.5 L1168.0,418.0 L1170.5,419.8 L1173.0,416.2 L1175.5,415.9 L1178.0,413.0 L1180.5,414.5 L1183.0,413.7 L1185.5,408.5 L1188.0,412.3 L1190.5,412.2 L1193.0,418.0 L1195.5,420.3 L1198.0,422.1 L1200.5,418.8 L1203.0,417.2 L1205.5,417.7 L1208.0,415.8 L1210.5,418.6 L1213.0,419.6 L1215.5,425.6 L1218.0,419.4 L1220.5,421.8 L1223.0,426.8 L1225.5,432.4 L1228.0,430.4 L1230.5,429.8 L1233.0,431.7 L1235.5,435.9 L1238.0,438.2 L1240.5,440.9 L1243.0,441.6 L1245.5,443.2 L1248.0,443.5 L1250.5,445.2 L1253.0,447.0 L1255.5,448.4 L1258.0,450.1 L1260.5,449.8 L1263.0,450.7 L1265.5,450.8 L1268.0,453.0 L1270.5,453.5 L1273.0,455.2 L1275.5,454.1 L1278.0,455.3 L1280.5,455.9 L1283.0,458.0 L1285.5,458.2 L1288.0,457.6 L1290.5,458.5 L1293.0,459.1 L1295.5,460.9 L1298.0,460.9 L1300.5,462.3 L1303.0,463.7 L1305.5,465.3 L1308.0,466.2 L1310.5,464.6 L1313.0,464.4 L1315.5,464.4 L1318.0,465.6 L1320.5,466.6 L1323.0,466.1 L1325.5,466.8 L1328.0,466.6 L1330.5,467.6 L1333.0,468.7 L1335.5,468.5 L1338.0,469.3 L1340.5,469.0 L1343.0,469.0 L1345.5,468.7 L1348.0,468.7 L1350.5,470.6 L1353.0,472.2 L1355.5,473.4 L1358.0,473.6 L1360.5,472.6 L1363.0,472.8 L1365.5,473.0 L1368.0,475.0 L1370.5,475.9 L1371.0,477.3" fill="none" stroke="#068C45" stroke-width="2.0" stroke-linejoin="round"/><path d="M53.0,683.4 L55.5,687.0 L58.0,687.0 L60.5,684.7 L63.0,681.2 L65.5,681.5 L68.0,686.3 L70.5,685.2 L73.0,679.1 L75.5,680.1 L78.0,680.0 L80.5,681.0 L83.0,684.5 L85.5,687.4 L88.0,688.4 L90.5,688.4 L93.0,693.2 L95.5,690.2 L98.0,683.1 L100.5,684.5 L103.0,685.9 L105.5,685.1 L108.0,683.9 L110.5,684.6 L113.0,685.9 L115.5,680.1 L118.0,679.4 L120.5,684.3 L123.0,687.3 L125.5,685.8 L128.0,682.1 L130.5,685.8 L133.0,686.4 L135.5,684.7 L138.0,687.0 L140.5,688.4 L143.0,687.8 L145.5,684.7 L148.0,686.8 L150.5,688.2 L153.0,685.8 L155.5,690.3 L158.0,693.0 L160.5,688.0 L163.0,686.0 L165.5,687.6 L168.0,687.5 L170.5,685.8 L173.0,689.2 L175.5,694.3 L178.0,694.3 L180.5,693.5 L183.0,694.4 L185.5,696.8 L188.0,696.0 L190.5,695.6 L193.0,697.0 L195.5,698.8 L198.0,700.3 L200.5,698.1 L203.0,697.5 L205.5,701.7 L208.0,701.7 L210.5,700.2 L213.0,701.0 L215.5,702.6 L218.0,702.5 L220.5,699.7 L223.0,697.6 L225.5,696.8 L228.0,697.9 L230.5,697.9 L233.0,694.7 L235.5,694.6 L238.0,694.8 L240.5,691.0 L243.0,690.4 L245.5,689.0 L248.0,685.8 L250.5,683.3 L253.0,683.0 L255.5,682.8 L258.0,680.7 L260.5,681.5 L263.0,682.4 L265.5,682.7 L268.0,683.5 L270.5,682.5 L273.0,681.8 L275.5,682.2 L278.0,681.3 L280.5,678.6 L283.0,678.9 L285.5,676.8 L288.0,675.8 L290.5,678.7 L293.0,678.5 L295.5,679.4 L298.0,680.4 L300.5,679.1 L303.0,677.8 L305.5,678.7 L308.0,678.2 L310.5,676.6 L313.0,677.9 L315.5,678.8 L318.0,679.9 L320.5,679.0 L323.0,675.0 L325.5,676.0 L328.0,679.4 L330.5,678.8 L333.0,679.3 L335.5,681.4 L338.0,679.4 L340.5,677.3 L343.0,676.9 L345.5,678.1 L348.0,680.2 L350.5,680.5 L353.0,678.7 L355.5,677.5 L358.0,677.5 L360.5,676.9 L363.0,677.2 L365.5,677.4 L368.0,678.7 L370.5,680.9 L373.0,681.9 L375.5,681.7 L378.0,680.6 L380.5,680.8 L383.0,682.2 L385.5,682.1 L388.0,681.8 L390.5,681.9 L393.0,681.6 L395.5,682.1 L398.0,681.7 L400.5,682.9 L403.0,682.6 L405.5,682.2 L408.0,682.6 L410.5,683.8 L413.0,686.2 L415.5,684.1 L418.0,683.0 L420.5,682.9 L423.0,683.5 L425.5,685.2 L428.0,687.9 L430.5,686.3 L433.0,685.3 L435.5,686.2 L438.0,685.5 L440.5,687.1 L443.0,687.2 L445.5,686.5 L448.0,685.6 L450.5,684.9 L453.0,685.0 L455.5,686.0 L458.0,684.2 L460.5,682.4 L463.0,682.4 L465.5,681.7 L468.0,681.9 L470.5,683.6 L473.0,686.1 L475.5,686.1 L478.0,682.8 L480.5,681.4 L483.0,681.2 L485.5,681.3 L488.0,683.3 L490.5,683.2 L493.0,682.6 L495.5,681.7 L496.0,679.0" fill="none" stroke="#9D248F" stroke-opacity="0.32" stroke-width="1.6" stroke-linejoin="round"/><path d="M1371.0,686.9 L1373.0,685.8 L1375.5,686.8 L1378.0,689.7 L1380.5,688.6 L1383.0,686.9 L1385.5,686.4 L1388.0,687.2 L1390.5,688.6 L1393.0,687.6 L1395.5,688.1 L1398.0,688.8 L1400.5,688.2 L1403.0,686.1 L1405.5,683.9 L1408.0,683.2 L1410.5,682.6 L1413.0,684.4 L1415.5,685.3 L1418.0,683.7 L1420.5,683.7 L1423.0,684.8 L1425.5,683.6 L1428.0,682.4 L1430.5,682.4 L1433.0,680.8 L1435.5,678.5 L1438.0,678.7 L1440.5,679.0 L1443.0,677.4 L1445.5,677.8 L1448.0,678.2 L1450.5,678.8 L1453.0,678.1 L1455.5,677.2 L1458.0,677.9 L1460.5,677.7 L1463.0,677.9 L1465.5,677.6 L1468.0,677.9 L1470.5,677.4 L1473.0,675.3 L1475.5,675.7 L1478.0,677.7 L1480.5,677.2 L1483.0,675.7 L1485.5,675.7 L1488.0,676.2 L1490.5,676.3 L1493.0,676.3 L1495.5,675.0 L1498.0,675.8 L1500.5,677.5 L1503.0,675.6 L1505.5,676.1 L1508.0,677.0 L1510.5,677.0 L1513.0,675.7 L1515.5,675.7 L1518.0,676.6 L1520.5,673.6 L1523.0,674.0 L1525.5,675.3 L1528.0,673.8 L1530.5,673.8 L1533.0,673.0 L1535.5,673.5 L1538.0,674.8 L1540.5,674.0 L1543.0,675.2 L1545.5,675.3 L1548.0,673.6 L1550.5,672.7 L1553.0,673.1 L1555.5,674.6 L1558.0,674.1 L1560.5,672.4 L1563.0,673.4 L1565.5,674.2 L1568.0,673.4 L1570.5,674.8 L1573.0,673.8 L1575.5,672.4 L1578.0,672.6 L1580.5,672.8 L1583.0,675.3 L1585.5,677.0 L1588.0,676.2 L1590.5,676.6 L1593.0,678.8 L1595.5,678.7 L1598.0,680.6 L1600.5,681.4 L1603.0,679.4 L1605.5,680.3 L1608.0,679.9 L1610.5,680.6 L1613.0,682.6 L1615.5,680.9 L1618.0,680.4 L1620.5,680.9 L1623.0,681.8 L1625.5,680.7 L1628.0,678.0 L1630.5,676.7 L1633.0,677.3 L1635.5,677.5 L1638.0,677.4 L1640.5,678.7 L1643.0,678.3 L1645.5,677.1 L1648.0,678.2 L1650.5,678.6 L1653.0,677.6 L1655.5,678.3 L1658.0,676.9 L1660.5,675.3 L1663.0,678.0 L1665.5,678.3 L1668.0,675.3 L1670.5,674.9 L1673.0,675.0 L1675.5,674.0 L1678.0,673.8 L1680.5,674.5 L1683.0,674.6 L1685.5,674.7 L1688.0,673.1 L1690.5,671.3 L1693.0,673.0 L1695.5,673.5 L1698.0,673.6 L1700.5,673.9 L1703.0,671.6 L1705.5,671.5 L1708.0,671.5 L1710.5,671.0 L1713.0,672.5 L1715.5,673.7 L1718.0,672.4 L1720.5,671.0 L1723.0,671.1 L1725.5,670.9 L1728.0,668.6 L1730.5,667.6 L1733.0,669.8 L1735.5,670.4 L1738.0,669.5 L1740.5,669.7 L1743.0,671.1 L1745.5,670.5 L1748.0,669.4 L1750.5,669.0 L1753.0,669.2 L1755.5,670.3 L1758.0,671.3 L1760.5,670.0 L1763.0,668.0 L1765.5,667.7 L1768.0,669.2 L1770.5,669.9 L1773.0,669.3 L1775.5,669.5 L1778.0,669.5 L1780.5,669.0 L1783.0,667.8 L1785.5,667.4 L1788.0,668.2 L1790.5,669.0 L1793.0,668.5 L1795.5,667.9 L1798.0,669.2 L1800.5,669.1 L1803.0,668.1 L1805.5,668.2 L1808.0,667.3 L1810.5,666.3 L1813.0,666.5 L1815.5,667.0 L1818.0,667.9 L1820.5,667.3 L1823.0,665.9 L1825.5,667.0 L1828.0,666.8 L1830.5,666.3 L1833.0,666.7 L1835.5,664.6 L1838.0,663.3 L1840.5,663.4 L1843.0,664.4 L1845.5,664.7 L1848.0,663.7 L1850.5,664.7 L1853.0,663.7 L1855.5,662.0 L1858.0,662.2 L1860.5,661.6 L1863.0,661.9 L1865.5,662.4 L1868.0,661.8" fill="none" stroke="#9D248F" stroke-opacity="0.32" stroke-width="1.6" stroke-linejoin="round"/><path d="M496.0,679.0 L498.0,677.3 L500.5,678.9 L503.0,681.2 L505.5,682.4 L508.0,681.4 L510.5,680.2 L513.0,680.7 L515.5,681.5 L518.0,681.1 L520.5,678.9 L523.0,679.9 L525.5,681.3 L528.0,680.6 L530.5,678.8 L533.0,678.3 L535.5,677.7 L538.0,675.6 L540.5,677.0 L543.0,678.5 L545.5,679.2 L548.0,681.1 L550.5,680.4 L553.0,680.6 L555.5,680.0 L558.0,678.8 L560.5,678.0 L563.0,677.2 L565.5,678.1 L568.0,677.7 L570.5,678.5 L573.0,676.6 L575.5,676.0 L578.0,677.1 L580.5,677.0 L583.0,678.2 L585.5,677.6 L588.0,676.6 L590.5,675.6 L593.0,676.6 L595.5,677.0 L598.0,676.8 L600.5,675.9 L603.0,676.8 L605.5,677.2 L608.0,676.9 L610.5,677.4 L613.0,676.6 L615.5,676.9 L618.0,677.0 L620.5,677.1 L623.0,677.7 L625.5,678.4 L628.0,677.6 L630.5,678.7 L633.0,677.0 L635.5,676.4 L638.0,677.3 L640.5,673.8 L643.0,674.2 L645.5,675.7 L648.0,677.1 L650.5,676.7 L653.0,674.5 L655.5,674.4 L658.0,666.9 L660.5,662.2 L663.0,658.4 L665.5,655.6 L668.0,659.5 L670.5,657.6 L673.0,652.8 L675.5,653.1 L678.0,656.0 L680.5,657.0 L683.0,656.3 L685.5,652.9 L688.0,653.2 L690.5,653.7 L693.0,657.4 L695.5,658.0 L698.0,653.2 L700.5,654.5 L703.0,653.1 L705.5,652.1 L708.0,654.4 L710.5,654.2 L713.0,653.7 L715.5,657.7 L718.0,659.4 L720.5,652.9 L723.0,650.5 L725.5,655.8 L728.0,655.1 L730.5,653.2 L733.0,654.8 L735.5,656.1 L738.0,655.6 L740.5,653.4 L743.0,651.0 L745.5,652.5 L748.0,652.1 L750.5,656.7 L753.0,659.4 L755.5,651.5 L758.0,653.9 L760.5,653.8 L763.0,650.4 L765.5,649.8 L768.0,645.7 L770.5,641.2 L773.0,640.5 L775.5,648.8 L778.0,648.4 L780.5,640.7 L783.0,640.7 L785.5,645.3 L788.0,656.4 L790.5,647.9 L793.0,640.1 L795.5,644.6 L798.0,639.6 L800.5,640.8 L803.0,634.4 L805.5,634.7 L808.0,641.3 L810.5,630.2 L813.0,636.2 L815.5,645.0 L818.0,641.4 L820.5,627.3 L823.0,618.0 L825.5,621.8 L828.0,625.5 L830.5,634.9 L833.0,619.0 L835.5,609.9 L838.0,618.9 L840.5,623.4 L843.0,622.6 L845.5,607.6 L848.0,605.3 L850.5,605.3 L853.0,600.9 L855.5,607.8 L858.0,609.8 L860.5,611.5 L863.0,605.1 L865.5,618.4 L868.0,636.6 L870.5,626.6 L873.0,610.2 L875.5,591.4 L878.0,594.3 L880.5,607.3 L883.0,628.3 L885.5,639.1 L888.0,620.7 L890.5,620.3 L893.0,632.7 L895.5,624.7 L898.0,624.9 L900.5,627.4 L903.0,614.4 L905.5,604.1 L908.0,608.0 L910.5,623.6 L913.0,615.1 L915.5,597.0 L918.0,610.7 L920.5,603.2 L923.0,612.3 L925.5,628.5 L928.0,621.1 L930.5,637.4 L933.0,622.3 L935.5,602.3 L938.0,628.3 L940.5,633.8 L943.0,617.6 L945.5,621.3 L948.0,629.8 L950.5,637.6 L953.0,631.3 L955.5,620.0 L958.0,619.2 L960.5,623.9 L963.0,633.3 L965.5,632.3 L968.0,636.0 L970.5,629.4 L973.0,620.7 L975.5,638.8 L978.0,644.1 L980.5,634.5 L983.0,619.9 L985.5,612.9 L988.0,618.1 L990.5,625.2 L993.0,624.8 L995.5,612.9 L998.0,609.8 L1000.5,623.4 L1003.0,634.2 L1005.5,621.4 L1008.0,613.5 L1010.5,611.8 L1013.0,610.7 L1015.5,646.0 L1018.0,650.4 L1020.5,624.4 L1023.0,620.2 L1025.5,614.6 L1028.0,606.3 L1030.5,614.3 L1033.0,625.1 L1035.5,635.4 L1038.0,626.5 L1040.5,619.7 L1043.0,639.8 L1045.5,624.0 L1048.0,619.6 L1050.5,622.1 L1053.0,621.4 L1055.5,642.1 L1058.0,638.7 L1060.5,631.1 L1063.0,626.7 L1065.5,626.9 L1068.0,639.1 L1070.5,636.1 L1073.0,628.0 L1075.5,631.9 L1078.0,638.4 L1080.5,625.3 L1083.0,620.5 L1085.5,626.9 L1088.0,629.9 L1090.5,641.3 L1093.0,640.3 L1095.5,642.1 L1098.0,633.8 L1100.5,622.9 L1103.0,622.7 L1105.5,625.5 L1108.0,632.4 L1110.5,630.5 L1113.0,621.8 L1115.5,622.4 L1118.0,627.3 L1120.5,631.4 L1123.0,632.3 L1125.5,635.7 L1128.0,638.7 L1130.5,619.1 L1133.0,616.4 L1135.5,618.9 L1138.0,626.0 L1140.5,644.1 L1143.0,637.6 L1145.5,631.0 L1148.0,621.8 L1150.5,604.7 L1153.0,611.2 L1155.5,624.5 L1158.0,619.4 L1160.5,622.3 L1163.0,634.0 L1165.5,637.9 L1168.0,645.8 L1170.5,647.3 L1173.0,636.9 L1175.5,633.5 L1178.0,639.6 L1180.5,633.9 L1183.0,638.6 L1185.5,649.7 L1188.0,642.0 L1190.5,634.6 L1193.0,656.1 L1195.5,664.1 L1198.0,650.1 L1200.5,655.3 L1203.0,654.8 L1205.5,647.4 L1208.0,646.1 L1210.5,642.0 L1213.0,642.3 L1215.5,640.8 L1218.0,640.5 L1220.5,645.6 L1223.0,641.8 L1225.5,644.4 L1228.0,645.2 L1230.5,645.7 L1233.0,648.5 L1235.5,649.4 L1238.0,651.1 L1240.5,655.7 L1243.0,659.5 L1245.5,660.4 L1248.0,661.9 L1250.5,662.4 L1253.0,663.6 L1255.5,664.6 L1258.0,666.9 L1260.5,669.1 L1263.0,670.3 L1265.5,670.1 L1268.0,670.6 L1270.5,672.9 L1273.0,673.4 L1275.5,673.8 L1278.0,674.7 L1280.5,674.2 L1283.0,674.2 L1285.5,675.0 L1288.0,676.2 L1290.5,677.2 L1293.0,679.0 L1295.5,678.9 L1298.0,677.0 L1300.5,679.0 L1303.0,681.0 L1305.5,680.9 L1308.0,684.0 L1310.5,685.6 L1313.0,684.4 L1315.5,684.2 L1318.0,684.2 L1320.5,684.5 L1323.0,684.2 L1325.5,683.2 L1328.0,683.6 L1330.5,685.8 L1333.0,687.7 L1335.5,686.3 L1338.0,686.3 L1340.5,687.0 L1343.0,687.2 L1345.5,687.4 L1348.0,687.6 L1350.5,688.1 L1353.0,687.4 L1355.5,687.8 L1358.0,688.5 L1360.5,688.4 L1363.0,687.5 L1365.5,689.6 L1368.0,690.7 L1370.5,688.3 L1371.0,686.9" fill="none" stroke="#9D248F" stroke-width="2.0" stroke-linejoin="round"/><path d="M53.0,701.9 L55.5,701.4 L58.0,702.7 L60.5,702.8 L63.0,706.2 L65.5,702.6 L68.0,698.4 L70.5,701.6 L73.0,700.3 L75.5,698.1 L78.0,696.0 L80.5,695.7 L83.0,700.4 L85.5,705.8 L88.0,703.1 L90.5,701.3 L93.0,704.6 L95.5,706.3 L98.0,706.2 L100.5,705.4 L103.0,707.3 L105.5,704.2 L108.0,702.9 L110.5,702.1 L113.0,698.3 L115.5,700.8 L118.0,702.3 L120.5,705.6 L123.0,711.3 L125.5,710.1 L128.0,708.3 L130.5,708.9 L133.0,709.2 L135.5,709.8 L138.0,710.8 L140.5,709.5 L143.0,707.2 L145.5,707.0 L148.0,709.8 L150.5,709.8 L153.0,710.9 L155.5,711.0 L158.0,710.7 L160.5,708.9 L163.0,705.2 L165.5,707.9 L168.0,709.7 L170.5,707.8 L173.0,709.5 L175.5,708.9 L178.0,705.3 L180.5,703.5 L183.0,704.7 L185.5,706.0 L188.0,703.3 L190.5,698.9 L193.0,698.1 L195.5,699.1 L198.0,698.5 L200.5,699.7 L203.0,697.5 L205.5,696.0 L208.0,697.4 L210.5,696.7 L213.0,694.6 L215.5,692.6 L218.0,691.6 L220.5,690.8 L223.0,692.0 L225.5,692.9 L228.0,689.9 L230.5,690.2 L233.0,690.5 L235.5,687.3 L238.0,690.5 L240.5,695.7 L243.0,692.9 L245.5,691.0 L248.0,693.0 L250.5,693.5 L253.0,692.6 L255.5,692.6 L258.0,693.4 L260.5,693.5 L263.0,694.2 L265.5,694.7 L268.0,693.8 L270.5,694.2 L273.0,693.4 L275.5,695.1 L278.0,695.2 L280.5,693.7 L283.0,696.1 L285.5,696.8 L288.0,696.9 L290.5,698.1 L293.0,696.9 L295.5,695.8 L298.0,697.4 L300.5,697.2 L303.0,696.7 L305.5,698.9 L308.0,699.1 L310.5,697.5 L313.0,698.2 L315.5,698.8 L318.0,699.5 L320.5,699.8 L323.0,699.9 L325.5,699.5 L328.0,698.9 L330.5,699.4 L333.0,697.2 L335.5,696.8 L338.0,696.4 L340.5,694.6 L343.0,694.5 L345.5,692.7 L348.0,689.8 L350.5,691.0 L353.0,691.5 L355.5,688.2 L358.0,689.3 L360.5,690.3 L363.0,691.3 L365.5,693.1 L368.0,692.0 L370.5,690.6 L373.0,690.8 L375.5,689.3 L378.0,688.9 L380.5,690.5 L383.0,689.9 L385.5,690.2 L388.0,689.3 L390.5,690.1 L393.0,692.9 L395.5,690.8 L398.0,689.8 L400.5,692.8 L403.0,693.2 L405.5,690.7 L408.0,689.4 L410.5,691.4 L413.0,694.4 L415.5,692.6 L418.0,690.9 L420.5,691.3 L423.0,691.1 L425.5,692.3 L428.0,692.7 L430.5,691.8 L433.0,694.0 L435.5,694.7 L438.0,692.6 L440.5,693.9 L443.0,694.5 L445.5,693.6 L448.0,694.9 L450.5,694.5 L453.0,694.7 L455.5,697.1 L458.0,697.5 L460.5,696.7 L463.0,696.5 L465.5,695.4 L468.0,695.7 L470.5,698.0 L473.0,699.4 L475.5,699.6 L478.0,698.9 L480.5,698.3 L483.0,699.1 L485.5,700.4 L488.0,702.0 L490.5,702.3 L493.0,701.1 L495.5,701.4 L496.0,701.5" fill="none" stroke="#9D248F" stroke-opacity="0.32" stroke-width="1.6" stroke-linejoin="round"/><path d="M1371.0,697.6 L1373.0,697.6 L1375.5,700.7 L1378.0,701.1 L1380.5,700.1 L1383.0,700.1 L1385.5,699.7 L1388.0,700.5 L1390.5,701.1 L1393.0,702.9 L1395.5,702.7 L1398.0,700.9 L1400.5,700.6 L1403.0,699.9 L1405.5,699.3 L1408.0,701.1 L1410.5,701.1 L1413.0,701.9 L1415.5,704.2 L1418.0,703.1 L1420.5,701.6 L1423.0,702.1 L1425.5,703.2 L1428.0,704.3 L1430.5,703.9 L1433.0,702.9 L1435.5,703.6 L1438.0,703.9 L1440.5,703.6 L1443.0,702.7 L1445.5,702.0 L1448.0,703.1 L1450.5,704.4 L1453.0,705.9 L1455.5,708.2 L1458.0,708.9 L1460.5,707.6 L1463.0,707.9 L1465.5,707.7 L1468.0,705.9 L1470.5,708.1 L1473.0,707.9 L1475.5,705.8 L1478.0,706.6 L1480.5,708.2 L1483.0,708.1 L1485.5,707.7 L1488.0,708.0 L1490.5,706.5 L1493.0,707.1 L1495.5,708.4 L1498.0,707.4 L1500.5,706.7 L1503.0,707.1 L1505.5,708.7 L1508.0,709.8 L1510.5,709.4 L1513.0,709.5 L1515.5,709.1 L1518.0,709.2 L1520.5,709.2 L1523.0,707.9 L1525.5,707.9 L1528.0,709.3 L1530.5,710.1 L1533.0,710.9 L1535.5,709.6 L1538.0,708.7 L1540.5,710.5 L1543.0,710.0 L1545.5,710.0 L1548.0,710.6 L1550.5,709.6 L1553.0,711.0 L1555.5,710.8 L1558.0,710.7 L1560.5,711.6 L1563.0,710.0 L1565.5,709.7 L1568.0,709.9 L1570.5,709.9 L1573.0,710.8 L1575.5,710.0 L1578.0,710.8 L1580.5,713.0 L1583.0,713.2 L1585.5,711.7 L1588.0,708.8 L1590.5,709.1 L1593.0,710.9 L1595.5,711.6 L1598.0,711.4 L1600.5,711.1 L1603.0,711.7 L1605.5,710.5 L1608.0,711.9 L1610.5,712.3 L1613.0,711.1 L1615.5,712.9 L1618.0,712.1 L1620.5,711.2 L1623.0,713.2 L1625.5,713.0 L1628.0,712.6 L1630.5,713.1 L1633.0,712.4 L1635.5,712.7 L1638.0,712.3 L1640.5,711.5 L1643.0,712.4 L1645.5,712.8 L1648.0,712.3 L1650.5,711.1 L1653.0,710.7 L1655.5,712.6 L1658.0,713.2 L1660.5,712.5 L1663.0,711.3 L1665.5,710.5 L1668.0,711.2 L1670.5,712.8 L1673.0,712.4 L1675.5,712.3 L1678.0,712.0 L1680.5,711.9 L1683.0,711.2 L1685.5,710.4 L1688.0,710.0 L1690.5,710.0 L1693.0,710.9 L1695.5,709.3 L1698.0,707.8 L1700.5,707.8 L1703.0,706.9 L1705.5,706.1 L1708.0,706.2 L1710.5,707.2 L1713.0,708.6 L1715.5,707.2 L1718.0,705.5 L1720.5,705.7 L1723.0,705.1 L1725.5,704.3 L1728.0,705.0 L1730.5,705.0 L1733.0,703.9 L1735.5,702.9 L1738.0,703.7 L1740.5,703.7 L1743.0,702.6 L1745.5,702.3 L1748.0,701.7 L1750.5,702.6 L1753.0,702.8 L1755.5,703.1 L1758.0,703.5 L1760.5,702.0 L1763.0,700.1 L1765.5,702.0 L1768.0,703.4 L1770.5,703.7 L1773.0,704.2 L1775.5,702.4 L1778.0,702.9 L1780.5,703.3 L1783.0,702.8 L1785.5,702.3 L1788.0,702.8 L1790.5,704.4 L1793.0,700.7 L1795.5,697.8 L1798.0,694.3 L1800.5,689.6 L1803.0,685.3 L1805.5,680.3 L1808.0,680.2 L1810.5,679.9 L1813.0,676.0 L1815.5,670.4 L1818.0,668.7 L1820.5,672.5 L1823.0,674.5 L1825.5,676.5 L1828.0,677.8 L1830.5,679.4 L1833.0,680.5 L1835.5,681.6 L1838.0,684.0 L1840.5,684.9 L1843.0,685.7 L1845.5,687.2 L1848.0,688.7 L1850.5,691.0 L1853.0,692.4 L1855.5,693.3 L1858.0,693.2 L1860.5,693.8 L1863.0,696.9 L1865.5,697.7 L1868.0,698.0" fill="none" stroke="#9D248F" stroke-opacity="0.32" stroke-width="1.6" stroke-linejoin="round"/><path d="M496.0,701.5 L498.0,701.3 L500.5,699.6 L503.0,698.2 L505.5,699.1 L508.0,701.0 L510.5,702.0 L513.0,701.7 L515.5,702.8 L518.0,701.6 L520.5,701.5 L523.0,702.9 L525.5,701.0 L528.0,702.0 L530.5,701.2 L533.0,698.5 L535.5,699.7 L538.0,701.2 L540.5,701.1 L543.0,698.4 L545.5,698.2 L548.0,700.3 L550.5,703.3 L553.0,704.8 L555.5,702.1 L558.0,699.4 L560.5,699.6 L563.0,699.5 L565.5,699.2 L568.0,700.9 L570.5,700.1 L573.0,699.9 L575.5,699.9 L578.0,699.0 L580.5,701.0 L583.0,702.2 L585.5,700.1 L588.0,698.5 L590.5,699.0 L593.0,700.5 L595.5,701.2 L598.0,702.2 L600.5,701.7 L603.0,698.6 L605.5,700.4 L608.0,703.0 L610.5,701.5 L613.0,701.7 L615.5,698.8 L618.0,696.7 L620.5,697.8 L623.0,699.7 L625.5,698.8 L628.0,696.9 L630.5,700.1 L633.0,701.3 L635.5,698.9 L638.0,700.3 L640.5,699.1 L643.0,697.2 L645.5,698.6 L648.0,698.6 L650.5,698.4 L653.0,696.7 L655.5,696.3 L658.0,691.2 L660.5,687.1 L663.0,683.9 L665.5,680.7 L668.0,679.7 L670.5,676.5 L673.0,676.9 L675.5,679.1 L678.0,674.2 L680.5,671.4 L683.0,675.2 L685.5,671.6 L688.0,667.9 L690.5,670.8 L693.0,670.1 L695.5,666.6 L698.0,671.0 L700.5,669.7 L703.0,664.1 L705.5,661.0 L708.0,660.3 L710.5,662.6 L713.0,669.2 L715.5,675.2 L718.0,667.9 L720.5,669.8 L723.0,675.3 L725.5,669.7 L728.0,669.8 L730.5,671.5 L733.0,666.9 L735.5,660.3 L738.0,659.6 L740.5,665.1 L743.0,666.9 L745.5,664.3 L748.0,668.9 L750.5,667.5 L753.0,666.0 L755.5,667.1 L758.0,662.9 L760.5,659.2 L763.0,657.5 L765.5,657.6 L768.0,649.0 L770.5,651.0 L773.0,657.2 L775.5,659.9 L778.0,660.3 L780.5,650.6 L783.0,645.1 L785.5,636.6 L788.0,632.7 L790.5,650.3 L793.0,662.7 L795.5,658.9 L798.0,651.5 L800.5,649.7 L803.0,650.2 L805.5,637.3 L808.0,629.5 L810.5,644.8 L813.0,655.6 L815.5,650.0 L818.0,641.2 L820.5,637.2 L823.0,635.4 L825.5,631.7 L828.0,623.1 L830.5,628.8 L833.0,636.9 L835.5,634.3 L838.0,646.8 L840.5,651.2 L843.0,636.1 L845.5,635.6 L848.0,630.1 L850.5,632.5 L853.0,643.4 L855.5,635.6 L858.0,637.7 L860.5,648.4 L863.0,641.8 L865.5,625.9 L868.0,642.9 L870.5,649.7 L873.0,645.8 L875.5,641.2 L878.0,633.8 L880.5,634.1 L883.0,635.9 L885.5,638.5 L888.0,629.4 L890.5,642.3 L893.0,649.6 L895.5,624.2 L898.0,620.0 L900.5,628.1 L903.0,621.0 L905.5,623.5 L908.0,629.0 L910.5,633.5 L913.0,631.3 L915.5,617.7 L918.0,619.6 L920.5,639.4 L923.0,633.5 L925.5,631.7 L928.0,644.9 L930.5,637.3 L933.0,636.3 L935.5,634.2 L938.0,629.2 L940.5,627.4 L943.0,633.6 L945.5,650.7 L948.0,642.6 L950.5,641.5 L953.0,631.2 L955.5,616.5 L958.0,624.5 L960.5,643.1 L963.0,646.2 L965.5,639.6 L968.0,629.5 L970.5,624.9 L973.0,643.5 L975.5,642.5 L978.0,619.5 L980.5,621.1 L983.0,646.1 L985.5,654.3 L988.0,651.5 L990.5,630.5 L993.0,626.4 L995.5,644.6 L998.0,640.5 L1000.5,638.3 L1003.0,640.8 L1005.5,637.6 L1008.0,646.3 L1010.5,640.9 L1013.0,655.6 L1015.5,661.7 L1018.0,644.3 L1020.5,638.3 L1023.0,636.5 L1025.5,639.9 L1028.0,629.5 L1030.5,620.9 L1033.0,633.1 L1035.5,643.2 L1038.0,623.2 L1040.5,609.1 L1043.0,625.3 L1045.5,639.7 L1048.0,646.1 L1050.5,638.2 L1053.0,638.2 L1055.5,644.7 L1058.0,637.3 L1060.5,638.6 L1063.0,648.9 L1065.5,653.8 L1068.0,653.3 L1070.5,644.9 L1073.0,637.0 L1075.5,633.9 L1078.0,632.2 L1080.5,637.6 L1083.0,638.3 L1085.5,645.9 L1088.0,652.1 L1090.5,652.5 L1093.0,650.6 L1095.5,652.9 L1098.0,652.9 L1100.5,652.3 L1103.0,655.2 L1105.5,653.9 L1108.0,650.3 L1110.5,637.3 L1113.0,628.4 L1115.5,650.0 L1118.0,662.5 L1120.5,652.6 L1123.0,649.1 L1125.5,643.4 L1128.0,663.8 L1130.5,659.7 L1133.0,640.5 L1135.5,647.8 L1138.0,641.0 L1140.5,633.2 L1143.0,636.3 L1145.5,642.6 L1148.0,644.3 L1150.5,652.2 L1153.0,648.2 L1155.5,646.1 L1158.0,663.5 L1160.5,666.9 L1163.0,651.0 L1165.5,628.0 L1168.0,640.8 L1170.5,662.0 L1173.0,654.0 L1175.5,659.1 L1178.0,660.5 L1180.5,654.3 L1183.0,651.2 L1185.5,653.0 L1188.0,656.8 L1190.5,652.9 L1193.0,661.5 L1195.5,665.7 L1198.0,652.8 L1200.5,655.8 L1203.0,668.0 L1205.5,661.9 L1208.0,658.0 L1210.5,662.6 L1213.0,664.2 L1215.5,665.5 L1218.0,668.9 L1220.5,668.3 L1223.0,672.0 L1225.5,672.2 L1228.0,669.1 L1230.5,674.1 L1233.0,679.2 L1235.5,677.3 L1238.0,674.7 L1240.5,674.2 L1243.0,676.9 L1245.5,679.4 L1248.0,678.0 L1250.5,679.3 L1253.0,682.5 L1255.5,683.7 L1258.0,685.3 L1260.5,686.6 L1263.0,686.0 L1265.5,685.7 L1268.0,686.5 L1270.5,688.2 L1273.0,689.1 L1275.5,689.5 L1278.0,689.6 L1280.5,690.0 L1283.0,691.5 L1285.5,691.3 L1288.0,689.7 L1290.5,692.0 L1293.0,694.2 L1295.5,693.0 L1298.0,693.3 L1300.5,694.1 L1303.0,693.1 L1305.5,693.8 L1308.0,694.6 L1310.5,695.1 L1313.0,696.3 L1315.5,697.2 L1318.0,697.3 L1320.5,696.8 L1323.0,696.8 L1325.5,696.3 L1328.0,695.5 L1330.5,696.7 L1333.0,698.2 L1335.5,697.0 L1338.0,697.1 L1340.5,697.4 L1343.0,696.7 L1345.5,697.4 L1348.0,699.1 L1350.5,698.8 L1353.0,696.8 L1355.5,696.6 L1358.0,699.3 L1360.5,699.3 L1363.0,698.9 L1365.5,699.5 L1368.0,699.3 L1370.5,699.5 L1371.0,697.6" fill="none" stroke="#9D248F" stroke-width="2.0" stroke-linejoin="round"/><path d="M53.0,674.8 L55.5,670.3 L58.0,666.9 L60.5,664.1 L63.0,662.9 L65.5,665.8 L68.0,667.8 L70.5,668.1 L73.0,670.6 L75.5,671.2 L78.0,667.9 L80.5,667.3 L83.0,668.9 L85.5,667.7 L88.0,671.3 L90.5,673.9 L93.0,672.1 L95.5,673.5 L98.0,678.9 L100.5,681.5 L103.0,682.8 L105.5,684.3 L108.0,682.6 L110.5,685.1 L113.0,688.6 L115.5,689.2 L118.0,687.6 L120.5,688.0 L123.0,689.2 L125.5,691.0 L128.0,694.8 L130.5,699.4 L133.0,703.1 L135.5,703.4 L138.0,704.4 L140.5,705.4 L143.0,710.2 L145.5,714.1 L148.0,715.6 L150.5,715.4 L153.0,713.5 L155.5,716.3 L158.0,717.3 L160.5,717.0 L163.0,716.0 L165.5,717.9 L168.0,720.4 L170.5,721.0 L173.0,721.3 L175.5,718.5 L178.0,720.4 L180.5,725.3 L183.0,723.8 L185.5,721.8 L188.0,724.0 L190.5,725.8 L193.0,724.6 L195.5,727.1 L198.0,730.3 L200.5,727.5 L203.0,724.2 L205.5,725.4 L208.0,729.6 L210.5,730.0 L213.0,729.1 L215.5,727.2 L218.0,726.3 L220.5,725.7 L223.0,727.5 L225.5,729.5 L228.0,725.5 L230.5,723.1 L233.0,725.7 L235.5,727.6 L238.0,726.8 L240.5,727.3 L243.0,729.7 L245.5,729.5 L248.0,725.9 L250.5,725.5 L253.0,726.1 L255.5,725.6 L258.0,727.3 L260.5,728.0 L263.0,726.8 L265.5,727.0 L268.0,727.4 L270.5,728.0 L273.0,728.7 L275.5,728.6 L278.0,728.7 L280.5,729.2 L283.0,729.4 L285.5,728.8 L288.0,728.4 L290.5,728.6 L293.0,727.4 L295.5,729.8 L298.0,730.9 L300.5,728.4 L303.0,728.6 L305.5,728.1 L308.0,728.9 L310.5,728.9 L313.0,728.1 L315.5,727.3 L318.0,726.8 L320.5,727.0 L323.0,729.4 L325.5,728.9 L328.0,725.8 L330.5,726.9 L333.0,728.8 L335.5,726.7 L338.0,723.6 L340.5,724.9 L343.0,726.3 L345.5,724.4 L348.0,722.1 L350.5,722.1 L353.0,724.1 L355.5,724.6 L358.0,724.2 L360.5,723.8 L363.0,722.7 L365.5,723.0 L368.0,722.5 L370.5,721.8 L373.0,720.7 L375.5,719.6 L378.0,720.4 L380.5,720.4 L383.0,718.7 L385.5,718.7 L388.0,719.0 L390.5,717.5 L393.0,715.4 L395.5,715.4 L398.0,717.5 L400.5,715.0 L403.0,710.5 L405.5,709.8 L408.0,710.2 L410.5,709.6 L413.0,709.2 L415.5,710.9 L418.0,712.5 L420.5,712.9 L423.0,712.6 L425.5,710.6 L428.0,710.7 L430.5,710.4 L433.0,709.0 L435.5,708.3 L438.0,709.5 L440.5,711.2 L443.0,709.5 L445.5,708.2 L448.0,708.4 L450.5,708.7 L453.0,709.2 L455.5,708.9 L458.0,708.3 L460.5,706.7 L463.0,705.9 L465.5,705.5 L468.0,707.1 L470.5,709.7 L473.0,708.6 L475.5,708.1 L478.0,709.0 L480.5,708.7 L483.0,705.4 L485.5,704.2 L488.0,703.4 L490.5,702.7 L493.0,703.4 L495.5,703.9 L496.0,705.3" fill="none" stroke="#9D248F" stroke-opacity="0.32" stroke-width="1.6" stroke-linejoin="round"/><path d="M1371.0,726.9 L1373.0,726.0 L1375.5,725.2 L1378.0,725.2 L1380.5,725.9 L1383.0,726.1 L1385.5,725.1 L1388.0,725.0 L1390.5,725.6 L1393.0,725.8 L1395.5,725.7 L1398.0,726.2 L1400.5,726.2 L1403.0,725.8 L1405.5,725.7 L1408.0,724.6 L1410.5,723.9 L1413.0,724.2 L1415.5,725.3 L1418.0,726.3 L1420.5,725.9 L1423.0,724.5 L1425.5,724.2 L1428.0,725.6 L1430.5,726.0 L1433.0,724.7 L1435.5,725.2 L1438.0,724.6 L1440.5,724.1 L1443.0,725.1 L1445.5,724.9 L1448.0,724.0 L1450.5,724.9 L1453.0,727.0 L1455.5,725.3 L1458.0,723.8 L1460.5,724.4 L1463.0,725.1 L1465.5,723.4 L1468.0,720.2 L1470.5,719.6 L1473.0,721.0 L1475.5,720.2 L1478.0,718.0 L1480.5,718.4 L1483.0,715.8 L1485.5,712.0 L1488.0,713.8 L1490.5,715.7 L1493.0,713.7 L1495.5,713.2 L1498.0,714.0 L1500.5,713.5 L1503.0,712.5 L1505.5,711.7 L1508.0,711.4 L1510.5,711.5 L1513.0,711.7 L1515.5,712.6 L1518.0,712.9 L1520.5,710.2 L1523.0,709.7 L1525.5,711.7 L1528.0,711.3 L1530.5,710.5 L1533.0,709.8 L1535.5,709.1 L1538.0,707.9 L1540.5,707.5 L1543.0,706.7 L1545.5,706.6 L1548.0,706.0 L1550.5,703.0 L1553.0,704.0 L1555.5,705.0 L1558.0,704.2 L1560.5,704.2 L1563.0,703.6 L1565.5,702.1 L1568.0,701.8 L1570.5,702.2 L1573.0,702.0 L1575.5,702.7 L1578.0,701.3 L1580.5,699.4 L1583.0,699.7 L1585.5,698.7 L1588.0,696.8 L1590.5,696.1 L1593.0,697.2 L1595.5,696.8 L1598.0,695.8 L1600.5,694.9 L1603.0,694.1 L1605.5,693.6 L1608.0,692.0 L1610.5,692.0 L1613.0,692.0 L1615.5,692.4 L1618.0,690.6 L1620.5,689.2 L1623.0,691.0 L1625.5,691.0 L1628.0,689.0 L1630.5,686.8 L1633.0,686.1 L1635.5,687.2 L1638.0,688.1 L1640.5,688.6 L1643.0,689.2 L1645.5,688.6 L1648.0,686.5 L1650.5,685.3 L1653.0,684.1 L1655.5,683.9 L1658.0,684.0 L1660.5,685.8 L1663.0,689.6 L1665.5,691.3 L1668.0,693.9 L1670.5,692.8 L1673.0,691.5 L1675.5,692.3 L1678.0,699.1 L1680.5,715.8 L1683.0,732.0 L1685.5,717.5 L1688.0,715.7 L1690.5,717.1 L1693.0,718.7 L1695.5,723.9 L1698.0,731.3 L1700.5,737.7 L1703.0,745.5 L1705.5,753.6 L1708.0,755.8 L1710.5,754.4 L1713.0,754.0 L1715.5,754.6 L1718.0,754.4 L1720.5,751.4 L1723.0,749.7 L1725.5,749.2 L1728.0,746.8 L1730.5,744.8 L1733.0,743.3 L1735.5,742.1 L1738.0,740.4 L1740.5,740.4 L1743.0,741.7 L1745.5,741.7 L1748.0,741.8 L1750.5,743.2 L1753.0,743.6 L1755.5,742.9 L1758.0,743.7 L1760.5,744.2 L1763.0,744.2 L1765.5,743.1 L1768.0,741.8 L1770.5,741.6 L1773.0,742.1 L1775.5,742.7 L1778.0,742.9 L1780.5,743.7 L1783.0,743.7 L1785.5,744.3 L1788.0,745.1 L1790.5,739.7 L1793.0,735.8 L1795.5,730.3 L1798.0,726.9 L1800.5,725.6 L1803.0,721.1 L1805.5,716.5 L1808.0,715.6 L1810.5,714.2 L1813.0,709.7 L1815.5,708.2 L1818.0,705.7 L1820.5,701.7 L1823.0,699.9 L1825.5,699.2 L1828.0,698.7 L1830.5,699.1 L1833.0,698.8 L1835.5,697.3 L1838.0,696.8 L1840.5,697.4 L1843.0,697.4 L1845.5,696.2 L1848.0,695.6 L1850.5,696.0 L1853.0,694.7 L1855.5,693.1 L1858.0,692.4 L1860.5,692.9 L1863.0,691.4 L1865.5,689.5 L1868.0,689.0" fill="none" stroke="#9D248F" stroke-opacity="0.32" stroke-width="1.6" stroke-linejoin="round"/><path d="M496.0,705.3 L498.0,704.5 L500.5,703.8 L503.0,704.9 L505.5,704.9 L508.0,704.5 L510.5,702.5 L513.0,702.2 L515.5,705.0 L518.0,705.6 L520.5,703.5 L523.0,703.0 L525.5,704.6 L528.0,703.9 L530.5,704.2 L533.0,704.4 L535.5,703.4 L538.0,704.0 L540.5,706.4 L543.0,706.2 L545.5,703.5 L548.0,704.4 L550.5,704.5 L553.0,703.9 L555.5,702.2 L558.0,702.2 L560.5,704.4 L563.0,702.8 L565.5,704.1 L568.0,705.1 L570.5,703.6 L573.0,702.4 L575.5,700.9 L578.0,701.7 L580.5,701.7 L583.0,702.8 L585.5,705.2 L588.0,704.0 L590.5,701.4 L593.0,701.6 L595.5,702.1 L598.0,702.7 L600.5,704.0 L603.0,703.3 L605.5,703.2 L608.0,704.7 L610.5,706.5 L613.0,704.7 L615.5,703.6 L618.0,703.9 L620.5,701.9 L623.0,703.6 L625.5,705.2 L628.0,703.8 L630.5,703.8 L633.0,703.4 L635.5,701.8 L638.0,703.9 L640.5,706.2 L643.0,704.4 L645.5,704.4 L648.0,705.6 L650.5,704.2 L653.0,703.4 L655.5,702.3 L658.0,697.6 L660.5,692.9 L663.0,690.4 L665.5,686.6 L668.0,684.0 L670.5,685.1 L673.0,683.8 L675.5,684.5 L678.0,684.8 L680.5,682.7 L683.0,682.7 L685.5,682.0 L688.0,684.0 L690.5,686.3 L693.0,685.9 L695.5,682.3 L698.0,680.9 L700.5,681.8 L703.0,681.2 L705.5,685.0 L708.0,685.2 L710.5,681.9 L713.0,683.6 L715.5,686.0 L718.0,687.5 L720.5,680.7 L723.0,676.8 L725.5,680.0 L728.0,676.7 L730.5,677.7 L733.0,676.6 L735.5,669.7 L738.0,669.9 L740.5,675.2 L743.0,683.4 L745.5,681.8 L748.0,671.8 L750.5,667.1 L753.0,668.7 L755.5,673.7 L758.0,674.5 L760.5,669.2 L763.0,664.8 L765.5,660.6 L768.0,663.0 L770.5,664.7 L773.0,651.9 L775.5,661.9 L778.0,674.6 L780.5,670.3 L783.0,668.8 L785.5,661.8 L788.0,664.1 L790.5,663.2 L793.0,666.2 L795.5,671.3 L798.0,652.6 L800.5,654.8 L803.0,672.5 L805.5,666.4 L808.0,661.3 L810.5,660.8 L813.0,651.6 L815.5,638.9 L818.0,647.5 L820.5,657.8 L823.0,652.6 L825.5,648.3 L828.0,640.7 L830.5,651.9 L833.0,654.0 L835.5,645.1 L838.0,639.5 L840.5,642.1 L843.0,652.7 L845.5,648.2 L848.0,642.1 L850.5,637.0 L853.0,645.6 L855.5,649.2 L858.0,640.2 L860.5,653.8 L863.0,653.5 L865.5,634.3 L868.0,630.1 L870.5,637.3 L873.0,653.8 L875.5,657.6 L878.0,645.3 L880.5,649.1 L883.0,658.9 L885.5,649.0 L888.0,649.9 L890.5,660.4 L893.0,654.2 L895.5,633.3 L898.0,631.6 L900.5,656.4 L903.0,653.4 L905.5,659.5 L908.0,661.9 L910.5,640.0 L913.0,643.5 L915.5,652.2 L918.0,653.9 L920.5,650.5 L923.0,653.7 L925.5,651.6 L928.0,644.0 L930.5,639.5 L933.0,633.5 L935.5,643.1 L938.0,644.1 L940.5,639.9 L943.0,642.9 L945.5,647.6 L948.0,654.0 L950.5,657.4 L953.0,659.1 L955.5,655.5 L958.0,645.4 L960.5,633.9 L963.0,635.3 L965.5,640.6 L968.0,631.2 L970.5,647.1 L973.0,647.1 L975.5,638.9 L978.0,654.5 L980.5,650.8 L983.0,664.0 L985.5,665.7 L988.0,644.3 L990.5,655.6 L993.0,655.5 L995.5,635.2 L998.0,634.0 L1000.5,639.2 L1003.0,646.1 L1005.5,652.4 L1008.0,642.6 L1010.5,642.8 L1013.0,666.8 L1015.5,660.2 L1018.0,645.2 L1020.5,654.3 L1023.0,662.9 L1025.5,654.4 L1028.0,640.8 L1030.5,638.8 L1033.0,651.9 L1035.5,664.1 L1038.0,643.6 L1040.5,624.6 L1043.0,630.6 L1045.5,634.8 L1048.0,645.3 L1050.5,656.2 L1053.0,666.0 L1055.5,669.8 L1058.0,658.4 L1060.5,660.9 L1063.0,654.7 L1065.5,638.7 L1068.0,644.6 L1070.5,659.3 L1073.0,649.1 L1075.5,649.0 L1078.0,664.5 L1080.5,656.0 L1083.0,651.8 L1085.5,653.4 L1088.0,652.9 L1090.5,659.7 L1093.0,654.4 L1095.5,656.0 L1098.0,666.4 L1100.5,665.7 L1103.0,648.5 L1105.5,631.8 L1108.0,648.4 L1110.5,656.4 L1113.0,648.2 L1115.5,647.4 L1118.0,643.7 L1120.5,646.8 L1123.0,650.9 L1125.5,648.9 L1128.0,656.5 L1130.5,653.5 L1133.0,657.7 L1135.5,651.6 L1138.0,660.3 L1140.5,665.7 L1143.0,654.3 L1145.5,668.3 L1148.0,665.0 L1150.5,664.4 L1153.0,664.6 L1155.5,650.7 L1158.0,654.3 L1160.5,672.0 L1163.0,667.7 L1165.5,652.6 L1168.0,653.3 L1170.5,665.5 L1173.0,671.3 L1175.5,676.3 L1178.0,678.4 L1180.5,676.1 L1183.0,663.7 L1185.5,673.5 L1188.0,684.6 L1190.5,678.6 L1193.0,677.5 L1195.5,673.4 L1198.0,676.3 L1200.5,685.2 L1203.0,691.7 L1205.5,687.5 L1208.0,689.2 L1210.5,685.6 L1213.0,681.4 L1215.5,681.8 L1218.0,684.3 L1220.5,685.7 L1223.0,685.4 L1225.5,688.3 L1228.0,684.5 L1230.5,685.9 L1233.0,689.8 L1235.5,687.2 L1238.0,685.3 L1240.5,686.2 L1243.0,686.6 L1245.5,687.9 L1248.0,691.0 L1250.5,693.5 L1253.0,694.0 L1255.5,694.0 L1258.0,696.0 L1260.5,697.5 L1263.0,697.1 L1265.5,696.8 L1268.0,696.5 L1270.5,695.6 L1273.0,697.3 L1275.5,698.9 L1278.0,698.8 L1280.5,699.2 L1283.0,701.4 L1285.5,702.0 L1288.0,702.0 L1290.5,702.4 L1293.0,704.3 L1295.5,707.1 L1298.0,706.8 L1300.5,706.0 L1303.0,707.8 L1305.5,709.0 L1308.0,707.8 L1310.5,707.1 L1313.0,707.8 L1315.5,711.3 L1318.0,711.9 L1320.5,713.1 L1323.0,714.3 L1325.5,712.5 L1328.0,714.2 L1330.5,714.9 L1333.0,714.8 L1335.5,714.9 L1338.0,714.3 L1340.5,715.3 L1343.0,717.0 L1345.5,717.8 L1348.0,716.8 L1350.5,718.3 L1353.0,720.4 L1355.5,720.5 L1358.0,720.8 L1360.5,720.0 L1363.0,722.3 L1365.5,724.3 L1368.0,724.2 L1370.5,726.3 L1371.0,726.9" fill="none" stroke="#9D248F" stroke-width="2.0" stroke-linejoin="round"/><path d="M53.0,640.5 L55.5,641.0 L58.0,640.3 L60.5,643.6 L63.0,647.9 L65.5,647.9 L68.0,654.0 L70.5,654.6 L73.0,653.7 L75.5,659.7 L78.0,664.7 L80.5,664.1 L83.0,663.7 L85.5,666.9 L88.0,665.1 L90.5,661.2 L93.0,660.9 L95.5,668.4 L98.0,674.2 L100.5,671.5 L103.0,671.4 L105.5,674.8 L108.0,676.8 L110.5,679.1 L113.0,685.8 L115.5,685.7 L118.0,683.0 L120.5,684.5 L123.0,684.4 L125.5,685.7 L128.0,687.9 L130.5,690.0 L133.0,692.6 L135.5,695.5 L138.0,694.6 L140.5,699.3 L143.0,700.2 L145.5,698.7 L148.0,705.6 L150.5,704.6 L153.0,704.0 L155.5,708.5 L158.0,707.7 L160.5,703.1 L163.0,705.8 L165.5,709.9 L168.0,707.6 L170.5,710.4 L173.0,711.0 L175.5,711.5 L178.0,712.7 L180.5,712.8 L183.0,713.0 L185.5,712.6 L188.0,713.7 L190.5,714.2 L193.0,716.5 L195.5,717.7 L198.0,718.2 L200.5,720.5 L203.0,720.6 L205.5,717.2 L208.0,717.6 L210.5,720.4 L213.0,722.3 L215.5,723.8 L218.0,724.2 L220.5,723.3 L223.0,723.5 L225.5,722.7 L228.0,723.8 L230.5,726.1 L233.0,725.6 L235.5,725.0 L238.0,724.8 L240.5,724.8 L243.0,725.6 L245.5,725.2 L248.0,725.9 L250.5,728.2 L253.0,729.5 L255.5,729.2 L258.0,727.3 L260.5,727.8 L263.0,728.2 L265.5,728.0 L268.0,726.8 L270.5,725.9 L273.0,726.5 L275.5,727.4 L278.0,726.8 L280.5,725.9 L283.0,726.9 L285.5,728.9 L288.0,729.1 L290.5,729.1 L293.0,730.3 L295.5,730.5 L298.0,729.1 L300.5,727.9 L303.0,726.5 L305.5,726.3 L308.0,728.7 L310.5,728.4 L313.0,728.5 L315.5,730.1 L318.0,727.3 L320.5,725.8 L323.0,723.8 L325.5,720.8 L328.0,720.9 L330.5,721.0 L333.0,720.2 L335.5,718.8 L338.0,720.6 L340.5,721.4 L343.0,719.4 L345.5,719.5 L348.0,719.1 L350.5,717.9 L353.0,716.8 L355.5,715.1 L358.0,716.8 L360.5,717.2 L363.0,713.8 L365.5,713.6 L368.0,713.3 L370.5,715.8 L373.0,717.4 L375.5,716.5 L378.0,717.2 L380.5,716.1 L383.0,714.9 L385.5,713.3 L388.0,712.4 L390.5,712.2 L393.0,712.0 L395.5,711.6 L398.0,712.4 L400.5,713.5 L403.0,711.9 L405.5,709.3 L408.0,710.1 L410.5,712.6 L413.0,711.9 L415.5,709.8 L418.0,710.3 L420.5,712.6 L423.0,710.4 L425.5,709.9 L428.0,710.1 L430.5,709.6 L433.0,713.0 L435.5,713.1 L438.0,711.9 L440.5,711.5 L443.0,711.1 L445.5,713.7 L448.0,715.0 L450.5,712.5 L453.0,710.9 L455.5,711.2 L458.0,713.7 L460.5,713.9 L463.0,712.9 L465.5,712.4 L468.0,710.2 L470.5,711.8 L473.0,712.9 L475.5,711.0 L478.0,710.4 L480.5,710.6 L483.0,710.7 L485.5,709.9 L488.0,711.6 L490.5,713.4 L493.0,713.2 L495.5,712.6 L496.0,712.0" fill="none" stroke="#9D248F" stroke-opacity="0.32" stroke-width="1.6" stroke-linejoin="round"/><path d="M1371.0,733.0 L1373.0,731.5 L1375.5,732.1 L1378.0,731.9 L1380.5,731.2 L1383.0,731.9 L1385.5,731.9 L1388.0,732.2 L1390.5,731.7 L1393.0,731.2 L1395.5,731.4 L1398.0,731.7 L1400.5,730.5 L1403.0,728.1 L1405.5,728.7 L1408.0,728.0 L1410.5,726.4 L1413.0,727.2 L1415.5,728.0 L1418.0,727.0 L1420.5,727.1 L1423.0,728.2 L1425.5,728.2 L1428.0,728.8 L1430.5,728.9 L1433.0,729.7 L1435.5,730.5 L1438.0,729.7 L1440.5,729.6 L1443.0,730.8 L1445.5,731.5 L1448.0,731.9 L1450.5,731.4 L1453.0,730.8 L1455.5,732.6 L1458.0,732.1 L1460.5,730.6 L1463.0,730.0 L1465.5,727.1 L1468.0,724.1 L1470.5,723.6 L1473.0,722.8 L1475.5,720.5 L1478.0,718.4 L1480.5,718.6 L1483.0,718.7 L1485.5,716.5 L1488.0,716.6 L1490.5,717.0 L1493.0,716.9 L1495.5,717.3 L1498.0,717.2 L1500.5,715.0 L1503.0,716.0 L1505.5,718.4 L1508.0,718.1 L1510.5,719.1 L1513.0,718.2 L1515.5,715.0 L1518.0,717.4 L1520.5,720.1 L1523.0,717.9 L1525.5,717.4 L1528.0,719.3 L1530.5,717.4 L1533.0,716.0 L1535.5,717.1 L1538.0,716.4 L1540.5,713.5 L1543.0,712.4 L1545.5,711.6 L1548.0,711.4 L1550.5,711.9 L1553.0,711.0 L1555.5,710.2 L1558.0,712.3 L1560.5,713.4 L1563.0,711.1 L1565.5,710.7 L1568.0,712.6 L1570.5,714.1 L1573.0,712.4 L1575.5,711.3 L1578.0,712.4 L1580.5,712.0 L1583.0,710.4 L1585.5,709.9 L1588.0,710.7 L1590.5,710.8 L1593.0,709.8 L1595.5,710.2 L1598.0,711.8 L1600.5,712.5 L1603.0,711.6 L1605.5,712.5 L1608.0,711.9 L1610.5,710.1 L1613.0,709.5 L1615.5,709.9 L1618.0,710.5 L1620.5,708.4 L1623.0,707.6 L1625.5,710.0 L1628.0,710.9 L1630.5,709.4 L1633.0,709.3 L1635.5,707.7 L1638.0,706.2 L1640.5,706.1 L1643.0,705.9 L1645.5,706.3 L1648.0,707.1 L1650.5,707.9 L1653.0,708.0 L1655.5,709.0 L1658.0,707.6 L1660.5,705.3 L1663.0,705.8 L1665.5,705.0 L1668.0,704.1 L1670.5,704.8 L1673.0,704.1 L1675.5,703.9 L1678.0,705.2 L1680.5,703.8 L1683.0,700.9 L1685.5,701.5 L1688.0,702.4 L1690.5,702.4 L1693.0,702.8 L1695.5,702.8 L1698.0,704.0 L1700.5,704.3 L1703.0,703.2 L1705.5,701.6 L1708.0,699.9 L1710.5,699.1 L1713.0,700.4 L1715.5,702.0 L1718.0,702.1 L1720.5,701.5 L1723.0,700.7 L1725.5,699.9 L1728.0,699.7 L1730.5,701.4 L1733.0,701.2 L1735.5,701.2 L1738.0,701.9 L1740.5,701.9 L1743.0,702.8 L1745.5,703.0 L1748.0,703.7 L1750.5,702.6 L1753.0,701.0 L1755.5,701.3 L1758.0,701.5 L1760.5,702.4 L1763.0,703.0 L1765.5,702.5 L1768.0,703.0 L1770.5,702.6 L1773.0,703.2 L1775.5,702.2 L1778.0,701.6 L1780.5,703.4 L1783.0,702.7 L1785.5,701.9 L1788.0,703.2 L1790.5,701.4 L1793.0,697.2 L1795.5,694.4 L1798.0,694.6 L1800.5,692.9 L1803.0,691.1 L1805.5,691.9 L1808.0,690.6 L1810.5,689.8 L1813.0,689.1 L1815.5,688.2 L1818.0,688.1 L1820.5,688.7 L1823.0,688.0 L1825.5,687.3 L1828.0,688.1 L1830.5,688.4 L1833.0,686.6 L1835.5,684.6 L1838.0,685.4 L1840.5,686.4 L1843.0,687.0 L1845.5,687.1 L1848.0,688.3 L1850.5,688.5 L1853.0,687.2 L1855.5,686.2 L1858.0,686.1 L1860.5,686.8 L1863.0,686.5 L1865.5,685.7 L1868.0,685.5" fill="none" stroke="#9D248F" stroke-opacity="0.32" stroke-width="1.6" stroke-linejoin="round"/><path d="M496.0,712.0 L498.0,712.4 L500.5,713.2 L503.0,713.8 L505.5,713.0 L508.0,711.6 L510.5,710.1 L513.0,709.9 L515.5,710.4 L518.0,710.6 L520.5,710.0 L523.0,712.1 L525.5,713.5 L528.0,709.9 L530.5,708.5 L533.0,709.1 L535.5,710.4 L538.0,712.8 L540.5,711.5 L543.0,711.0 L545.5,711.7 L548.0,712.2 L550.5,713.9 L553.0,713.0 L555.5,712.3 L558.0,712.0 L560.5,710.8 L563.0,709.5 L565.5,710.2 L568.0,711.4 L570.5,710.6 L573.0,710.5 L575.5,710.7 L578.0,709.6 L580.5,709.2 L583.0,711.6 L585.5,711.9 L588.0,712.1 L590.5,711.1 L593.0,708.0 L595.5,709.4 L598.0,711.7 L600.5,710.8 L603.0,710.6 L605.5,712.4 L608.0,712.9 L610.5,711.7 L613.0,710.3 L615.5,708.5 L618.0,708.6 L620.5,710.8 L623.0,712.4 L625.5,710.5 L628.0,707.8 L630.5,708.1 L633.0,710.2 L635.5,708.3 L638.0,705.8 L640.5,711.4 L643.0,713.5 L645.5,709.3 L648.0,708.4 L650.5,711.0 L653.0,711.8 L655.5,709.4 L658.0,702.7 L660.5,699.1 L663.0,695.1 L665.5,691.2 L668.0,692.4 L670.5,691.2 L673.0,693.3 L675.5,693.9 L678.0,692.9 L680.5,693.2 L683.0,692.6 L685.5,693.8 L688.0,693.6 L690.5,695.0 L693.0,699.4 L695.5,703.2 L698.0,704.2 L700.5,700.4 L703.0,699.6 L705.5,700.0 L708.0,699.9 L710.5,695.3 L713.0,693.7 L715.5,694.3 L718.0,692.7 L720.5,692.1 L723.0,690.6 L725.5,690.2 L728.0,681.7 L730.5,678.6 L733.0,682.2 L735.5,684.5 L738.0,678.8 L740.5,675.2 L743.0,680.3 L745.5,684.0 L748.0,687.6 L750.5,686.0 L753.0,680.2 L755.5,684.6 L758.0,689.5 L760.5,691.9 L763.0,689.8 L765.5,687.5 L768.0,684.6 L770.5,681.6 L773.0,684.4 L775.5,683.8 L778.0,677.9 L780.5,673.9 L783.0,672.8 L785.5,671.2 L788.0,676.8 L790.5,690.9 L793.0,686.8 L795.5,674.2 L798.0,673.3 L800.5,674.2 L803.0,675.5 L805.5,674.4 L808.0,673.3 L810.5,679.9 L813.0,684.9 L815.5,662.4 L818.0,655.9 L820.5,665.0 L823.0,650.5 L825.5,644.6 L828.0,653.6 L830.5,653.6 L833.0,656.3 L835.5,649.6 L838.0,652.5 L840.5,666.8 L843.0,663.9 L845.5,656.8 L848.0,654.1 L850.5,652.6 L853.0,659.2 L855.5,665.2 L858.0,670.5 L860.5,665.2 L863.0,661.8 L865.5,660.6 L868.0,650.3 L870.5,647.3 L873.0,651.7 L875.5,658.1 L878.0,658.7 L880.5,669.0 L883.0,664.6 L885.5,657.2 L888.0,663.7 L890.5,660.8 L893.0,650.9 L895.5,653.8 L898.0,661.0 L900.5,664.0 L903.0,666.3 L905.5,656.2 L908.0,653.5 L910.5,666.7 L913.0,660.4 L915.5,654.4 L918.0,653.3 L920.5,652.0 L923.0,668.2 L925.5,668.3 L928.0,649.6 L930.5,650.8 L933.0,659.0 L935.5,664.2 L938.0,653.3 L940.5,639.4 L943.0,648.3 L945.5,644.0 L948.0,652.3 L950.5,649.0 L953.0,635.6 L955.5,639.4 L958.0,640.6 L960.5,656.1 L963.0,664.8 L965.5,665.9 L968.0,666.0 L970.5,646.2 L973.0,644.3 L975.5,645.8 L978.0,640.6 L980.5,650.5 L983.0,650.4 L985.5,656.6 L988.0,655.0 L990.5,663.5 L993.0,673.1 L995.5,669.5 L998.0,670.8 L1000.5,669.0 L1003.0,663.9 L1005.5,671.2 L1008.0,664.6 L1010.5,654.8 L1013.0,662.0 L1015.5,657.6 L1018.0,659.9 L1020.5,656.6 L1023.0,660.4 L1025.5,670.7 L1028.0,665.8 L1030.5,665.7 L1033.0,658.3 L1035.5,641.8 L1038.0,645.0 L1040.5,655.5 L1043.0,675.8 L1045.5,676.1 L1048.0,666.7 L1050.5,673.8 L1053.0,681.1 L1055.5,676.5 L1058.0,667.1 L1060.5,665.3 L1063.0,655.6 L1065.5,650.5 L1068.0,651.2 L1070.5,667.2 L1073.0,674.3 L1075.5,664.2 L1078.0,662.7 L1080.5,660.2 L1083.0,660.0 L1085.5,663.6 L1088.0,668.2 L1090.5,674.5 L1093.0,660.0 L1095.5,655.8 L1098.0,675.3 L1100.5,667.4 L1103.0,657.2 L1105.5,664.9 L1108.0,673.7 L1110.5,676.6 L1113.0,668.3 L1115.5,667.8 L1118.0,676.0 L1120.5,675.4 L1123.0,680.7 L1125.5,681.1 L1128.0,662.8 L1130.5,655.4 L1133.0,661.3 L1135.5,665.1 L1138.0,670.0 L1140.5,673.7 L1143.0,680.7 L1145.5,683.7 L1148.0,682.4 L1150.5,672.8 L1153.0,661.8 L1155.5,671.5 L1158.0,675.5 L1160.5,675.9 L1163.0,677.7 L1165.5,671.2 L1168.0,680.4 L1170.5,691.2 L1173.0,673.5 L1175.5,664.6 L1178.0,674.2 L1180.5,682.1 L1183.0,682.4 L1185.5,672.4 L1188.0,678.1 L1190.5,684.9 L1193.0,687.5 L1195.5,690.8 L1198.0,690.6 L1200.5,693.8 L1203.0,693.3 L1205.5,687.9 L1208.0,688.9 L1210.5,691.9 L1213.0,685.0 L1215.5,684.3 L1218.0,687.7 L1220.5,690.4 L1223.0,692.8 L1225.5,690.8 L1228.0,691.5 L1230.5,694.5 L1233.0,693.6 L1235.5,696.3 L1238.0,698.3 L1240.5,697.3 L1243.0,700.7 L1245.5,704.6 L1248.0,704.5 L1250.5,706.2 L1253.0,709.3 L1255.5,709.3 L1258.0,711.7 L1260.5,713.5 L1263.0,713.6 L1265.5,712.4 L1268.0,712.9 L1270.5,714.5 L1273.0,714.5 L1275.5,713.8 L1278.0,714.5 L1280.5,717.3 L1283.0,718.1 L1285.5,714.6 L1288.0,713.8 L1290.5,716.6 L1293.0,713.9 L1295.5,713.2 L1298.0,715.7 L1300.5,717.6 L1303.0,717.2 L1305.5,716.4 L1308.0,717.2 L1310.5,717.9 L1313.0,718.3 L1315.5,719.4 L1318.0,721.1 L1320.5,719.9 L1323.0,720.7 L1325.5,721.8 L1328.0,721.3 L1330.5,723.4 L1333.0,724.4 L1335.5,724.6 L1338.0,725.7 L1340.5,726.4 L1343.0,726.0 L1345.5,725.4 L1348.0,727.0 L1350.5,729.0 L1353.0,729.4 L1355.5,729.3 L1358.0,730.3 L1360.5,731.0 L1363.0,730.0 L1365.5,730.8 L1368.0,732.9 L1370.5,733.9 L1371.0,733.0" fill="none" stroke="#9D248F" stroke-width="2.0" stroke-linejoin="round"/><path d="M53.0,668.9 L55.5,660.3 L58.0,661.9 L60.5,668.0 L63.0,669.3 L65.5,668.8 L68.0,672.7 L70.5,674.3 L73.0,675.5 L75.5,677.8 L78.0,676.2 L80.5,677.6 L83.0,678.6 L85.5,681.8 L88.0,683.6 L90.5,682.0 L93.0,681.2 L95.5,681.8 L98.0,684.2 L100.5,689.7 L103.0,693.2 L105.5,692.2 L108.0,689.7 L110.5,687.0 L113.0,691.5 L115.5,692.3 L118.0,696.2 L120.5,699.2 L123.0,698.4 L125.5,701.1 L128.0,701.8 L130.5,704.0 L133.0,704.2 L135.5,704.7 L138.0,709.6 L140.5,710.6 L143.0,709.8 L145.5,710.0 L148.0,711.2 L150.5,714.3 L153.0,715.0 L155.5,712.1 L158.0,714.1 L160.5,718.1 L163.0,719.9 L165.5,721.5 L168.0,724.6 L170.5,723.4 L173.0,720.1 L175.5,723.9 L178.0,724.7 L180.5,725.0 L183.0,727.4 L185.5,724.8 L188.0,726.7 L190.5,732.3 L193.0,732.5 L195.5,729.5 L198.0,731.1 L200.5,732.4 L203.0,732.1 L205.5,734.8 L208.0,734.8 L210.5,733.1 L213.0,734.8 L215.5,737.6 L218.0,737.2 L220.5,736.7 L223.0,738.8 L225.5,739.8 L228.0,738.8 L230.5,738.6 L233.0,739.6 L235.5,740.7 L238.0,740.6 L240.5,739.3 L243.0,739.3 L245.5,740.3 L248.0,741.0 L250.5,743.1 L253.0,744.3 L255.5,744.0 L258.0,743.3 L260.5,742.4 L263.0,742.9 L265.5,742.9 L268.0,742.4 L270.5,742.3 L273.0,742.8 L275.5,743.8 L278.0,746.0 L280.5,746.9 L283.0,744.8 L285.5,745.2 L288.0,745.2 L290.5,745.4 L293.0,746.6 L295.5,748.6 L298.0,746.5 L300.5,743.3 L303.0,744.3 L305.5,744.6 L308.0,745.4 L310.5,744.0 L313.0,742.4 L315.5,743.7 L318.0,745.4 L320.5,743.8 L323.0,741.1 L325.5,743.4 L328.0,745.8 L330.5,745.7 L333.0,743.7 L335.5,742.4 L338.0,743.5 L340.5,744.1 L343.0,743.7 L345.5,743.1 L348.0,744.2 L350.5,743.7 L353.0,742.1 L355.5,742.0 L358.0,742.0 L360.5,742.5 L363.0,742.9 L365.5,742.3 L368.0,743.9 L370.5,744.7 L373.0,742.9 L375.5,743.9 L378.0,743.6 L380.5,742.4 L383.0,742.8 L385.5,742.3 L388.0,742.0 L390.5,742.6 L393.0,741.6 L395.5,741.1 L398.0,742.8 L400.5,743.4 L403.0,743.5 L405.5,745.5 L408.0,745.9 L410.5,743.4 L413.0,742.7 L415.5,742.8 L418.0,743.4 L420.5,743.1 L423.0,744.1 L425.5,743.3 L428.0,742.5 L430.5,744.0 L433.0,742.3 L435.5,742.4 L438.0,744.1 L440.5,742.8 L443.0,744.5 L445.5,745.8 L448.0,743.3 L450.5,742.2 L453.0,741.8 L455.5,742.5 L458.0,743.2 L460.5,741.7 L463.0,740.6 L465.5,741.3 L468.0,741.9 L470.5,742.2 L473.0,742.0 L475.5,742.9 L478.0,744.4 L480.5,743.9 L483.0,741.0 L485.5,740.7 L488.0,743.3 L490.5,743.4 L493.0,743.1 L495.5,743.3 L496.0,741.6" fill="none" stroke="#9D248F" stroke-opacity="0.32" stroke-width="1.6" stroke-linejoin="round"/><path d="M1371.0,739.8 L1373.0,739.3 L1375.5,738.5 L1378.0,738.5 L1380.5,739.3 L1383.0,740.9 L1385.5,740.5 L1388.0,740.1 L1390.5,739.5 L1393.0,739.6 L1395.5,742.1 L1398.0,742.7 L1400.5,743.0 L1403.0,742.9 L1405.5,742.1 L1408.0,742.7 L1410.5,742.9 L1413.0,744.1 L1415.5,743.0 L1418.0,743.2 L1420.5,745.7 L1423.0,745.4 L1425.5,745.2 L1428.0,745.3 L1430.5,746.0 L1433.0,746.5 L1435.5,745.6 L1438.0,746.0 L1440.5,747.7 L1443.0,748.1 L1445.5,747.7 L1448.0,747.8 L1450.5,747.7 L1453.0,747.4 L1455.5,746.6 L1458.0,747.1 L1460.5,749.7 L1463.0,749.8 L1465.5,748.6 L1468.0,749.9 L1470.5,751.0 L1473.0,750.7 L1475.5,751.2 L1478.0,751.9 L1480.5,751.8 L1483.0,750.9 L1485.5,752.5 L1488.0,753.5 L1490.5,751.8 L1493.0,752.2 L1495.5,754.0 L1498.0,752.9 L1500.5,753.1 L1503.0,754.2 L1505.5,754.8 L1508.0,755.5 L1510.5,754.0 L1513.0,754.5 L1515.5,755.7 L1518.0,754.5 L1520.5,753.8 L1523.0,753.7 L1525.5,754.4 L1528.0,753.8 L1530.5,753.0 L1533.0,752.5 L1535.5,753.2 L1538.0,753.2 L1540.5,752.0 L1543.0,754.1 L1545.5,754.7 L1548.0,754.2 L1550.5,753.8 L1553.0,753.9 L1555.5,753.4 L1558.0,754.1 L1560.5,756.2 L1563.0,756.6 L1565.5,756.1 L1568.0,756.5 L1570.5,757.0 L1573.0,756.9 L1575.5,756.9 L1578.0,756.3 L1580.5,755.3 L1583.0,752.4 L1585.5,752.8 L1588.0,754.0 L1590.5,754.3 L1593.0,752.1 L1595.5,750.4 L1598.0,750.5 L1600.5,749.1 L1603.0,748.4 L1605.5,747.9 L1608.0,747.8 L1610.5,747.5 L1613.0,746.8 L1615.5,745.8 L1618.0,745.9 L1620.5,745.2 L1623.0,743.3 L1625.5,743.1 L1628.0,742.4 L1630.5,741.0 L1633.0,740.1 L1635.5,738.7 L1638.0,736.0 L1640.5,736.4 L1643.0,737.3 L1645.5,736.7 L1648.0,738.5 L1650.5,736.3 L1653.0,735.0 L1655.5,735.3 L1658.0,734.4 L1660.5,733.0 L1663.0,732.0 L1665.5,732.5 L1668.0,732.4 L1670.5,732.0 L1673.0,729.1 L1675.5,725.1 L1678.0,724.5 L1680.5,722.7 L1683.0,718.9 L1685.5,717.3 L1688.0,716.0 L1690.5,714.8 L1693.0,712.3 L1695.5,709.9 L1698.0,710.1 L1700.5,709.8 L1703.0,707.5 L1705.5,706.3 L1708.0,705.6 L1710.5,706.0 L1713.0,705.6 L1715.5,704.6 L1718.0,704.5 L1720.5,703.7 L1723.0,703.9 L1725.5,704.2 L1728.0,703.5 L1730.5,703.3 L1733.0,703.6 L1735.5,703.1 L1738.0,702.3 L1740.5,702.4 L1743.0,703.2 L1745.5,704.0 L1748.0,703.4 L1750.5,702.1 L1753.0,701.8 L1755.5,703.3 L1758.0,703.8 L1760.5,701.4 L1763.0,700.4 L1765.5,700.6 L1768.0,700.1 L1770.5,699.0 L1773.0,699.1 L1775.5,699.2 L1778.0,698.5 L1780.5,699.0 L1783.0,698.5 L1785.5,694.9 L1788.0,691.6 L1790.5,689.9 L1793.0,687.5 L1795.5,685.7 L1798.0,685.2 L1800.5,683.4 L1803.0,682.5 L1805.5,682.8 L1808.0,682.2 L1810.5,684.1 L1813.0,685.5 L1815.5,684.6 L1818.0,685.9 L1820.5,687.3 L1823.0,685.7 L1825.5,685.3 L1828.0,685.9 L1830.5,685.0 L1833.0,687.2 L1835.5,689.9 L1838.0,687.9 L1840.5,687.5 L1843.0,687.6 L1845.5,688.5 L1848.0,690.2 L1850.5,689.5 L1853.0,691.0 L1855.5,691.6 L1858.0,690.8 L1860.5,692.0 L1863.0,692.3 L1865.5,692.7 L1868.0,693.4" fill="none" stroke="#9D248F" stroke-opacity="0.32" stroke-width="1.6" stroke-linejoin="round"/><path d="M496.0,741.6 L498.0,738.8 L500.5,740.2 L503.0,741.6 L505.5,740.9 L508.0,740.5 L510.5,739.5 L513.0,740.6 L515.5,739.1 L518.0,737.2 L520.5,736.8 L523.0,736.3 L525.5,737.0 L528.0,735.5 L530.5,733.0 L533.0,728.8 L535.5,726.7 L538.0,726.9 L540.5,725.5 L543.0,724.6 L545.5,722.1 L548.0,716.6 L550.5,713.4 L553.0,712.3 L555.5,711.8 L558.0,708.4 L560.5,706.1 L563.0,707.3 L565.5,705.1 L568.0,704.7 L570.5,704.5 L573.0,703.5 L575.5,703.7 L578.0,703.7 L580.5,702.4 L583.0,702.4 L585.5,700.9 L588.0,699.6 L590.5,701.0 L593.0,703.0 L595.5,703.9 L598.0,701.2 L600.5,699.3 L603.0,699.9 L605.5,700.1 L608.0,702.6 L610.5,700.1 L613.0,697.5 L615.5,697.8 L618.0,698.9 L620.5,700.8 L623.0,701.4 L625.5,701.7 L628.0,701.0 L630.5,701.9 L633.0,702.0 L635.5,701.7 L638.0,696.6 L640.5,695.6 L643.0,697.3 L645.5,699.3 L648.0,701.9 L650.5,700.7 L653.0,700.5 L655.5,700.7 L658.0,699.4 L660.5,701.7 L663.0,702.8 L665.5,700.0 L668.0,697.5 L670.5,696.8 L673.0,698.9 L675.5,699.6 L678.0,698.8 L680.5,699.0 L683.0,697.8 L685.5,697.9 L688.0,697.0 L690.5,695.3 L693.0,696.7 L695.5,700.1 L698.0,702.6 L700.5,701.0 L703.0,697.2 L705.5,695.9 L708.0,699.9 L710.5,703.5 L713.0,698.0 L715.5,693.7 L718.0,697.2 L720.5,698.9 L723.0,698.4 L725.5,699.1 L728.0,694.8 L730.5,697.1 L733.0,697.7 L735.5,692.9 L738.0,697.8 L740.5,701.1 L743.0,702.3 L745.5,701.2 L748.0,702.4 L750.5,698.6 L753.0,695.7 L755.5,701.1 L758.0,694.6 L760.5,682.1 L763.0,679.9 L765.5,690.2 L768.0,698.7 L770.5,690.3 L773.0,685.0 L775.5,687.8 L778.0,690.5 L780.5,678.7 L783.0,670.0 L785.5,676.6 L788.0,679.8 L790.5,680.5 L793.0,676.3 L795.5,676.4 L798.0,663.8 L800.5,677.3 L803.0,694.6 L805.5,682.7 L808.0,674.4 L810.5,671.4 L813.0,685.7 L815.5,693.0 L818.0,681.8 L820.5,664.3 L823.0,664.3 L825.5,669.1 L828.0,672.6 L830.5,666.4 L833.0,659.9 L835.5,668.4 L838.0,666.3 L840.5,670.5 L843.0,666.0 L845.5,651.6 L848.0,655.8 L850.5,668.0 L853.0,668.0 L855.5,659.1 L858.0,666.0 L860.5,671.1 L863.0,662.5 L865.5,661.8 L868.0,663.6 L870.5,666.7 L873.0,669.2 L875.5,659.7 L878.0,655.4 L880.5,657.9 L883.0,663.6 L885.5,669.0 L888.0,660.6 L890.5,656.6 L893.0,664.4 L895.5,673.5 L898.0,673.1 L900.5,679.1 L903.0,677.5 L905.5,668.7 L908.0,666.1 L910.5,653.7 L913.0,656.7 L915.5,667.2 L918.0,668.6 L920.5,666.2 L923.0,661.4 L925.5,654.5 L928.0,654.7 L930.5,663.7 L933.0,672.5 L935.5,645.9 L938.0,643.4 L940.5,674.2 L943.0,678.7 L945.5,673.7 L948.0,669.5 L950.5,663.6 L953.0,658.2 L955.5,664.9 L958.0,657.8 L960.5,648.6 L963.0,657.8 L965.5,654.2 L968.0,653.4 L970.5,652.5 L973.0,653.7 L975.5,664.4 L978.0,659.3 L980.5,652.8 L983.0,653.3 L985.5,644.5 L988.0,645.5 L990.5,662.0 L993.0,673.2 L995.5,669.1 L998.0,659.7 L1000.5,673.0 L1003.0,686.3 L1005.5,673.6 L1008.0,669.0 L1010.5,680.6 L1013.0,677.1 L1015.5,662.5 L1018.0,652.7 L1020.5,663.6 L1023.0,686.1 L1025.5,681.1 L1028.0,676.0 L1030.5,690.3 L1033.0,671.3 L1035.5,654.6 L1038.0,673.5 L1040.5,684.3 L1043.0,678.0 L1045.5,671.5 L1048.0,672.2 L1050.5,668.2 L1053.0,681.0 L1055.5,677.6 L1058.0,648.9 L1060.5,657.8 L1063.0,679.8 L1065.5,675.7 L1068.0,665.8 L1070.5,662.4 L1073.0,662.5 L1075.5,662.7 L1078.0,656.7 L1080.5,653.9 L1083.0,657.1 L1085.5,679.4 L1088.0,682.9 L1090.5,672.0 L1093.0,687.3 L1095.5,682.0 L1098.0,660.8 L1100.5,668.8 L1103.0,668.1 L1105.5,667.8 L1108.0,684.4 L1110.5,676.0 L1113.0,665.9 L1115.5,685.0 L1118.0,682.4 L1120.5,667.7 L1123.0,677.1 L1125.5,680.4 L1128.0,674.2 L1130.5,687.6 L1133.0,690.3 L1135.5,682.9 L1138.0,684.9 L1140.5,682.2 L1143.0,676.8 L1145.5,685.2 L1148.0,692.2 L1150.5,695.3 L1153.0,691.2 L1155.5,680.7 L1158.0,691.8 L1160.5,696.1 L1163.0,689.7 L1165.5,688.9 L1168.0,685.8 L1170.5,687.7 L1173.0,680.5 L1175.5,682.0 L1178.0,705.6 L1180.5,710.1 L1183.0,707.8 L1185.5,701.2 L1188.0,699.8 L1190.5,700.6 L1193.0,698.2 L1195.5,700.4 L1198.0,684.4 L1200.5,690.5 L1203.0,709.7 L1205.5,709.5 L1208.0,704.2 L1210.5,704.4 L1213.0,709.8 L1215.5,701.6 L1218.0,697.1 L1220.5,704.2 L1223.0,707.5 L1225.5,708.2 L1228.0,708.9 L1230.5,712.4 L1233.0,711.9 L1235.5,709.2 L1238.0,711.9 L1240.5,713.2 L1243.0,715.1 L1245.5,718.0 L1248.0,718.4 L1250.5,720.2 L1253.0,724.2 L1255.5,726.0 L1258.0,727.8 L1260.5,728.9 L1263.0,728.4 L1265.5,729.3 L1268.0,729.7 L1270.5,729.4 L1273.0,728.4 L1275.5,724.7 L1278.0,723.6 L1280.5,725.3 L1283.0,726.4 L1285.5,725.8 L1288.0,725.9 L1290.5,724.8 L1293.0,723.1 L1295.5,724.6 L1298.0,725.0 L1300.5,724.0 L1303.0,724.8 L1305.5,725.4 L1308.0,723.2 L1310.5,723.1 L1313.0,723.0 L1315.5,723.5 L1318.0,725.8 L1320.5,725.1 L1323.0,726.7 L1325.5,730.4 L1328.0,730.1 L1330.5,729.9 L1333.0,731.3 L1335.5,731.1 L1338.0,731.3 L1340.5,732.4 L1343.0,731.0 L1345.5,730.6 L1348.0,732.0 L1350.5,734.2 L1353.0,735.4 L1355.5,735.9 L1358.0,736.1 L1360.5,734.9 L1363.0,737.6 L1365.5,741.4 L1368.0,740.7 L1370.5,739.0 L1371.0,739.8" fill="none" stroke="#9D248F" stroke-width="2.0" stroke-linejoin="round"/><path d="M53.0,701.0 L55.5,703.7 L58.0,709.0 L60.5,710.5 L63.0,710.6 L65.5,709.8 L68.0,709.6 L70.5,714.1 L73.0,714.2 L75.5,708.7 L78.0,709.3 L80.5,710.7 L83.0,713.1 L85.5,714.1 L88.0,715.2 L90.5,717.7 L93.0,714.5 L95.5,712.8 L98.0,712.2 L100.5,714.9 L103.0,711.8 L105.5,713.7 L108.0,716.0 L110.5,714.2 L113.0,711.8 L115.5,714.0 L118.0,721.6 L120.5,722.0 L123.0,722.7 L125.5,723.3 L128.0,724.8 L130.5,729.6 L133.0,730.4 L135.5,730.9 L138.0,734.9 L140.5,735.4 L143.0,736.8 L145.5,739.8 L148.0,740.8 L150.5,746.7 L153.0,747.7 L155.5,747.4 L158.0,750.8 L160.5,745.6 L163.0,745.2 L165.5,751.1 L168.0,753.0 L170.5,749.6 L173.0,748.3 L175.5,747.6 L178.0,745.3 L180.5,746.4 L183.0,747.8 L185.5,750.0 L188.0,749.8 L190.5,748.7 L193.0,746.2 L195.5,743.0 L198.0,743.6 L200.5,746.9 L203.0,745.4 L205.5,741.1 L208.0,742.3 L210.5,745.1 L213.0,743.0 L215.5,741.0 L218.0,741.4 L220.5,743.3 L223.0,745.5 L225.5,744.3 L228.0,743.6 L230.5,743.1 L233.0,743.4 L235.5,743.0 L238.0,742.0 L240.5,741.6 L243.0,742.6 L245.5,743.0 L248.0,744.0 L250.5,742.7 L253.0,742.5 L255.5,745.3 L258.0,746.0 L260.5,745.3 L263.0,742.5 L265.5,741.9 L268.0,744.7 L270.5,745.4 L273.0,743.9 L275.5,743.7 L278.0,744.1 L280.5,744.5 L283.0,743.1 L285.5,742.8 L288.0,745.6 L290.5,747.9 L293.0,747.1 L295.5,745.3 L298.0,747.1 L300.5,747.7 L303.0,745.4 L305.5,745.8 L308.0,748.0 L310.5,750.0 L313.0,749.0 L315.5,748.3 L318.0,748.7 L320.5,749.6 L323.0,750.5 L325.5,749.9 L328.0,748.9 L330.5,748.6 L333.0,749.6 L335.5,746.6 L338.0,748.0 L340.5,751.9 L343.0,751.1 L345.5,751.0 L348.0,751.6 L350.5,752.4 L353.0,751.4 L355.5,751.6 L358.0,753.3 L360.5,753.3 L363.0,751.8 L365.5,751.7 L368.0,752.0 L370.5,752.6 L373.0,755.3 L375.5,755.9 L378.0,754.4 L380.5,753.1 L383.0,753.0 L385.5,754.0 L388.0,754.0 L390.5,753.2 L393.0,751.5 L395.5,751.4 L398.0,753.1 L400.5,753.5 L403.0,755.6 L405.5,754.9 L408.0,752.5 L410.5,754.5 L413.0,754.9 L415.5,754.2 L418.0,755.4 L420.5,755.6 L423.0,754.8 L425.5,755.7 L428.0,758.0 L430.5,756.2 L433.0,754.6 L435.5,756.5 L438.0,756.6 L440.5,754.9 L443.0,754.7 L445.5,756.5 L448.0,756.1 L450.5,755.6 L453.0,757.0 L455.5,756.2 L458.0,756.4 L460.5,757.7 L463.0,758.2 L465.5,758.5 L468.0,756.3 L470.5,756.3 L473.0,758.3 L475.5,758.4 L478.0,756.6 L480.5,755.9 L483.0,756.4 L485.5,753.9 L488.0,754.1 L490.5,753.8 L493.0,751.1 L495.5,751.6 L496.0,751.8" fill="none" stroke="#9D248F" stroke-opacity="0.32" stroke-width="1.6" stroke-linejoin="round"/><path d="M1371.0,769.0 L1373.0,766.8 L1375.5,764.7 L1378.0,764.4 L1380.5,764.6 L1383.0,764.3 L1385.5,763.5 L1388.0,763.0 L1390.5,763.9 L1393.0,764.6 L1395.5,762.6 L1398.0,762.0 L1400.5,762.4 L1403.0,761.3 L1405.5,761.5 L1408.0,761.5 L1410.5,762.2 L1413.0,764.1 L1415.5,764.2 L1418.0,764.0 L1420.5,766.5 L1423.0,769.3 L1425.5,769.1 L1428.0,768.3 L1430.5,769.7 L1433.0,771.8 L1435.5,771.4 L1438.0,772.6 L1440.5,773.7 L1443.0,774.0 L1445.5,774.6 L1448.0,774.6 L1450.5,775.5 L1453.0,776.3 L1455.5,778.0 L1458.0,777.6 L1460.5,776.9 L1463.0,778.4 L1465.5,778.6 L1468.0,780.1 L1470.5,779.7 L1473.0,780.4 L1475.5,781.4 L1478.0,780.5 L1480.5,782.6 L1483.0,782.6 L1485.5,780.6 L1488.0,780.2 L1490.5,781.7 L1493.0,782.8 L1495.5,783.8 L1498.0,784.6 L1500.5,785.3 L1503.0,784.0 L1505.5,784.0 L1508.0,783.7 L1510.5,783.4 L1513.0,784.2 L1515.5,783.1 L1518.0,785.0 L1520.5,786.7 L1523.0,787.1 L1525.5,786.2 L1528.0,784.8 L1530.5,786.3 L1533.0,787.1 L1535.5,787.6 L1538.0,788.0 L1540.5,788.0 L1543.0,787.9 L1545.5,789.6 L1548.0,790.6 L1550.5,788.9 L1553.0,790.1 L1555.5,791.8 L1558.0,791.7 L1560.5,791.9 L1563.0,791.7 L1565.5,791.8 L1568.0,790.7 L1570.5,789.9 L1573.0,791.1 L1575.5,792.9 L1578.0,795.2 L1580.5,795.2 L1583.0,794.3 L1585.5,795.7 L1588.0,796.0 L1590.5,795.9 L1593.0,796.9 L1595.5,795.7 L1598.0,795.9 L1600.5,797.5 L1603.0,796.7 L1605.5,796.1 L1608.0,795.0 L1610.5,794.0 L1613.0,793.8 L1615.5,790.4 L1618.0,787.1 L1620.5,783.2 L1623.0,783.0 L1625.5,785.6 L1628.0,785.7 L1630.5,783.3 L1633.0,782.8 L1635.5,783.4 L1638.0,783.3 L1640.5,782.8 L1643.0,781.9 L1645.5,781.9 L1648.0,782.2 L1650.5,782.5 L1653.0,783.0 L1655.5,783.7 L1658.0,783.0 L1660.5,782.1 L1663.0,780.5 L1665.5,779.5 L1668.0,779.4 L1670.5,778.5 L1673.0,777.1 L1675.5,775.9 L1678.0,774.6 L1680.5,773.1 L1683.0,770.7 L1685.5,770.7 L1688.0,771.6 L1690.5,769.4 L1693.0,769.4 L1695.5,768.3 L1698.0,766.5 L1700.5,766.6 L1703.0,765.1 L1705.5,764.8 L1708.0,764.3 L1710.5,762.4 L1713.0,759.8 L1715.5,757.9 L1718.0,758.0 L1720.5,759.3 L1723.0,758.9 L1725.5,756.7 L1728.0,755.4 L1730.5,755.0 L1733.0,755.2 L1735.5,753.1 L1738.0,751.4 L1740.5,751.3 L1743.0,749.2 L1745.5,747.3 L1748.0,748.0 L1750.5,748.1 L1753.0,746.1 L1755.5,745.0 L1758.0,745.0 L1760.5,744.1 L1763.0,743.6 L1765.5,742.4 L1768.0,739.6 L1770.5,738.8 L1773.0,737.8 L1775.5,736.7 L1778.0,737.5 L1780.5,738.2 L1783.0,736.8 L1785.5,734.7 L1788.0,732.5 L1790.5,730.7 L1793.0,731.1 L1795.5,731.6 L1798.0,730.4 L1800.5,729.5 L1803.0,730.8 L1805.5,731.5 L1808.0,729.8 L1810.5,728.8 L1813.0,729.3 L1815.5,729.0 L1818.0,727.7 L1820.5,725.7 L1823.0,723.7 L1825.5,723.0 L1828.0,722.1 L1830.5,723.2 L1833.0,724.8 L1835.5,723.7 L1838.0,723.3 L1840.5,723.9 L1843.0,723.1 L1845.5,721.1 L1848.0,721.9 L1850.5,723.7 L1853.0,721.7 L1855.5,721.7 L1858.0,721.7 L1860.5,719.1 L1863.0,718.3 L1865.5,717.0 L1868.0,716.6" fill="none" stroke="#9D248F" stroke-opacity="0.32" stroke-width="1.6" stroke-linejoin="round"/><path d="M496.0,751.8 L498.0,752.3 L500.5,753.2 L503.0,753.7 L505.5,755.3 L508.0,755.6 L510.5,756.2 L513.0,757.7 L515.5,756.6 L518.0,757.2 L520.5,759.2 L523.0,759.1 L525.5,760.2 L528.0,762.3 L530.5,762.4 L533.0,759.2 L535.5,758.8 L538.0,760.0 L540.5,759.2 L543.0,759.5 L545.5,759.4 L548.0,760.6 L550.5,761.1 L553.0,759.3 L555.5,759.8 L558.0,760.5 L560.5,760.8 L563.0,760.5 L565.5,759.1 L568.0,758.5 L570.5,756.1 L573.0,754.3 L575.5,757.6 L578.0,758.8 L580.5,759.5 L583.0,761.7 L585.5,758.3 L588.0,756.5 L590.5,761.0 L593.0,759.7 L595.5,756.8 L598.0,757.3 L600.5,756.5 L603.0,756.3 L605.5,756.5 L608.0,757.6 L610.5,756.6 L613.0,756.2 L615.5,756.2 L618.0,756.1 L620.5,757.2 L623.0,755.6 L625.5,755.3 L628.0,755.2 L630.5,753.9 L633.0,756.1 L635.5,754.8 L638.0,754.0 L640.5,757.0 L643.0,755.5 L645.5,755.8 L648.0,757.6 L650.5,753.4 L653.0,747.4 L655.5,744.0 L658.0,736.9 L660.5,731.4 L663.0,727.8 L665.5,726.2 L668.0,722.4 L670.5,724.1 L673.0,726.1 L675.5,722.8 L678.0,723.4 L680.5,722.4 L683.0,722.4 L685.5,729.3 L688.0,724.9 L690.5,723.1 L693.0,726.8 L695.5,725.2 L698.0,725.3 L700.5,727.4 L703.0,728.8 L705.5,725.2 L708.0,721.8 L710.5,722.0 L713.0,727.2 L715.5,724.8 L718.0,722.5 L720.5,725.9 L723.0,719.2 L725.5,720.6 L728.0,725.4 L730.5,728.2 L733.0,733.2 L735.5,725.5 L738.0,719.3 L740.5,716.3 L743.0,711.7 L745.5,717.1 L748.0,720.4 L750.5,715.5 L753.0,714.1 L755.5,716.4 L758.0,719.1 L760.5,714.9 L763.0,708.8 L765.5,707.5 L768.0,715.4 L770.5,704.6 L773.0,688.9 L775.5,698.3 L778.0,702.5 L780.5,704.4 L783.0,708.4 L785.5,710.6 L788.0,698.9 L790.5,690.5 L793.0,691.7 L795.5,691.9 L798.0,692.5 L800.5,690.8 L803.0,686.0 L805.5,682.2 L808.0,683.4 L810.5,681.1 L813.0,681.4 L815.5,677.1 L818.0,685.7 L820.5,693.1 L823.0,693.1 L825.5,685.8 L828.0,668.4 L830.5,670.3 L833.0,680.6 L835.5,689.0 L838.0,696.2 L840.5,698.9 L843.0,701.9 L845.5,699.0 L848.0,690.4 L850.5,681.3 L853.0,684.7 L855.5,686.2 L858.0,676.5 L860.5,683.2 L863.0,689.5 L865.5,691.0 L868.0,684.8 L870.5,686.6 L873.0,693.5 L875.5,684.4 L878.0,676.7 L880.5,670.3 L883.0,665.9 L885.5,682.5 L888.0,681.9 L890.5,676.3 L893.0,684.3 L895.5,675.5 L898.0,673.7 L900.5,676.8 L903.0,686.4 L905.5,690.9 L908.0,684.2 L910.5,670.2 L913.0,657.3 L915.5,680.1 L918.0,685.3 L920.5,660.8 L923.0,675.6 L925.5,675.9 L928.0,673.0 L930.5,689.9 L933.0,686.2 L935.5,686.2 L938.0,674.4 L940.5,658.8 L943.0,667.0 L945.5,675.3 L948.0,675.8 L950.5,678.9 L953.0,674.1 L955.5,655.7 L958.0,663.5 L960.5,676.6 L963.0,679.6 L965.5,695.8 L968.0,690.9 L970.5,680.7 L973.0,674.1 L975.5,676.5 L978.0,685.2 L980.5,680.9 L983.0,685.0 L985.5,675.6 L988.0,673.4 L990.5,684.5 L993.0,691.7 L995.5,676.4 L998.0,665.0 L1000.5,692.6 L1003.0,690.6 L1005.5,672.8 L1008.0,687.9 L1010.5,708.2 L1013.0,697.0 L1015.5,675.2 L1018.0,670.5 L1020.5,672.9 L1023.0,671.4 L1025.5,668.8 L1028.0,675.8 L1030.5,681.8 L1033.0,684.0 L1035.5,684.1 L1038.0,672.9 L1040.5,677.9 L1043.0,687.8 L1045.5,679.1 L1048.0,675.8 L1050.5,682.1 L1053.0,684.6 L1055.5,681.8 L1058.0,686.5 L1060.5,694.7 L1063.0,687.6 L1065.5,680.6 L1068.0,675.5 L1070.5,674.7 L1073.0,685.4 L1075.5,692.4 L1078.0,690.5 L1080.5,684.4 L1083.0,678.7 L1085.5,680.9 L1088.0,678.6 L1090.5,678.2 L1093.0,685.7 L1095.5,679.1 L1098.0,681.3 L1100.5,686.2 L1103.0,689.0 L1105.5,688.2 L1108.0,688.4 L1110.5,702.8 L1113.0,701.8 L1115.5,697.7 L1118.0,693.4 L1120.5,687.0 L1123.0,679.9 L1125.5,682.2 L1128.0,688.1 L1130.5,690.9 L1133.0,685.8 L1135.5,680.6 L1138.0,695.4 L1140.5,704.5 L1143.0,694.3 L1145.5,690.1 L1148.0,718.2 L1150.5,726.7 L1153.0,711.3 L1155.5,689.2 L1158.0,682.8 L1160.5,703.2 L1163.0,710.3 L1165.5,709.9 L1168.0,714.2 L1170.5,712.1 L1173.0,711.5 L1175.5,700.8 L1178.0,710.3 L1180.5,718.6 L1183.0,701.3 L1185.5,711.2 L1188.0,717.9 L1190.5,715.0 L1193.0,708.7 L1195.5,705.2 L1198.0,712.0 L1200.5,705.0 L1203.0,703.1 L1205.5,710.2 L1208.0,712.8 L1210.5,714.1 L1213.0,714.1 L1215.5,720.8 L1218.0,727.7 L1220.5,731.8 L1223.0,733.5 L1225.5,733.1 L1228.0,733.8 L1230.5,734.8 L1233.0,736.2 L1235.5,738.5 L1238.0,741.5 L1240.5,740.5 L1243.0,736.2 L1245.5,732.4 L1248.0,733.0 L1250.5,733.3 L1253.0,734.8 L1255.5,735.4 L1258.0,733.4 L1260.5,733.0 L1263.0,734.2 L1265.5,733.6 L1268.0,733.4 L1270.5,733.5 L1273.0,733.4 L1275.5,734.4 L1278.0,735.3 L1280.5,736.4 L1283.0,737.6 L1285.5,738.5 L1288.0,737.4 L1290.5,736.2 L1293.0,736.5 L1295.5,737.7 L1298.0,738.7 L1300.5,738.8 L1303.0,740.4 L1305.5,742.2 L1308.0,741.6 L1310.5,741.4 L1313.0,742.5 L1315.5,743.9 L1318.0,745.1 L1320.5,744.8 L1323.0,745.5 L1325.5,746.4 L1328.0,747.8 L1330.5,750.9 L1333.0,751.0 L1335.5,751.6 L1338.0,753.0 L1340.5,753.4 L1343.0,756.5 L1345.5,758.8 L1348.0,758.6 L1350.5,758.6 L1353.0,759.6 L1355.5,760.8 L1358.0,761.9 L1360.5,762.3 L1363.0,762.9 L1365.5,764.4 L1368.0,764.4 L1370.5,767.0 L1371.0,769.0" fill="none" stroke="#9D248F" stroke-width="2.0" stroke-linejoin="round"/></g></svg>
<svg width="1900" height="1470" viewBox="0 0 1900 1470"><text x="152.0" y="76.0" font-size="19.62" fill="#333333" stroke="#333333" stroke-width="0.35" textLength="76.0" lengthAdjust="spacingAndGlyphs">Calendar</text><text x="262.3" y="76.0" font-size="19.62" fill="#333333" stroke="#333333" stroke-width="0.35" textLength="47.4" lengthAdjust="spacingAndGlyphs">Chain</text><text x="344.8" y="76.0" font-size="19.62" fill="#333333" stroke="#333333" stroke-width="0.35" textLength="66.2" lengthAdjust="spacingAndGlyphs">Capsule</text><text x="474.0" y="76.0" font-size="19.62" fill="#333333" stroke="#333333" stroke-width="0.35" textLength="78.0" lengthAdjust="spacingAndGlyphs">One Lane</text><text x="587.0" y="76.0" font-size="19.62" fill="#333333" stroke="#333333" stroke-width="0.35" textLength="85.0" lengthAdjust="spacingAndGlyphs">One Y-Axis</text><text x="707.0" y="76.0" font-size="19.62" fill="#333333" stroke="#333333" stroke-width="0.35" textLength="58.0" lengthAdjust="spacingAndGlyphs">Spread</text><text x="801.0" y="76.0" font-size="19.62" fill="#333333" stroke="#333333" stroke-width="0.35" textLength="54.0" lengthAdjust="spacingAndGlyphs">Labels</text><text x="906.5" y="78.0" font-size="19.62" fill="#333333" stroke="#333333" stroke-width="0.35" textLength="85.5" lengthAdjust="spacingAndGlyphs">Alignment</text><text x="1019.8" y="78.0" font-size="19.62" fill="#333333" stroke="#333333" stroke-width="0.35" textLength="75.5" lengthAdjust="spacingAndGlyphs">Dimming</text><text x="1148.0" y="76.0" font-size="19.62" fill="#aaaaaa" stroke="#aaaaaa" stroke-width="0.35" textLength="47.0" lengthAdjust="spacingAndGlyphs">Zoom</text><text x="1222.0" y="76.0" font-size="19.62" fill="#333333" stroke="#333333" stroke-width="0.35" textLength="54.7" lengthAdjust="spacingAndGlyphs">Export</text><text x="1303.0" y="76.0" font-size="19.62" fill="#aaaaaa" stroke="#aaaaaa" stroke-width="0.35" textLength="76.0" lengthAdjust="spacingAndGlyphs">Annotate</text><text x="42.5" y="199.8" font-size="22.35" fill="#4055A3" stroke="#4055A3" stroke-width="0.35" text-anchor="end">28</text><text x="42.5" y="267.8" font-size="22.35" fill="#4055A3" stroke="#4055A3" stroke-width="0.35" text-anchor="end">14</text><text x="42.5" y="335.7" font-size="22.35" fill="#4055A3" stroke="#4055A3" stroke-width="0.35" text-anchor="end">0</text><text x="42.5" y="365.4" font-size="22.35" fill="#068C45" stroke="#068C45" stroke-width="0.35" text-anchor="end">105</text><text x="42.5" y="433.6" font-size="22.35" fill="#068C45" stroke="#068C45" stroke-width="0.35" text-anchor="end">93</text><text x="42.5" y="501.4" font-size="22.35" fill="#068C45" stroke="#068C45" stroke-width="0.35" text-anchor="end">82</text><text x="42.5" y="569.9" font-size="22.35" fill="#068C45" stroke="#068C45" stroke-width="0.35" text-anchor="end">71</text><text x="42.5" y="600.8" font-size="22.35" fill="#9D248F" stroke="#9D248F" stroke-width="0.35" text-anchor="end">79</text><text x="42.5" y="668.7" font-size="22.35" fill="#9D248F" stroke="#9D248F" stroke-width="0.35" text-anchor="end">76</text><text x="42.5" y="736.2" font-size="22.35" fill="#9D248F" stroke="#9D248F" stroke-width="0.35" text-anchor="end">72</text><text x="42.5" y="805.6" font-size="22.35" fill="#9D248F" stroke="#9D248F" stroke-width="0.35" text-anchor="end">68</text><clipPath id="c42"><rect x="0" y="122" width="50" height="30"/></clipPath><g clip-path="url(#c42)"><text x="42.5" y="132.6" font-size="22.35" fill="#4055A3" stroke="#4055A3" stroke-width="0.35" text-anchor="end">42</text></g><text x="100.0" y="837.5" font-size="22.50" fill="#7c8792" stroke="#7c8792" stroke-width="0.35" textLength="33.7" lengthAdjust="spacingAndGlyphs">-8h</text><text x="290.0" y="837.5" font-size="22.50" fill="#7c8792" stroke="#7c8792" stroke-width="0.35" textLength="33.0" lengthAdjust="spacingAndGlyphs">-4h</text><text x="480.0" y="837.5" font-size="22.50" fill="#7c8792" stroke="#7c8792" stroke-width="0.35" textLength="33.0" lengthAdjust="spacingAndGlyphs">0.0</text><text x="672.8" y="837.5" font-size="22.50" fill="#7c8792" stroke="#7c8792" stroke-width="0.35" textLength="26.2" lengthAdjust="spacingAndGlyphs">4h</text><text x="862.6" y="837.5" font-size="22.50" fill="#7c8792" stroke="#7c8792" stroke-width="0.35" textLength="26.2" lengthAdjust="spacingAndGlyphs">8h</text><text x="1046.8" y="837.5" font-size="22.50" fill="#7c8792" stroke="#7c8792" stroke-width="0.35" textLength="38.7" lengthAdjust="spacingAndGlyphs">12h</text><text x="1236.6" y="837.5" font-size="22.50" fill="#7c8792" stroke="#7c8792" stroke-width="0.35" textLength="38.7" lengthAdjust="spacingAndGlyphs">16h</text><text x="1425.4" y="837.5" font-size="22.50" fill="#7c8792" stroke="#7c8792" stroke-width="0.35" textLength="38.6" lengthAdjust="spacingAndGlyphs">20h</text><text x="1622.0" y="837.5" font-size="22.50" fill="#7c8792" stroke="#7c8792" stroke-width="0.35" textLength="25.0" lengthAdjust="spacingAndGlyphs">1d</text><text x="1788.8" y="837.5" font-size="22.50" fill="#7c8792" stroke="#7c8792" stroke-width="0.35" textLength="71.7" lengthAdjust="spacingAndGlyphs">1d 04h</text><text x="67.4" y="877.4" font-size="22.20" fill="#0f7962" stroke="#0f7962" stroke-width="0.35" textLength="181.6" lengthAdjust="spacingAndGlyphs">8/7/2018 11:16 PM</text><text x="255.0" y="877.4" font-size="22.20" fill="#0f7962" stroke="#0f7962" stroke-width="0.35" textLength="40.4" lengthAdjust="spacingAndGlyphs">PDT</text><rect x="255" y="880" width="40.4" height="1.6" fill="#0f7962"/><text x="809.5" y="877.6" font-size="22.20" fill="#0f7962" stroke="#0f7962" stroke-width="0.5" textLength="81.8" lengthAdjust="spacingAndGlyphs">1 month</text><text x="1654.6" y="877.3" font-size="22.20" fill="#0f7962" stroke="#0f7962" stroke-width="0.35" textLength="169.4" lengthAdjust="spacingAndGlyphs">9/7/2018 9:16 AM</text><text x="1829.5" y="877.3" font-size="22.20" fill="#0f7962" stroke="#0f7962" stroke-width="0.35" textLength="40.5" lengthAdjust="spacingAndGlyphs">PDT</text><rect x="1829.5" y="880" width="40.5" height="1.6" fill="#0f7962"/><text x="135.8" y="964.5" font-size="19.50" fill="#8c8c8c" stroke="#8c8c8c" stroke-width="0.35" textLength="61.0" lengthAdjust="spacingAndGlyphs">Oct &#x27;17</text><text x="590.6" y="964.5" font-size="19.50" fill="#8c8c8c" stroke="#8c8c8c" stroke-width="0.35" textLength="41.6" lengthAdjust="spacingAndGlyphs">2018</text><text x="1015.9" y="964.5" font-size="19.50" fill="#8c8c8c" stroke="#8c8c8c" stroke-width="0.35" textLength="61.5" lengthAdjust="spacingAndGlyphs">Apr &#x27;18</text><text x="1458.0" y="964.5" font-size="19.50" fill="#8c8c8c" stroke="#8c8c8c" stroke-width="0.35" textLength="58.3" lengthAdjust="spacingAndGlyphs">Jul &#x27;18</text><text x="54.3" y="1013.0" font-size="22.20" fill="#0f7962" stroke="#0f7962" stroke-width="0.35" textLength="86.7" lengthAdjust="spacingAndGlyphs">9/7/2017</text><text x="930.0" y="1013.0" font-size="22.20" fill="#0f7962" stroke="#0f7962" stroke-width="0.5" textLength="59.0" lengthAdjust="spacingAndGlyphs">1 year</text><text x="1775.8" y="1013.7" font-size="22.20" fill="#0f7962" stroke="#0f7962" stroke-width="0.35" textLength="87.8" lengthAdjust="spacingAndGlyphs">9/7/2018</text><text x="57.9" y="1060.0" font-size="23.98" fill="#fff" font-weight="bold" textLength="72.9" lengthAdjust="spacingAndGlyphs">Details</text><text x="867.6" y="1060.0" font-size="22.53" fill="#333333" stroke="#333333" stroke-width="0.35" textLength="95.4" lengthAdjust="spacingAndGlyphs">Customize</text><text x="319.0" y="1115.3" font-size="23.26" fill="#333333" font-weight="bold" textLength="64.0" lengthAdjust="spacingAndGlyphs">Name</text><text x="638.0" y="1115.0" font-size="23.26" fill="#333333" font-weight="bold" textLength="70.0" lengthAdjust="spacingAndGlyphs">Assets</text><text x="723.0" y="1115.0" font-size="23.26" fill="#0f7962" font-weight="bold" textLength="52.8" lengthAdjust="spacingAndGlyphs">Lane</text><text x="273.0" y="1164.0" font-size="23.26" fill="#333333" stroke="#333333" stroke-width="0.35" textLength="31.5" lengthAdjust="spacingAndGlyphs">kW</text><text x="319.0" y="1164.0" font-size="23.26" fill="#333333" font-weight="bold" textLength="210.0" lengthAdjust="spacingAndGlyphs">Compressor Power</text><text x="638.0" y="1163.5" font-size="23.26" fill="#0f7962" stroke="#0f7962" stroke-width="0.35" textLength="68.0" lengthAdjust="spacingAndGlyphs">Area A</text><rect x="638" y="1166.5" width="68" height="1.8" fill="#0f7962"/><text x="790.8" y="1164.0" font-size="23.26" fill="#333333" stroke="#333333" stroke-width="0.35" textLength="10.5" lengthAdjust="spacingAndGlyphs">1</text><text x="272.4" y="1210.0" font-size="23.26" fill="#333333" stroke="#333333" stroke-width="0.35" textLength="20.2" lengthAdjust="spacingAndGlyphs">°F</text><text x="319.0" y="1210.0" font-size="23.26" fill="#333333" font-weight="bold" textLength="142.8" lengthAdjust="spacingAndGlyphs">Temperature</text><text x="638.0" y="1209.5" font-size="23.26" fill="#0f7962" stroke="#0f7962" stroke-width="0.35" textLength="68.0" lengthAdjust="spacingAndGlyphs">Area A</text><rect x="638" y="1212.5" width="68" height="1.8" fill="#0f7962"/><text x="790.8" y="1210.0" font-size="23.26" fill="#333333" stroke="#333333" stroke-width="0.35" textLength="10.5" lengthAdjust="spacingAndGlyphs">2</text><text x="272.4" y="1255.5" font-size="23.26" fill="#333333" stroke="#333333" stroke-width="0.35" textLength="20.2" lengthAdjust="spacingAndGlyphs">°F</text><text x="319.0" y="1255.5" font-size="23.26" fill="#333333" font-weight="bold" textLength="98.0" lengthAdjust="spacingAndGlyphs">Wet Bulb</text><text x="638.0" y="1255.0" font-size="23.26" fill="#0f7962" stroke="#0f7962" stroke-width="0.35" textLength="68.0" lengthAdjust="spacingAndGlyphs">Area A</text><rect x="638" y="1258.0" width="68" height="1.8" fill="#0f7962"/><text x="790.8" y="1255.5" font-size="23.26" fill="#333333" stroke="#333333" stroke-width="0.35" textLength="10.5" lengthAdjust="spacingAndGlyphs">3</text><text x="319.0" y="1301.0" font-size="23.26" fill="#333333" font-weight="bold" textLength="294.0" lengthAdjust="spacingAndGlyphs">Compressor Profile Search</text><text x="638.0" y="1300.5" font-size="23.26" fill="#0f7962" stroke="#0f7962" stroke-width="0.35" textLength="68.0" lengthAdjust="spacingAndGlyphs">Area A</text><rect x="638" y="1303.5" width="68" height="1.8" fill="#0f7962"/><text x="1055.6" y="1060.3" font-size="23.98" fill="#fff" font-weight="bold" textLength="97.8" lengthAdjust="spacingAndGlyphs">Capsules</text><text x="1103.0" y="1123.7" font-size="23.26" fill="#333333" font-weight="bold" textLength="54.7" lengthAdjust="spacingAndGlyphs">Start</text><text x="1434.7" y="1123.0" font-size="23.26" fill="#0f7962" font-weight="bold" textLength="108.3" lengthAdjust="spacingAndGlyphs">Similarity</text><text x="1102.5" y="1171.0" font-size="23.26" fill="#333333" stroke="#333333" stroke-width="0.35" textLength="222.8" lengthAdjust="spacingAndGlyphs">Aug 23, 2018 6:42 AM</text><text x="1434.7" y="1171.0" font-size="23.26" fill="#333333" stroke="#333333" stroke-width="0.35" textLength="59.1" lengthAdjust="spacingAndGlyphs">100%</text><text x="1102.5" y="1216.8" font-size="23.26" fill="#333333" stroke="#333333" stroke-width="0.35" textLength="222.8" lengthAdjust="spacingAndGlyphs">Aug 19, 2018 6:42 AM</text><text x="1434.7" y="1216.8" font-size="23.26" fill="#333333" stroke="#333333" stroke-width="0.35" textLength="78.9" lengthAdjust="spacingAndGlyphs">99.77%</text><text x="1102.5" y="1262.6" font-size="23.26" fill="#333333" stroke="#333333" stroke-width="0.35" textLength="210.2" lengthAdjust="spacingAndGlyphs">Sep 2, 2018 6:42 AM</text><text x="1434.7" y="1262.6" font-size="23.26" fill="#333333" stroke="#333333" stroke-width="0.35" textLength="78.9" lengthAdjust="spacingAndGlyphs">99.68%</text><text x="1102.5" y="1308.4" font-size="23.26" fill="#333333" stroke="#333333" stroke-width="0.35" textLength="210.2" lengthAdjust="spacingAndGlyphs">Sep 1, 2018 6:44 AM</text><text x="1434.7" y="1308.4" font-size="23.26" fill="#333333" stroke="#333333" stroke-width="0.35" textLength="78.9" lengthAdjust="spacingAndGlyphs">99.63%</text><text x="1102.5" y="1354.2" font-size="23.26" fill="#333333" stroke="#333333" stroke-width="0.35" textLength="222.8" lengthAdjust="spacingAndGlyphs">Aug 31, 2018 6:42 AM</text><text x="1434.7" y="1354.2" font-size="23.26" fill="#333333" stroke="#333333" stroke-width="0.35" textLength="78.9" lengthAdjust="spacingAndGlyphs">99.43%</text><text x="1102.5" y="1400.0" font-size="23.26" fill="#333333" stroke="#333333" stroke-width="0.35" textLength="222.8" lengthAdjust="spacingAndGlyphs">Aug 18, 2018 6:44 AM</text><text x="1434.7" y="1400.0" font-size="23.26" fill="#333333" stroke="#333333" stroke-width="0.35" textLength="78.9" lengthAdjust="spacingAndGlyphs">98.08%</text><path d="M38.6,33.7 L38.6,69.9 L75.9,69.9" fill="none" stroke="#fff" stroke-width="4.6"/><polyline points="43.2,56.3 47.2,61.6 53.6,49.4 58.8,55.2 64.6,38.6 70.4,60.6 72.7,48.2" fill="none" stroke="#fff" stroke-width="3.6" stroke-linejoin="round" stroke-linecap="round"/><polyline points="88.6,50.2 98.5,59.8 108.3,50.2" fill="none" stroke="#e2e2e2" stroke-width="4.8"/><rect x="176.1" y="28.7" width="27.8" height="25.3" rx="2.5" fill="#333"/><rect x="178.3" y="35.6" width="4.6" height="4.4" fill="#f4f4f4"/><rect x="184.6" y="35.6" width="4.6" height="4.4" fill="#f4f4f4"/><rect x="190.8" y="35.6" width="4.6" height="4.4" fill="#f4f4f4"/><rect x="197.1" y="35.6" width="4.6" height="4.4" fill="#f4f4f4"/><rect x="178.3" y="41.6" width="4.6" height="4.4" fill="#f4f4f4"/><rect x="184.6" y="41.6" width="4.6" height="4.4" fill="#f4f4f4"/><rect x="190.8" y="41.6" width="4.6" height="4.4" fill="#f4f4f4"/><rect x="197.1" y="41.6" width="4.6" height="4.4" fill="#f4f4f4"/><rect x="178.3" y="47.6" width="4.6" height="4.4" fill="#f4f4f4"/><rect x="184.6" y="47.6" width="4.6" height="4.4" fill="#f4f4f4"/><rect x="190.8" y="47.6" width="4.6" height="4.4" fill="#f4f4f4"/><rect x="197.1" y="47.6" width="4.6" height="4.4" fill="#f4f4f4"/><rect x="181.4" y="23.8" width="4.4" height="8" rx="2" fill="#333"/><rect x="194.1" y="23.8" width="4.4" height="8" rx="2" fill="#333"/><rect x="182.5" y="25" width="2.2" height="5.5" rx="1" fill="#f4f4f4"/><rect x="195.2" y="25" width="2.2" height="5.5" rx="1" fill="#f4f4f4"/><g transform="translate(286.3,38.1) rotate(45)"><rect x="-15.2" y="-5.6" width="15" height="11.2" rx="5.2" fill="none" stroke="#333" stroke-width="4.2"/><rect x="0.2" y="-5.6" width="15" height="11.2" rx="5.2" fill="none" stroke="#333" stroke-width="4.2"/></g><rect x="362.7" y="30.3" width="30.3" height="6.3" rx="1.5" fill="#333"/><rect x="384" y="32.6" width="7" height="1.8" fill="#ececec"/><rect x="362.7" y="39.1" width="30.3" height="6.3" rx="1.5" fill="#333"/><rect x="373.4" y="41.4" width="17.600000000000023" height="1.8" fill="#ececec"/><rect x="362.7" y="47.7" width="30.3" height="6.3" rx="1.5" fill="#333"/><rect x="379.7" y="50.0" width="11.300000000000011" height="1.8" fill="#ececec"/><path d="M482.7,32.2 L488.2,23.5 L494.2,32.2 L490.2,32.2 L490.2,53.5 L486.1,53.5 L486.1,32.2 Z" fill="#333"/><path d="M493.2,47.4 L498.9,53.9 L505,47.4 L500.9,47.4 L500.9,24.1 L496.9,24.1 L496.9,47.4 Z" fill="#333"/><path d="M511.8,26.1 L511.8,51.1 L545,51.1" fill="none" stroke="#333" stroke-width="1.8"/><polyline points="515.5,46.2 524.6,39.3 529.7,43.4 539,34" fill="none" stroke="#333" stroke-width="3.4"/><path d="M534.5,30 L543,28.6 L541.5,37 Z" fill="#333"/><path d="M599.5,32.2 L605.0,23.5 L611.0,32.2 L607.0,32.2 L607.0,53.5 L602.9,53.5 L602.9,32.2 Z" fill="#333"/><path d="M610.0,47.4 L615.6999999999999,53.9 L621.8,47.4 L617.6999999999999,47.4 L617.6999999999999,24.1 L613.6999999999999,24.1 L613.6999999999999,47.4 Z" fill="#333"/><path d="M628.5999999999999,26.1 L628.5999999999999,51.1 L661.8,51.1" fill="none" stroke="#333" stroke-width="1.8"/><polyline points="632.3,46.2 641.4,39.3 646.5,43.4 655.8,34" fill="none" stroke="#333" stroke-width="3.4"/><path d="M651.3,30 L659.8,28.6 L658.3,37 Z" fill="#333"/><path d="M712,29 L718.6,20.7 L725.3,29 L720.6,29 L720.6,35.3 L716.6,35.3 L716.6,29 Z" fill="#333"/><path d="M712,48.8 L718.6,57.1 L725.3,48.8 L720.6,48.8 L720.6,41 L716.6,41 L716.6,48.8 Z" fill="#333"/><path d="M732.8,26.1 L732.8,51.1 L766,51.1" fill="none" stroke="#333" stroke-width="1.8"/><polyline points="736.5,46.2 745.6,39.3 750.7,43.4 760,34" fill="none" stroke="#333" stroke-width="3.4"/><path d="M755.5,30 L764,28.6 L762.5,37 Z" fill="#333"/><path d="M807,28.6 Q807,26.1 809.5,26.1 L818.5,26.1 L832,39.6 Q833,40.8 832,42 L823,51 Q821.8,52 820.6,51 L807,37.4 Z" fill="#333"/><circle cx="811.8" cy="31.6" r="2.1" fill="#f4f4f4"/><path d="M836.7,41 L847.7,41 L842.2,46.6 Z" fill="#333"/><rect x="934.9" y="27" width="15.1" height="2.5" fill="#333"/><circle cx="930.7" cy="44.7" r="3.1" fill="none" stroke="#333" stroke-width="2"/><circle cx="953" cy="44.7" r="3.1" fill="none" stroke="#333" stroke-width="2"/><polyline points="935.6,40.8 945.4,31.6 952.1,38.6" fill="none" stroke="#333" stroke-width="2.2"/><polyline points="937.4,47.8 943.6,37 948.3,42.4" fill="none" stroke="#333" stroke-width="2.2"/><path d="M962,43 L972.5,43 L967.25,49 Z" fill="#333"/><polyline points="1035.2,45.5 1040.7,27.2 1046.5,44.2 1049.2,38.6" fill="none" stroke="#333" stroke-width="3.3" stroke-linejoin="round"/><circle cx="1050.5" cy="32.8" r="1.9" fill="#333"/><circle cx="1051.4" cy="38.1" r="1.9" fill="#333"/><circle cx="1053.2" cy="44.4" r="1.9" fill="#333"/><circle cx="1058.6" cy="44.4" r="1.9" fill="#333"/><circle cx="1054.1" cy="50.2" r="1.9" fill="#333"/><circle cx="1062.2" cy="48.6" r="1.9" fill="#333"/><path d="M1068.8,43 L1079.6,43 L1074.2,49 Z" fill="#333"/><circle cx="1169.1" cy="37.9" r="9.4" fill="none" stroke="#9a9a9a" stroke-width="4.4"/><path d="M1163.9,38 L1174.5,38 M1169.2,32.8 L1169.2,43.2" stroke="#9a9a9a" stroke-width="1.9"/><path d="M1177.3,46.5 L1183.2,52.4" stroke="#9a9a9a" stroke-width="4.5" stroke-linecap="round"/><path d="M1236.3,35.4 L1230.5,35.4 Q1229.4,35.4 1229.4,36.6 L1229.4,48.6 Q1229.4,49.8 1230.6,49.8 L1253,49.8 Q1254.2,49.8 1254.2,48.6 L1254.2,36.6 Q1254.2,35.4 1253,35.4 L1247.3,35.4" fill="none" stroke="#333" stroke-width="2.5"/><rect x="1240.1" y="30.5" width="3.1" height="14.4" fill="#333"/><path d="M1235.1,31 L1241.7,23.8 L1248.4,31 Z" fill="#333"/><path d="M1260.6,41 L1271.0,41 L1265.8,46.7 Z" fill="#333"/><path d="M1331.5,42.5 C1326,39 1327.5,30 1336,28.6 C1343,27 1352,28 1354,34 C1356,41 1348,44.5 1340,44.2 C1337,44.2 1334.5,43.6 1333,43.2 C1332,45.5 1330,47 1327.7,47.9 C1329.5,46.2 1331,44.5 1331.5,42.5 Z" fill="none" stroke="#9a9a9a" stroke-width="2.4" stroke-linejoin="round"/><circle cx="1335.9" cy="36" r="1.6" fill="#9a9a9a"/><circle cx="1341.3" cy="36" r="1.6" fill="#9a9a9a"/><circle cx="1346.5" cy="36" r="1.6" fill="#9a9a9a"/><path d="M23,1039.6 L23,1060.8 L52.1,1060.8" fill="none" stroke="#fff" stroke-width="2.1"/><path d="M26.1,1058.1 L26.1,1049.9 L32.6,1041.6 L40.5,1049.9 L45.6,1045.8 L49.7,1058.1 Z" fill="#fff"/><polygon points="853.66,1050.64 853.66,1052.36 851.63,1053.32 851.12,1054.55 851.87,1056.66 850.66,1057.87 848.55,1057.12 847.32,1057.63 846.36,1059.66 844.64,1059.66 843.68,1057.63 842.45,1057.12 840.34,1057.87 839.13,1056.66 839.88,1054.55 839.37,1053.32 837.34,1052.36 837.34,1050.64 839.37,1049.68 839.88,1048.45 839.13,1046.34 840.34,1045.13 842.45,1045.88 843.68,1045.37 844.64,1043.34 846.36,1043.34 847.32,1045.37 848.55,1045.88 850.66,1045.13 851.87,1046.34 851.12,1048.45 851.63,1049.68" fill="#333"/><circle cx="845.5" cy="1051.5" r="2.9519999999999995" fill="#fff"/><polygon points="862.07,1044.02 862.07,1044.98 860.94,1045.52 860.65,1046.21 861.07,1047.39 860.39,1048.07 859.21,1047.65 858.52,1047.94 857.98,1049.07 857.02,1049.07 856.48,1047.94 855.79,1047.65 854.61,1048.07 853.93,1047.39 854.35,1046.21 854.06,1045.52 852.93,1044.98 852.93,1044.02 854.06,1043.48 854.35,1042.79 853.93,1041.61 854.61,1040.93 855.79,1041.35 856.48,1041.06 857.02,1039.93 857.98,1039.93 858.52,1041.06 859.21,1041.35 860.39,1040.93 861.07,1041.61 860.65,1042.79 860.94,1043.48" fill="#333"/><circle cx="857.5" cy="1044.5" r="1.656" fill="#fff"/><polygon points="862.07,1057.52 862.07,1058.48 860.94,1059.02 860.65,1059.71 861.07,1060.89 860.39,1061.57 859.21,1061.15 858.52,1061.44 857.98,1062.57 857.02,1062.57 856.48,1061.44 855.79,1061.15 854.61,1061.57 853.93,1060.89 854.35,1059.71 854.06,1059.02 852.93,1058.48 852.93,1057.52 854.06,1056.98 854.35,1056.29 853.93,1055.11 854.61,1054.43 855.79,1054.85 856.48,1054.56 857.02,1053.43 857.98,1053.43 858.52,1054.56 859.21,1054.85 860.39,1054.43 861.07,1055.11 860.65,1056.29 860.94,1056.98" fill="#333"/><circle cx="857.5" cy="1058" r="1.656" fill="#fff"/><path d="M146.85,1101.25 L159.35,1113.75 M159.35,1101.25 L146.85,1113.75" stroke="#777" stroke-width="4.5" stroke-linecap="butt"/><rect x="185.5" y="1096.8" width="18" height="18" rx="4.0" fill="none" stroke="#333333" stroke-width="2"/><path d="M281.6,1104.82 L297.0,1104.82 L289.3,1096 Z" fill="#888"/><path d="M281.6,1108.18 L297.0,1108.18 L289.3,1117.0 Z" fill="#888"/><path d="M398.7,1104.82 L414.09999999999997,1104.82 L406.4,1096 Z" fill="#888"/><path d="M398.7,1108.18 L414.09999999999997,1108.18 L406.4,1117.0 Z" fill="#888"/><path d="M791.6,1104.8 L806.6,1104.8 L799.1,1096.8 Z" fill="#0f7962"/><rect x="940.8" y="1090.5" width="21.6" height="19.4" fill="none" stroke="#333" stroke-width="1.9"/><line x1="948.0" y1="1090.5" x2="948.0" y2="1109.9" stroke="#333" stroke-width="1.6"/><line x1="940.8" y1="1097.0" x2="962.4" y2="1097.0" stroke="#333" stroke-width="1.6"/><line x1="955.2" y1="1090.5" x2="955.2" y2="1109.9" stroke="#333" stroke-width="1.6"/><line x1="940.8" y1="1103.4" x2="962.4" y2="1103.4" stroke="#333" stroke-width="1.6"/><circle cx="959.2" cy="1104.4" r="8.3" fill="#333"/><path d="M953.2,1104.4 L965.2,1104.4 M959.2,1098.4 L959.2,1110.4" stroke="#fff" stroke-width="3.6"/><g transform="translate(0.00,0.00)"><path d="M80.8,1143.6 C77.5,1143.9 74.5,1145 71.5,1147.2 L67.3,1150.9 L61.6,1151.3 C60.6,1151.4 60.2,1152 59.8,1152.8 L57.8,1157.2 C57.6,1158 58.2,1158.5 59,1158.2 L62.6,1157.2 L66.9,1161.3 L66.1,1165.4 C66,1166.3 66.6,1166.9 67.5,1166.5 L72.2,1164 C72.9,1163.6 73.2,1163 73.2,1162.3 L73.4,1158.3 L77.4,1154 C79.8,1151 80.9,1147.5 80.8,1143.6 Z" fill="#0f7962"/><circle cx="76.4" cy="1148.2" r="1.5" fill="#fff"/></g><circle cx="113.1" cy="1154.7" r="11.0" fill="#0f7962"/><rect x="111.3" y="1151.7" width="4" height="9.5" fill="#fff"/><rect x="108.6" y="1151.7" width="5" height="2.6" fill="#fff"/><rect x="108.6" y="1159.2" width="9.5" height="2.4" fill="#fff"/><circle cx="113.3" cy="1148.7" r="2.2" fill="#fff"/><path d="M147.0,1149.4 L159.2,1161.6 M159.2,1149.4 L147.0,1161.6" stroke="#0f7962" stroke-width="4.8" stroke-linecap="butt"/><rect x="185.7" y="1144.9" width="18.1" height="18.1" rx="4.0200000000000005" fill="none" stroke="#333333" stroke-width="2"/><polyline points="230.1,1155.5 235.6,1139.1 243.8,1161.0 249.9,1148.7 254,1163.7 257.5,1155.5" fill="none" stroke="#4055A3" stroke-width="3" stroke-linejoin="round" stroke-linecap="round"/><g transform="translate(0.00,46.10)"><path d="M80.8,1143.6 C77.5,1143.9 74.5,1145 71.5,1147.2 L67.3,1150.9 L61.6,1151.3 C60.6,1151.4 60.2,1152 59.8,1152.8 L57.8,1157.2 C57.6,1158 58.2,1158.5 59,1158.2 L62.6,1157.2 L66.9,1161.3 L66.1,1165.4 C66,1166.3 66.6,1166.9 67.5,1166.5 L72.2,1164 C72.9,1163.6 73.2,1163 73.2,1162.3 L73.4,1158.3 L77.4,1154 C79.8,1151 80.9,1147.5 80.8,1143.6 Z" fill="#0f7962"/><circle cx="76.4" cy="1148.2" r="1.5" fill="#fff"/></g><circle cx="113.1" cy="1200.8" r="11.0" fill="#0f7962"/><rect x="111.3" y="1197.8" width="4" height="9.5" fill="#fff"/><rect x="108.6" y="1197.8" width="5" height="2.6" fill="#fff"/><rect x="108.6" y="1205.3" width="9.5" height="2.4" fill="#fff"/><circle cx="113.3" cy="1194.8" r="2.2" fill="#fff"/><path d="M147.0,1195.5 L159.2,1207.6999999999998 M159.2,1195.5 L147.0,1207.6999999999998" stroke="#0f7962" stroke-width="4.8" stroke-linecap="butt"/><rect x="185.7" y="1191.0" width="18.1" height="18.1" rx="4.0200000000000005" fill="none" stroke="#333333" stroke-width="2"/><polyline points="230.1,1201.6 235.6,1185.1999999999998 243.8,1207.1 249.9,1194.8 254,1209.8 257.5,1201.6" fill="none" stroke="#068C45" stroke-width="3" stroke-linejoin="round" stroke-linecap="round"/><g transform="translate(0.00,91.80)"><path d="M80.8,1143.6 C77.5,1143.9 74.5,1145 71.5,1147.2 L67.3,1150.9 L61.6,1151.3 C60.6,1151.4 60.2,1152 59.8,1152.8 L57.8,1157.2 C57.6,1158 58.2,1158.5 59,1158.2 L62.6,1157.2 L66.9,1161.3 L66.1,1165.4 C66,1166.3 66.6,1166.9 67.5,1166.5 L72.2,1164 C72.9,1163.6 73.2,1163 73.2,1162.3 L73.4,1158.3 L77.4,1154 C79.8,1151 80.9,1147.5 80.8,1143.6 Z" fill="#0f7962"/><circle cx="76.4" cy="1148.2" r="1.5" fill="#fff"/></g><circle cx="113.1" cy="1246.5" r="11.0" fill="#0f7962"/><rect x="111.3" y="1243.5" width="4" height="9.5" fill="#fff"/><rect x="108.6" y="1243.5" width="5" height="2.6" fill="#fff"/><rect x="108.6" y="1251.0" width="9.5" height="2.4" fill="#fff"/><circle cx="113.3" cy="1240.5" r="2.2" fill="#fff"/><path d="M147.0,1241.2 L159.2,1253.3999999999999 M159.2,1241.2 L147.0,1253.3999999999999" stroke="#0f7962" stroke-width="4.8" stroke-linecap="butt"/><rect x="185.7" y="1236.7" width="18.1" height="18.1" rx="4.0200000000000005" fill="none" stroke="#333333" stroke-width="2"/><polyline points="230.1,1247.3 235.6,1230.8999999999999 243.8,1252.8 249.9,1240.5 254,1255.5 257.5,1247.3" fill="none" stroke="#9D248F" stroke-width="3" stroke-linejoin="round" stroke-linecap="round"/><g transform="translate(0.00,137.70)"><path d="M80.8,1143.6 C77.5,1143.9 74.5,1145 71.5,1147.2 L67.3,1150.9 L61.6,1151.3 C60.6,1151.4 60.2,1152 59.8,1152.8 L57.8,1157.2 C57.6,1158 58.2,1158.5 59,1158.2 L62.6,1157.2 L66.9,1161.3 L66.1,1165.4 C66,1166.3 66.6,1166.9 67.5,1166.5 L72.2,1164 C72.9,1163.6 73.2,1163 73.2,1162.3 L73.4,1158.3 L77.4,1154 C79.8,1151 80.9,1147.5 80.8,1143.6 Z" fill="#0f7962"/><circle cx="76.4" cy="1148.2" r="1.5" fill="#fff"/></g><circle cx="113.1" cy="1292.4" r="11.0" fill="#0f7962"/><rect x="111.3" y="1289.4" width="4" height="9.5" fill="#fff"/><rect x="108.6" y="1289.4" width="5" height="2.6" fill="#fff"/><rect x="108.6" y="1296.9" width="9.5" height="2.4" fill="#fff"/><circle cx="113.3" cy="1286.4" r="2.2" fill="#fff"/><path d="M147.0,1287.1000000000001 L159.2,1299.3 M159.2,1287.1000000000001 L147.0,1299.3" stroke="#0f7962" stroke-width="4.8" stroke-linecap="butt"/><rect x="185.7" y="1282.6000000000001" width="18.1" height="18.1" rx="4.0200000000000005" fill="none" stroke="#333333" stroke-width="2"/><rect x="232.4" y="1275.8" width="10.4" height="27.7" rx="2" fill="#CE561B"/><rect x="244.6" y="1275.8" width="10.8" height="27.7" rx="2" fill="#CE561B"/><polyline points="232.4,1293 235,1283 238,1297 241,1284 244,1297 247,1283 250.5,1297 253,1284 255.4,1292" fill="none" stroke="#fff" stroke-width="1.8"/><path d="M28,1283.3 L13,1283.3 Q11.2,1283.3 11.2,1285 L11.2,1299 Q11.2,1300.6 13,1300.6 L27.5,1300.6 Q29.3,1300.6 29.3,1299 L29.3,1292" fill="none" stroke="#107a60" stroke-width="1.9"/><path d="M19.6,1297.2 L20.4,1292.6 L31.5,1281.5 L35.6,1285.6 L24.5,1296.7 Z" fill="#107a60"/><path d="M22,1292.5 L31,1283.5" stroke="#fff" stroke-width="0.9"/><path d="M1032.5,1035.4 L1028.1,1035.4 L1028.1,1059.8 L1032.5,1059.8" fill="none" stroke="#fff" stroke-width="2.6" stroke-linejoin="round" stroke-linecap="round"/><path d="M1039.5,1035.4 L1043.9,1035.4 L1043.9,1059.8 L1039.5,1059.8" fill="none" stroke="#fff" stroke-width="2.6" stroke-linejoin="round" stroke-linecap="round"/><polyline points="1031.6,1044.4 1033.1,1051.4 1035.6,1039.5 1038.4,1056.0 1040.8,1047.1" fill="none" stroke="#fff" stroke-width="2.08" stroke-linejoin="round" stroke-linecap="round"/><rect x="1015.9" y="1105.0" width="17.6" height="17.6" rx="3.9200000000000004" fill="none" stroke="#333333" stroke-width="2"/><path d="M1172.9,1112.694 L1188.5,1112.694 L1180.7,1104 Z" fill="#888"/><path d="M1172.9,1116.006 L1188.5,1116.006 L1180.7,1124.7 Z" fill="#888"/><path d="M1557.7,1116 L1572.9,1116 L1565.3,1124 Z" fill="#0f7962"/><rect x="1636.8" y="1096.6" width="21.6" height="19.4" fill="none" stroke="#333" stroke-width="1.9"/><line x1="1644.0" y1="1096.6" x2="1644.0" y2="1116.0" stroke="#333" stroke-width="1.6"/><line x1="1636.8" y1="1103.1" x2="1658.3999999999999" y2="1103.1" stroke="#333" stroke-width="1.6"/><line x1="1651.2" y1="1096.6" x2="1651.2" y2="1116.0" stroke="#333" stroke-width="1.6"/><line x1="1636.8" y1="1109.5" x2="1658.3999999999999" y2="1109.5" stroke="#333" stroke-width="1.6"/><circle cx="1655.2" cy="1110.5" r="8.3" fill="#333"/><path d="M1649.2,1110.5 L1661.2,1110.5 M1655.2,1104.5 L1655.2,1116.5" stroke="#fff" stroke-width="3.6"/><rect x="1688.3" y="1082" width="2" height="51.7" fill="#d6d6d6"/><rect x="1726.5" y="1096.6" width="21.6" height="19.4" fill="none" stroke="#4055A3" stroke-width="1.9"/><line x1="1733.7" y1="1096.6" x2="1733.7" y2="1116.0" stroke="#4055A3" stroke-width="1.6"/><line x1="1726.5" y1="1103.1" x2="1748.1" y2="1103.1" stroke="#4055A3" stroke-width="1.6"/><line x1="1740.9" y1="1096.6" x2="1740.9" y2="1116.0" stroke="#4055A3" stroke-width="1.6"/><line x1="1726.5" y1="1109.5" x2="1748.1" y2="1109.5" stroke="#4055A3" stroke-width="1.6"/><circle cx="1744.9" cy="1110.5" r="8.3" fill="#4055A3"/><path d="M1738.9,1110.5 L1750.9,1110.5 M1744.9,1104.5 L1744.9,1116.5" stroke="#fff" stroke-width="3.6"/><rect x="1790.3999999999999" y="1096.6" width="21.6" height="19.4" fill="none" stroke="#068C45" stroke-width="1.9"/><line x1="1797.6" y1="1096.6" x2="1797.6" y2="1116.0" stroke="#068C45" stroke-width="1.6"/><line x1="1790.3999999999999" y1="1103.1" x2="1811.9999999999998" y2="1103.1" stroke="#068C45" stroke-width="1.6"/><line x1="1804.8" y1="1096.6" x2="1804.8" y2="1116.0" stroke="#068C45" stroke-width="1.6"/><line x1="1790.3999999999999" y1="1109.5" x2="1811.9999999999998" y2="1109.5" stroke="#068C45" stroke-width="1.6"/><circle cx="1808.8" cy="1110.5" r="8.3" fill="#068C45"/><path d="M1802.8,1110.5 L1814.8,1110.5 M1808.8,1104.5 L1808.8,1116.5" stroke="#fff" stroke-width="3.6"/><rect x="1854.8" y="1096.6" width="21.6" height="19.4" fill="none" stroke="#9D248F" stroke-width="1.9"/><line x1="1862.0" y1="1096.6" x2="1862.0" y2="1116.0" stroke="#9D248F" stroke-width="1.6"/><line x1="1854.8" y1="1103.1" x2="1876.3999999999999" y2="1103.1" stroke="#9D248F" stroke-width="1.6"/><line x1="1869.2" y1="1096.6" x2="1869.2" y2="1116.0" stroke="#9D248F" stroke-width="1.6"/><line x1="1854.8" y1="1109.5" x2="1876.3999999999999" y2="1109.5" stroke="#9D248F" stroke-width="1.6"/><circle cx="1873.2" cy="1110.5" r="8.3" fill="#9D248F"/><path d="M1867.2,1110.5 L1879.2,1110.5 M1873.2,1104.5 L1873.2,1116.5" stroke="#fff" stroke-width="3.6"/><circle cx="1824.2" cy="1050.5" r="7.6" fill="none" stroke="#2a2a2a" stroke-width="3.4"/><path d="M1820.2,1050.5 L1828.2,1050.5 M1824.2,1046.5 L1824.2,1054.5" stroke="#2a2a2a" stroke-width="1.8"/><path d="M1830,1056.5 L1835.6,1062" stroke="#2a2a2a" stroke-width="3.2" stroke-linecap="round"/><rect x="1860" y="1042.5" width="17" height="16.5" rx="3" fill="none" stroke="#777" stroke-width="1.8"/><rect x="1863.5" y="1049.8" width="10" height="1.8" fill="#777"/><rect x="1015.9" y="1153.5" width="18" height="18" rx="4.0" fill="none" stroke="#333333" stroke-width="2"/><path d="M1070.3,1147.2 L1065.9,1147.2 L1065.9,1172.2 L1070.3,1172.2" fill="none" stroke="#CE561B" stroke-width="3" stroke-linejoin="round" stroke-linecap="round"/><path d="M1077.5,1147.2 L1081.9,1147.2 L1081.9,1172.2 L1077.5,1172.2" fill="none" stroke="#CE561B" stroke-width="3" stroke-linejoin="round" stroke-linecap="round"/><polyline points="1069.3,1156.3 1070.9,1163.6 1073.5,1151.3 1076.4,1168.4 1078.8,1159.1" fill="none" stroke="#CE561B" stroke-width="2.40" stroke-linejoin="round" stroke-linecap="round"/><rect x="1015.9" y="1199.3" width="18" height="18" rx="4.0" fill="none" stroke="#333333" stroke-width="2"/><path d="M1070.3,1193.0 L1065.9,1193.0 L1065.9,1218.0 L1070.3,1218.0" fill="none" stroke="#CE561B" stroke-width="3" stroke-linejoin="round" stroke-linecap="round"/><path d="M1077.5,1193.0 L1081.9,1193.0 L1081.9,1218.0 L1077.5,1218.0" fill="none" stroke="#CE561B" stroke-width="3" stroke-linejoin="round" stroke-linecap="round"/><polyline points="1069.3,1202.1 1070.9,1209.4 1073.5,1197.1 1076.4,1214.2 1078.8,1204.9" fill="none" stroke="#CE561B" stroke-width="2.40" stroke-linejoin="round" stroke-linecap="round"/><rect x="1015.9" y="1245.1" width="18" height="18" rx="4.0" fill="none" stroke="#333333" stroke-width="2"/><path d="M1070.3,1238.8 L1065.9,1238.8 L1065.9,1263.8 L1070.3,1263.8" fill="none" stroke="#CE561B" stroke-width="3" stroke-linejoin="round" stroke-linecap="round"/><path d="M1077.5,1238.8 L1081.9,1238.8 L1081.9,1263.8 L1077.5,1263.8" fill="none" stroke="#CE561B" stroke-width="3" stroke-linejoin="round" stroke-linecap="round"/><polyline points="1069.3,1247.9 1070.9,1255.2 1073.5,1242.9 1076.4,1260.0 1078.8,1250.7" fill="none" stroke="#CE561B" stroke-width="2.40" stroke-linejoin="round" stroke-linecap="round"/><rect x="1015.9" y="1290.9" width="18" height="18" rx="4.0" fill="none" stroke="#333333" stroke-width="2"/><path d="M1070.3,1284.6 L1065.9,1284.6 L1065.9,1309.6 L1070.3,1309.6" fill="none" stroke="#CE561B" stroke-width="3" stroke-linejoin="round" stroke-linecap="round"/><path d="M1077.5,1284.6 L1081.9,1284.6 L1081.9,1309.6 L1077.5,1309.6" fill="none" stroke="#CE561B" stroke-width="3" stroke-linejoin="round" stroke-linecap="round"/><polyline points="1069.3,1293.7 1070.9,1301.0 1073.5,1288.7 1076.4,1305.8 1078.8,1296.5" fill="none" stroke="#CE561B" stroke-width="2.40" stroke-linejoin="round" stroke-linecap="round"/><rect x="1015.9" y="1336.7" width="18" height="18" rx="4.0" fill="none" stroke="#333333" stroke-width="2"/><path d="M1070.3,1330.4 L1065.9,1330.4 L1065.9,1355.4 L1070.3,1355.4" fill="none" stroke="#CE561B" stroke-width="3" stroke-linejoin="round" stroke-linecap="round"/><path d="M1077.5,1330.4 L1081.9,1330.4 L1081.9,1355.4 L1077.5,1355.4" fill="none" stroke="#CE561B" stroke-width="3" stroke-linejoin="round" stroke-linecap="round"/><polyline points="1069.3,1339.5 1070.9,1346.8 1073.5,1334.5 1076.4,1351.6 1078.8,1342.3" fill="none" stroke="#CE561B" stroke-width="2.40" stroke-linejoin="round" stroke-linecap="round"/><rect x="1015.9" y="1382.5" width="18" height="18" rx="4.0" fill="none" stroke="#333333" stroke-width="2"/><path d="M1070.3,1376.2 L1065.9,1376.2 L1065.9,1401.2 L1070.3,1401.2" fill="none" stroke="#CE561B" stroke-width="3" stroke-linejoin="round" stroke-linecap="round"/><path d="M1077.5,1376.2 L1081.9,1376.2 L1081.9,1401.2 L1077.5,1401.2" fill="none" stroke="#CE561B" stroke-width="3" stroke-linejoin="round" stroke-linecap="round"/><polyline points="1069.3,1385.3 1070.9,1392.6 1073.5,1380.3 1076.4,1397.4 1078.8,1388.1" fill="none" stroke="#CE561B" stroke-width="2.40" stroke-linejoin="round" stroke-linecap="round"/><rect x="1349.5" y="1146" width="12" height="27.5" rx="2.5" fill="#CE561B"/><polyline points="1345.3,1158.5 1349,1165 1353,1151 1357,1167 1361,1157 1366,1163.5" fill="none" stroke="#CE561B" stroke-width="2.4" stroke-linejoin="round" stroke-linecap="round"/><clipPath id="refc"><rect x="1349.5" y="1146" width="12" height="27.5"/></clipPath><polyline clip-path="url(#refc)" points="1345.3,1158.5 1349,1165 1353,1151 1357,1167 1361,1157 1366,1163.5" fill="none" stroke="#fff" stroke-width="2.2" stroke-linejoin="round"/><rect x="25.9" y="856.3" width="4" height="18" fill="#0f7962"/><path d="M17.9,871.5 L27.9,882.6 L37.9,871.5 Z" fill="#0f7962"/><rect x="25.9" y="995" width="4" height="18.6" fill="#0f7962"/><path d="M17.9,997 L27.9,985.8 L37.9,997 Z" fill="#0f7962"/><path d="M714,855.5 L699.7,869.3 L714,883 Z M728,855.5 L713.7,869.3 L728,883 Z" fill="#0f7962"/><path d="M773.4,856 L758.7,869.3 L773.4,882.5 Z" fill="#0f7962"/><path d="M928,856 L943.7,869.3 L928,882.5 Z" fill="#0f7962"/><path d="M973,855.5 L987.3,869.3 L973,883 Z M987.5,855.5 L1001.9,869.3 L987.5,883 Z" fill="#0f7962"/><path d="M1030.6,855.5 L1044.5,869.3 L1030.6,883 Z" fill="#0f7962"/><rect x="1044.5" y="855.5" width="4.5" height="27.5" fill="#0f7962"/><path d="M1084.5,867 A8,8 0 0 1 1098,863.5" fill="none" stroke="#0f7962" stroke-width="3"/><path d="M1101.4,859.5 L1101.4,868 L1093,868 Z" fill="#0f7962"/><path d="M1098.7,873.5 A8,8 0 0 1 1085.2,877" fill="none" stroke="#0f7962" stroke-width="3"/><path d="M1081.8,881 L1081.8,872.5 L1090.2,872.5 Z" fill="#0f7962"/><rect x="54" y="914" width="1612" height="24" rx="4" fill="#f8f8f8" stroke="#c9c9c9" stroke-width="4"/><rect x="1668" y="914" width="152" height="23" fill="#fff"/><rect x="53.6" y="916" width="4.799999999999997" height="20" fill="#e7c2b8" fill-opacity="0.9"/><rect x="157" y="916" width="8" height="20" fill="#efd0c6" fill-opacity="0.9"/><rect x="269" y="916" width="11.699999999999989" height="20" fill="#efd0c6" fill-opacity="0.9"/><rect x="292.8" y="916" width="7.699999999999989" height="20" fill="#efd0c6" fill-opacity="0.9"/><rect x="329" y="916" width="19.5" height="20" fill="#efd0c6" fill-opacity="0.9"/><rect x="444.4" y="916" width="7.600000000000023" height="20" fill="#efd0c6" fill-opacity="0.9"/><rect x="555.7" y="916" width="16.0" height="20" fill="#efd0c6" fill-opacity="0.9"/><rect x="580" y="916" width="7.7000000000000455" height="20" fill="#efd0c6" fill-opacity="0.9"/><rect x="619.7" y="916" width="19.799999999999955" height="20" fill="#efd0c6" fill-opacity="0.9"/><rect x="735" y="916" width="7.7000000000000455" height="20" fill="#efd0c6" fill-opacity="0.9"/><rect x="847" y="916" width="12" height="20" fill="#efd0c6" fill-opacity="0.9"/><rect x="871" y="916" width="7.7000000000000455" height="20" fill="#efd0c6" fill-opacity="0.9"/><rect x="911" y="916" width="15.700000000000045" height="20" fill="#efd0c6" fill-opacity="0.9"/><rect x="1025.9" y="916" width="8.299999999999955" height="20" fill="#efd0c6" fill-opacity="0.9"/><rect x="1138" y="916" width="11.700000000000045" height="20" fill="#efd0c6" fill-opacity="0.9"/><rect x="1161.5" y="916" width="8.299999999999955" height="20" fill="#efd0c6" fill-opacity="0.9"/><rect x="1201.6" y="916" width="16.100000000000136" height="20" fill="#efd0c6" fill-opacity="0.9"/><rect x="1317" y="916" width="8" height="20" fill="#efd0c6" fill-opacity="0.9"/><rect x="1429" y="916" width="11.5" height="20" fill="#efd0c6" fill-opacity="0.9"/><rect x="1452.7" y="916" width="7.7999999999999545" height="20" fill="#efd0c6" fill-opacity="0.9"/><rect x="1492.3" y="916" width="16.200000000000045" height="20" fill="#efd0c6" fill-opacity="0.9"/><rect x="1608.4" y="916" width="7.7999999999999545" height="20" fill="#efd0c6" fill-opacity="0.9"/><rect x="1720" y="916" width="11.700000000000045" height="20" fill="#efd0c6" fill-opacity="0.9"/><rect x="1744" y="916" width="7.7999999999999545" height="20" fill="#efd0c6" fill-opacity="0.9"/><rect x="1779" y="916" width="20" height="20" fill="#efd0c6" fill-opacity="0.9"/><rect x="165.5" y="940" width="1.6" height="6" fill="#c9c9c9"/><rect x="610.6" y="940" width="1.6" height="6" fill="#c9c9c9"/><rect x="1045.6000000000001" y="940" width="1.6" height="6" fill="#c9c9c9"/><rect x="1486.2" y="940" width="1.6" height="6" fill="#c9c9c9"/><rect x="1668" y="912" width="152" height="4.4" fill="#0f7962"/><rect x="1668" y="934.7" width="152" height="4.8" fill="#0f7962"/><rect x="1663" y="906.3" width="9.6" height="39.5" fill="#0f7962"/><rect x="1666.3" y="910" width="3" height="32" fill="#fff"/><rect x="1815.6" y="906.3" width="10.1" height="39.5" fill="#0f7962"/><rect x="1819" y="910" width="3" height="32" fill="#fff"/><rect x="1835.8" y="910" width="35.7" height="35.8" fill="#0f7962"/><rect x="1842.2" y="913.6" width="10.7" height="27.9" rx="2" fill="#fff"/><rect x="1855.2" y="913.6" width="10.1" height="27.9" rx="2" fill="#fff"/><polyline points="1842.2,927.3 1848.1,917.8 1851.7,937.9 1856.4,923.7 1860,917.8 1864.7,937.9 1865.6,933" fill="none" stroke="#0f7962" stroke-width="1.8"/></svg>
<div id="overlay"><div style="position:absolute;left:1011px;top:97px;width:418px;height:118px;background:#fff;border:1.5px solid #c0c0c0;border-radius:5px;box-sizing:border-box;box-shadow:0 5px 12px rgba(0,0,0,0.18)"></div><div style="position:absolute;left:1012px;top:108px;width:416px;height:48px;background:#0f7962"></div><div style="position:absolute;left:1444px;top:110px;width:446px;height:80px;background:rgba(0,0,0,0.9);border-radius:7px"></div><div style="position:absolute;left:1002px;top:9px;width:126px;height:97px;border:10px solid #fd3b3b;box-sizing:border-box"></div></div>
<svg width="1900" height="1470" viewBox="0 0 1900 1470"><path d="M1434,150 L1444,140 L1444,160 Z" fill="#000" fill-opacity="0.9"/><text x="1091.0" y="139.7" font-size="23.98" fill="#fff" font-weight="bold" textLength="296.0" lengthAdjust="spacingAndGlyphs">Show data outside conditions</text><text x="1091.0" y="187.0" font-size="23.98" fill="#333333" stroke="#333333" stroke-width="0.35" textLength="266.0" lengthAdjust="spacingAndGlyphs">Show only selected signals</text><text x="1494.0" y="142.0" font-size="23.98" fill="#fff" font-weight="bold" textLength="346.0" lengthAdjust="spacingAndGlyphs">Show the trend data outside of the</text><text x="1510.5" y="175.0" font-size="23.98" fill="#fff" font-weight="bold" textLength="311.5" lengthAdjust="spacingAndGlyphs">capsule limits as dimmed lines.</text><rect x="1060.1" y="169.1" width="17.8" height="17.8" rx="4.0" fill="none" stroke="#333333" stroke-width="2.2"/><path d="M1075,120.3 L1061,120.3 Q1058,120.3 1058,123.3 L1058,136 Q1058,139 1061,139 L1073.2,139 Q1076.2,139 1076.2,136 L1076.2,131.5" fill="none" stroke="#fff" stroke-width="2"/><path d="M1061.5,128.4 L1067.8,134.8 L1079.6,122.6" fill="none" stroke="#fff" stroke-width="4"/></svg>
</body></html>
